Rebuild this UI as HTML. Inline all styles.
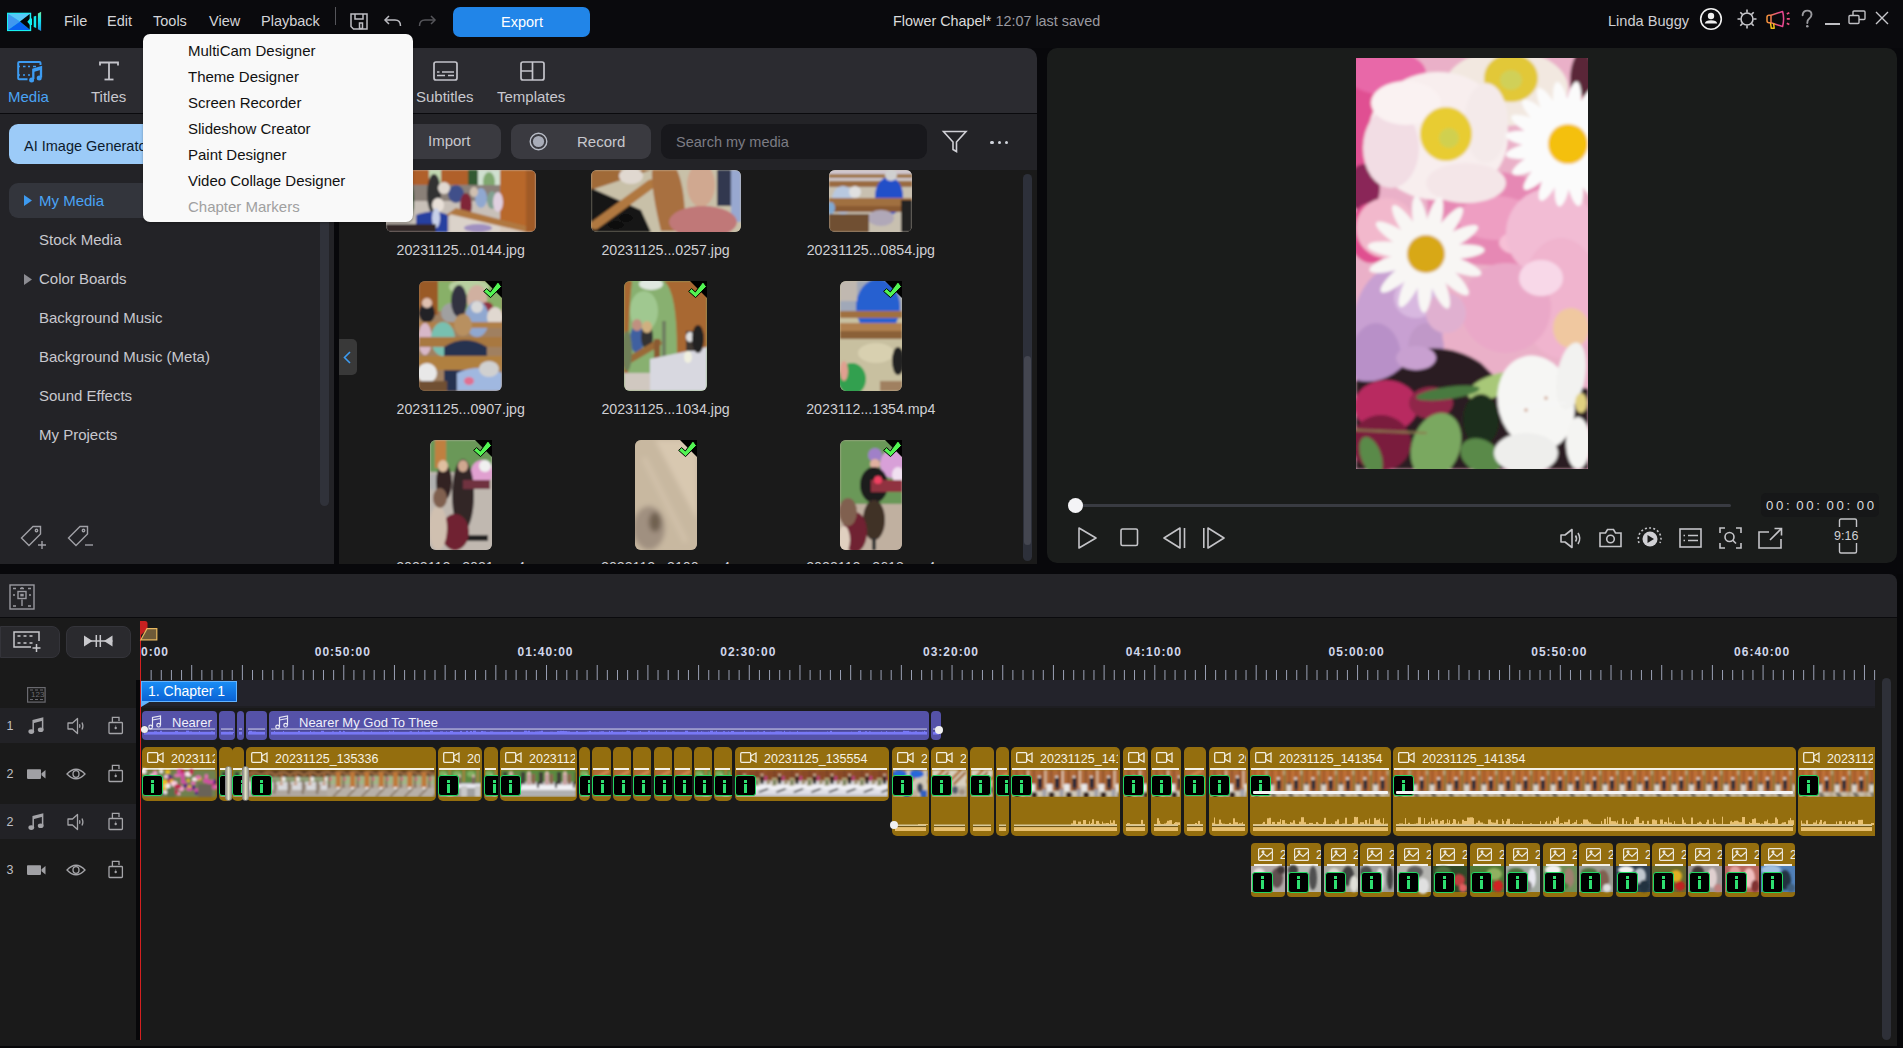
<!DOCTYPE html>
<html><head><meta charset="utf-8">
<style>
*{margin:0;padding:0;box-sizing:border-box}
html,body{width:1903px;height:1048px;overflow:hidden;background:#08080b;font-family:"Liberation Sans",sans-serif;color:#d0d0d4}
.a{position:absolute}
.t{position:absolute;white-space:nowrap;line-height:1}
svg{position:absolute;overflow:visible}
.clipv{position:absolute;background:#946e0e;border-radius:5px;overflow:hidden}
.cliph{position:absolute;left:0;right:0;height:2px;background:#f4f0e6}
.ib{position:absolute;width:21px;height:21px;background:#000;border:1.5px solid #22d862;border-radius:3px}
.ib:after{content:"";position:absolute;left:8px;top:3.5px;width:3px;height:3px;background:#2ee070;box-shadow:0 4px 0 #2ee070,0 6px 0 #2ee070,0 8px 0 #2ee070,0 10px 0 #2ee070}
.ck{position:absolute;width:21px;height:19px}
</style></head><body>

<!-- ============ TOP BAR ============ -->
<div class="a" style="left:0;top:0;width:1903px;height:48px;background:#0a0a0d"></div>
<!-- logo -->
<svg style="left:0;top:0" width="50" height="40" viewBox="0 0 50 40">
 <defs><linearGradient id="lg2" x1="0" y1="0" x2="0" y2="1"><stop offset="0" stop-color="#70e8a0"/><stop offset=".45" stop-color="#10e8f0"/><stop offset="1" stop-color="#2090e0"/></linearGradient></defs>
 <rect x="7" y="12.7" width="24.2" height="18.4" fill="#18f0f0"/>
 <path d="M8 13.7 L30.2 13.7 L20 21.5Z" fill="#58c8f8"/>
 <path d="M8 13.7 L8 30.1 L20 21.5Z" fill="#4098f0"/>
 <path d="M8 30.1 L30.2 30.1 L20 21.5Z" fill="#0862f0"/>
 <path d="M29.7 14 L29.7 29.4 L20 21.5Z" fill="#050508"/>
 <path d="M27.3 21.7 L30 18.5 L32 18.5 L32 25 L30 25Z" fill="#10f0f0"/>
 <path d="M33.7 16.6 L36.2 15.7 L36.2 28 L33.7 27Z" fill="#10eaf0"/>
 <path d="M37.9 13.6 L41.1 11.7 L41.1 31 L37.9 29.2Z" fill="url(#lg2)"/>
</svg>
<div class="t" style="left:64px;top:14px;font-size:14.5px;color:#d4d4d8">File</div>
<div class="t" style="left:107px;top:14px;font-size:14.5px;color:#d4d4d8">Edit</div>
<div class="t" style="left:153px;top:14px;font-size:14.5px;color:#d4d4d8">Tools</div>
<div class="t" style="left:209px;top:14px;font-size:14.5px;color:#d4d4d8">View</div>
<div class="t" style="left:261px;top:14px;font-size:14.5px;color:#d4d4d8">Playback</div>
<div class="a" style="left:335px;top:7px;width:1px;height:18px;background:#55555a"></div>
<!-- save -->
<svg style="left:350px;top:13px" width="19" height="17" viewBox="0 0 19 17" fill="none" stroke="#bdbdc2" stroke-width="1.5">
 <path d="M1 1 H17 V16 H3.5 L1 13.5 Z"/><path d="M5 1 V6 H13 V1"/><rect x="9.5" y="10" width="3" height="5.5"/>
</svg>
<!-- undo -->
<svg style="left:384px;top:15px" width="18" height="12" viewBox="0 0 18 12" fill="none" stroke="#bdbdc2" stroke-width="1.5">
 <path d="M5 1 L1 5 L5 9"/><path d="M1 5 H11 Q16.5 5 16.5 11"/>
</svg>
<!-- redo -->
<svg style="left:418px;top:15px" width="18" height="12" viewBox="0 0 18 12" fill="none" stroke="#55555a" stroke-width="1.5">
 <path d="M13 1 L17 5 L13 9"/><path d="M17 5 H7 Q1.5 5 1.5 11"/>
</svg>
<div class="a" style="left:453px;top:7px;width:137px;height:30px;background:#2185e8;border-radius:7px"></div>
<div class="t" style="left:501px;top:15px;font-size:14.5px;color:#fff">Export</div>
<div class="t" style="left:893px;top:14px;font-size:14.4px;color:#dcdcdc">Flower Chapel* <span style="color:#9a9aa0">12:07 last saved</span></div>
<div class="t" style="left:1608px;top:14px;font-size:14.6px;color:#cfcfd4">Linda Buggy</div>


<!-- right icons -->
<svg style="left:1699px;top:8px" width="24" height="24" viewBox="0 0 24 24" fill="none">
 <circle cx="12" cy="11" r="10.3" stroke="#f0f0f0" stroke-width="1.6"/>
 <circle cx="12" cy="8" r="3.2" fill="#f0f0f0"/><path d="M5.8 15.5 Q6.5 12.2 12 12.2 Q17.5 12.2 18.2 15.5 Z" fill="#f0f0f0"/>
</svg>
<svg style="left:1736px;top:8px" width="22" height="22" viewBox="0 0 22 22" fill="none" stroke="#c8c8cc" stroke-width="1.6">
 <circle cx="11" cy="11" r="6"/>
 <path d="M11 1.5V4.5M11 17.5V20.5M1.5 11H4.5M17.5 11H20.5M4.3 4.3L6.4 6.4M15.6 15.6L17.7 17.7M4.3 17.7L6.4 15.6M15.6 6.4L17.7 4.3"/>
</svg>
<svg style="left:1760px;top:5px" width="60" height="30" viewBox="0 0 60 30" fill="none" stroke-width="1.5" stroke-linejoin="round">
 <defs><linearGradient id="mg" x1="1766" y1="0" x2="1786" y2="0" gradientUnits="userSpaceOnUse"><stop offset="0" stop-color="#f8c020"/><stop offset=".5" stop-color="#f08048"/><stop offset="1" stop-color="#e84890"/></linearGradient>
 <linearGradient id="mg2" x1="0" y1="0" x2="20" y2="0" gradientUnits="userSpaceOnUse"><stop offset="0" stop-color="#f8c020"/><stop offset=".5" stop-color="#f08048"/><stop offset="1" stop-color="#e84890"/></linearGradient></defs>
 <path d="M11 10.2 H9 Q7 10.2 7 12.2 V15.8 Q7 17.8 9 17.8 H11 Z M11 10.2 L22.6 6.5 Q24.6 13.5 22.6 21.5 L11 17.8Z" stroke="url(#mg2)"/>
 <path d="M10.5 17.8 L11.3 23.3 H14.2 L13.6 18.4" stroke="#f4c018"/>
 <path d="M26.8 9 L29.3 7.7M26.8 13.8 H29.8M26.8 18.3 L29.3 19.6" stroke="#e85080" stroke-width="1.7"/>
 <path d="M42.6 10.2 Q43.1 5.6 47.3 5.6 Q51.5 5.6 51.5 9.6 Q51.5 12.3 48.9 14 Q47.3 15 47.3 18" stroke="#9a9a9e" stroke-width="1.9" stroke-linecap="round"/>
 <circle cx="47.3" cy="21.2" r="1.3" fill="#9a9a9e" stroke="none"/>
</svg>

<div class="a" style="left:1825px;top:23px;width:15px;height:1.5px;background:#c0c0c4"></div>
<svg style="left:1848px;top:10px" width="18" height="15" viewBox="0 0 18 15" fill="none" stroke="#c0c0c4" stroke-width="1.4">
 <rect x="1" y="5.5" width="10" height="8" rx="1"/><path d="M5 5.5 V2 Q5 1 6 1 H16 Q17 1 17 2 V8.5 Q17 9.5 16 9.5 H11"/>
</svg>
<svg style="left:1875px;top:11px" width="14" height="14" viewBox="0 0 14 14" stroke="#c8c8cc" stroke-width="1.4"><path d="M1 1L13 13M13 1L1 13"/></svg>


<svg width="0" height="0" style="position:absolute"><defs><pattern id="pt_church" patternUnits="userSpaceOnUse" width="17.3" height="27"><rect x="0" y="0" width="17.3" height="27" fill="#b86a30" opacity="1" /><rect x="3" y="0" width="1.5" height="22" fill="#9a5428" opacity="1" /><rect x="7" y="0" width="1" height="20" fill="#c87a40" opacity="1" /><rect x="10" y="0" width="1.2" height="22" fill="#9a5428" opacity="1" /><rect x="15.6" y="0" width="1.7" height="22" fill="#7a7a40" opacity="1" /><rect x="15" y="0" width="1" height="5" fill="#e0d8c0" opacity="1" /><rect x="1" y="14" width="5" height="8" fill="#d8d4cc" opacity="1" /><rect x="2" y="12" width="3" height="3" fill="#605848" opacity="1" /><ellipse cx="10" cy="8.5" rx="1.5" ry="1.5" fill="#e0e0e0" opacity="1"/><rect x="8.6" y="10" width="3.8" height="9" fill="#242a38" opacity="1" /><rect x="9" y="19" width="3" height="4" fill="#6a4030" opacity="1" /><rect x="0" y="22" width="17.3" height="5" fill="#c8bca8" opacity="1" /><path d="M3 23 L5 27" stroke="#181818" stroke-width="1.2" stroke-linecap="round"/><path d="M5.5 23 L7.5 27" stroke="#181818" stroke-width="1.0" stroke-linecap="round"/><rect x="13" y="22" width="4" height="5" fill="#b8a890" opacity="1" /></pattern><pattern id="pt_people" patternUnits="userSpaceOnUse" width="17.3" height="27"><rect x="0" y="0" width="17.3" height="27" fill="#b06a38" opacity="1" /><rect x="4" y="0" width="1.2" height="20" fill="#7a4020" opacity="1" /><rect x="12" y="0" width="1.2" height="20" fill="#8a4a28" opacity="1" /><rect x="15.5" y="0" width="1.2" height="18" fill="#f0ece0" opacity="1" /><rect x="0" y="14" width="6" height="8" fill="#e8e8e8" opacity="1" /><ellipse cx="10" cy="7" rx="1.4" ry="1.6" fill="#e0e0e0" opacity="1"/><rect x="8.5" y="8" width="4" height="10" fill="#202838" opacity="1" /><rect x="9" y="18" width="3" height="4" fill="#704028" opacity="1" /><rect x="0" y="21" width="17.3" height="6" fill="#d0c8b8" opacity="1" /><ellipse cx="5" cy="25" rx="3" ry="3" fill="#302020" opacity="1"/><rect x="13" y="19" width="4" height="8" fill="#a0a0a8" opacity="1" /></pattern><pattern id="pt_table" patternUnits="userSpaceOnUse" width="17.5" height="27"><rect x="0" y="0" width="17.5" height="27" fill="#e0e0e6" opacity="1" /><rect x="0" y="0" width="17.5" height="11" fill="#8a4a28" opacity="1" /><rect x="3" y="0" width="1" height="11" fill="#6a3a20" opacity="1" /><rect x="11" y="0" width="1" height="11" fill="#a05a30" opacity="1" /><rect x="7" y="5" width="3" height="9" fill="#1a1a1a" opacity="1" /><ellipse cx="8.5" cy="5" rx="1.3" ry="1.5" fill="#e0c0a0" opacity="1"/><rect x="11" y="6" width="2.5" height="5" fill="#c04080" opacity="1" /><rect x="1" y="8" width="5" height="9" fill="#c0b080" opacity="1" /><rect x="2" y="9.5" width="3" height="6" fill="#708060" opacity="1" /><rect x="13" y="10" width="4" height="7" fill="#a09070" opacity="1" /><path d="M0 16 L17.5 14 L17.5 18 L0 20Z" fill="#f0f0f4" opacity="1"/><path d="M6 22 L14 19" stroke="#303030" stroke-width="1.6" stroke-linecap="round"/><rect x="0" y="24" width="17.5" height="3" fill="#c8c8d0" opacity="1" /></pattern><pattern id="pt_arch1" patternUnits="userSpaceOnUse" width="14.3" height="27"><rect x="0" y="0" width="14.3" height="27" fill="#a8a098" opacity="1" /><rect x="0" y="0" width="14.3" height="7" fill="#5a3a20" opacity="1" /><path d="M0 7 Q7 0 14.3 7 L14.3 4 Q7 -2 0 4Z" fill="#9a6a40" opacity="1"/><rect x="0" y="7" width="14.3" height="6" fill="#90a078" opacity="1" /><rect x="5" y="4" width="2" height="12" fill="#b87038" opacity="1" /><ellipse cx="8" cy="9" rx="2" ry="2.5" fill="#f0f0f0" opacity="1"/><rect x="1" y="12" width="12" height="8" fill="#d8d8dc" opacity="1" /><rect x="4" y="13" width="3" height="2" fill="#c08050" opacity="1" /><rect x="0" y="14" width="2" height="8" fill="#a09080" opacity="1" /><rect x="0" y="20" width="14.3" height="7" fill="#b0a8a0" opacity="1" /><rect x="12" y="10" width="2" height="14" fill="#807060" opacity="1" /></pattern><pattern id="pt_arch2" patternUnits="userSpaceOnUse" width="14.3" height="27"><rect x="0" y="0" width="14.3" height="27" fill="#b0a898" opacity="1" /><rect x="0" y="0" width="14.3" height="6" fill="#5a3a20" opacity="1" /><path d="M0 6 Q7 0 14.3 6 L14.3 3 Q7 -2 0 3Z" fill="#9a6a40" opacity="1"/><rect x="0" y="6" width="14.3" height="8" fill="#a0b888" opacity="1" /><rect x="3" y="2" width="5" height="18" fill="#c07838" opacity="1" /><rect x="10" y="4" width="1.5" height="14" fill="#705040" opacity="1" /><ellipse cx="12" cy="9" rx="1.5" ry="2" fill="#d07080" opacity="1"/><rect x="0" y="18" width="14.3" height="9" fill="#b8b0a8" opacity="1" /><path d="M0 27 L8 19" stroke="#908070" stroke-width="2" stroke-linecap="round"/><rect x="4" y="17" width="3" height="2" fill="#f0f0f0" opacity="1" /></pattern><pattern id="pt_green" patternUnits="userSpaceOnUse" width="14" height="27"><rect x="0" y="0" width="14" height="27" fill="#a8a8a8" opacity="1" /><rect x="0" y="0" width="14" height="13" fill="#5a8a40" opacity="1" /><ellipse cx="4" cy="4" rx="4" ry="3" fill="#80b060" opacity="1"/><rect x="10" y="0" width="1.5" height="12" fill="#c08040" opacity="1" /><rect x="5" y="6" width="3" height="10" fill="#806060" opacity="1" /><ellipse cx="6.5" cy="6" rx="1.3" ry="1.5" fill="#e0c0b0" opacity="1"/><rect x="0" y="14" width="14" height="4" fill="#e8e8f0" opacity="1" /><rect x="0" y="18" width="14" height="9" fill="#a0a0a0" opacity="1" /><rect x="8" y="16" width="6" height="11" fill="#c8c8c8" opacity="1" /></pattern><pattern id="pt_greenp" patternUnits="userSpaceOnUse" width="18" height="27"><rect x="0" y="0" width="18" height="27" fill="#c0c0c0" opacity="1" /><rect x="0" y="0" width="18" height="12" fill="#5a8a40" opacity="1" /><rect x="2" y="2" width="4" height="12" fill="#403838" opacity="1" /><rect x="8" y="3" width="4" height="14" fill="#c8a0a0" opacity="1" /><ellipse cx="10" cy="3" rx="1.5" ry="1.8" fill="#e0c0b0" opacity="1"/><rect x="13" y="4" width="3" height="10" fill="#906050" opacity="1" /><rect x="0" y="15" width="18" height="5" fill="#f0f0f4" opacity="1" /><rect x="0" y="20" width="18" height="7" fill="#b0b0b0" opacity="1" /><rect x="0" y="12" width="2" height="6" fill="#202020" opacity="1" /></pattern><pattern id="pt_wood" patternUnits="userSpaceOnUse" width="17" height="27"><rect x="0" y="0" width="17" height="27" fill="#b06a38" opacity="1" /><path d="M0 10 L17 0" stroke="#d08a50" stroke-width="3" stroke-linecap="round"/><path d="M0 20 L17 8" stroke="#8a5028" stroke-width="2" stroke-linecap="round"/><rect x="0" y="22" width="17" height="5" fill="#a07050" opacity="1" /></pattern><pattern id="pt_roof" patternUnits="userSpaceOnUse" width="17" height="27"><rect x="0" y="0" width="17" height="27" fill="#d8d0c0" opacity="1" /><path d="M0 12 L12 0" stroke="#b07840" stroke-width="3" stroke-linecap="round"/><path d="M5 14 L17 2" stroke="#a06830" stroke-width="2.5" stroke-linecap="round"/><rect x="0" y="16" width="17" height="11" fill="#c0b8a8" opacity="1" /><ellipse cx="6" cy="20" rx="3" ry="4" fill="#505868" opacity="1"/><ellipse cx="13" cy="22" rx="3" ry="3" fill="#a09080" opacity="1"/></pattern><pattern id="pt_blue" patternUnits="userSpaceOnUse" width="17" height="27"><rect x="0" y="0" width="17" height="27" fill="#d0c8b8" opacity="1" /><path d="M0 12 L12 0" stroke="#b07840" stroke-width="3" stroke-linecap="round"/><ellipse cx="6" cy="4" rx="8" ry="4" fill="#2868d8" opacity="1"/><ellipse cx="10" cy="18" rx="3" ry="5" fill="#404858" opacity="1"/><ellipse cx="14" cy="24" rx="4" ry="4" fill="#3060c0" opacity="1"/><rect x="0" y="20" width="8" height="7" fill="#c0b0a0" opacity="1" /></pattern><filter id="sb" x="-5%" y="-20%" width="110%" height="140%"><feGaussianBlur stdDeviation="0.9"/></filter></defs></svg>
<div class="a" style="left:0px;top:48px;width:1037px;height:65px;background:#2b2b30;border-top-right-radius:10px"></div>
<div class="a" style="left:0px;top:113px;width:1037px;height:1px;background:#0a0a0d;"></div>
<div class="a" style="left:0px;top:114px;width:1037px;height:56px;background:#232327;"></div>
<svg style="left:10px;top:55px" width="40" height="33" viewBox="0 0 40 33" fill="none" stroke="#3d9cf2">
 <path d="M17.5 24.2 H9.2 Q8.2 24.2 8.2 23.2 V8 Q8.2 7 9.2 7 H29.5 Q30.5 7 30.5 8 V10" stroke-width="2"/>
 <path d="M9 11.5H10M13 11.5H15.5M18 11.5H20M23 11.5H26M9 20H10M13 20H15M18 20H20" stroke-width="1.7"/>
 <path d="M23.3 24 V14.5 L31 12.2 V22.5" stroke-width="2.3"/>
 <path d="M23.3 16 L31 13.7" stroke-width="2"/>
 <circle cx="21.6" cy="25" r="2.5" fill="#3d9cf2" stroke="none"/><circle cx="29.2" cy="23" r="2.5" fill="#3d9cf2" stroke="none"/>
</svg>
<div class="t" style="left:8px;top:89px;font-size:15px;color:#4aa3f4;">Media</div>
<svg style="left:99px;top:61px" width="20" height="20" viewBox="0 0 20 20" fill="none" stroke="#c4c4ca" stroke-width="1.8">
 <path d="M1 4.5 V1.5 H19 V4.5"/><path d="M10 1.5 V18.5"/><path d="M5.5 18.5 H14.5"/>
</svg>
<div class="t" style="left:91px;top:89px;font-size:15px;color:#c8c8ce;">Titles</div>
<svg style="left:433px;top:61px" width="25" height="20" viewBox="0 0 25 20" fill="none" stroke="#c4c4ca" stroke-width="1.7">
 <rect x="1" y="1" width="23" height="18" rx="2"/><path d="M4 11H6.5M9 11H21M4 14.5H12M15 14.5H21"/>
</svg>
<div class="t" style="left:416px;top:89px;font-size:15px;color:#c8c8ce;">Subtitles</div>
<svg style="left:520px;top:61px" width="25" height="20" viewBox="0 0 25 20" fill="none" stroke="#c4c4ca" stroke-width="1.7">
 <rect x="1" y="1" width="23" height="18" rx="2"/><path d="M12.5 1V19M1 10H12.5"/>
</svg>
<div class="t" style="left:497px;top:89px;font-size:15px;color:#c8c8ce;">Templates</div>
<div class="a" style="left:9px;top:124px;width:160px;height:40px;background:#9ccbf8;border-radius:9px"></div>
<div class="t" style="left:24px;top:139px;font-size:14.5px;color:#0c1a2c;">AI Image Generator</div>
<div class="a" style="left:360px;top:124px;width:141px;height:35px;background:#3a3a40;border-radius:9px"></div>
<div class="t" style="left:428px;top:133px;font-size:15px;color:#c8c8ce;">Import</div>
<div class="a" style="left:511px;top:124px;width:140px;height:35px;background:#3a3a40;border-radius:9px"></div>
<svg style="left:529px;top:132px" width="19" height="19" viewBox="0 0 19 19"><circle cx="9.5" cy="9.5" r="8.3" fill="none" stroke="#b8bcc6" stroke-width="1.4"/><circle cx="9.5" cy="9.5" r="5.6" fill="#a8acb8"/></svg>
<div class="t" style="left:577px;top:134px;font-size:15px;color:#c8c8ce;">Record</div>
<div class="a" style="left:661px;top:124px;width:266px;height:35px;background:#18181c;border-radius:9px"></div>
<div class="t" style="left:676px;top:135px;font-size:14.5px;color:#7c7c84;">Search my media</div>
<svg style="left:942px;top:130px" width="26" height="23" viewBox="0 0 26 23" fill="none" stroke="#d0d0d6" stroke-width="1.6"><path d="M1.5 1.5 H24 L14.5 12 V21.5 L11 19.5 V12 Z"/></svg>
<div class="a" style="left:990.4px;top:140.6px;width:3.3px;height:3.3px;border-radius:50%;background:#d0d4dc"></div>
<div class="a" style="left:997.9px;top:140.6px;width:3.3px;height:3.3px;border-radius:50%;background:#d0d4dc"></div>
<div class="a" style="left:1004.9px;top:140.6px;width:3.3px;height:3.3px;border-radius:50%;background:#d0d4dc"></div>
<div class="a" style="left:0px;top:170px;width:334px;height:394px;background:#232327;"></div>
<div class="a" style="left:334px;top:170px;width:5px;height:394px;background:#08080b;"></div>
<div class="a" style="left:9px;top:183px;width:325px;height:35px;background:#33353c;border-radius:9px"></div>
<svg style="left:24px;top:195px" width="8" height="11" viewBox="0 0 8 11"><path d="M0 0 L8 5.5 L0 11Z" fill="#3d9af0"/></svg>
<div class="t" style="left:39px;top:193px;font-size:15px;color:#4aa3f4;">My Media</div>
<div class="t" style="left:39px;top:232px;font-size:15px;color:#c8c8ce;">Stock Media</div>
<svg style="left:24px;top:274px" width="8" height="11" viewBox="0 0 8 11"><path d="M0 0 L8 5.5 L0 11Z" fill="#8c8c92"/></svg>
<div class="t" style="left:39px;top:271px;font-size:15px;color:#c8c8ce;">Color Boards</div>
<div class="t" style="left:39px;top:310px;font-size:15px;color:#c8c8ce;">Background Music</div>
<div class="t" style="left:39px;top:349px;font-size:15px;color:#c8c8ce;">Background Music (Meta)</div>
<div class="t" style="left:39px;top:388px;font-size:15px;color:#c8c8ce;">Sound Effects</div>
<div class="t" style="left:39px;top:427px;font-size:15px;color:#c8c8ce;">My Projects</div>
<div class="a" style="left:320px;top:183px;width:9px;height:323px;background:#30323a;border-radius:5px"></div>
<svg style="left:20px;top:524px" width="28" height="26" viewBox="0 0 28 26" fill="none" stroke="#a0a0a6" stroke-width="1.4">
 <path d="M1.5 14 L13 2.5 H20.5 V10 L9 21.5 Z"/><circle cx="16.5" cy="6.5" r="1.2"/><path d="M22 17V25M18 21H26"/></svg>
<svg style="left:67px;top:524px" width="28" height="26" viewBox="0 0 28 26" fill="none" stroke="#a0a0a6" stroke-width="1.4">
 <path d="M1.5 14 L13 2.5 H20.5 V10 L9 21.5 Z"/><circle cx="16.5" cy="6.5" r="1.2"/><path d="M18 21H26"/></svg>
<div class="a" style="left:339px;top:170px;width:698px;height:394px;background:#1a1a1a;"></div>
<svg style="left:386px;top:170px" width="150" height="62" viewBox="0 0 150 62"><defs><clipPath id="pc1"><rect x="0" y="0" width="150" height="62" rx="6"/></clipPath><filter id="pf1" x="-20%" y="-20%" width="140%" height="140%"><feGaussianBlur stdDeviation="0.9"/></filter></defs><g clip-path="url(#pc1)"><rect width="150" height="62" fill="#c8c0b8"/><g filter="url(#pf1)"><rect x="0" y="0" width="150" height="62" fill="#c8c0b8" opacity="1" /><rect x="0" y="0" width="150" height="18" fill="#b0602a" opacity="1" /><rect x="43" y="0" width="12" height="16" fill="#c0d8b0" opacity="1" /><rect x="82" y="0" width="10" height="24" fill="#305a30" opacity="1" /><rect x="92" y="0" width="22" height="22" fill="#d0e0d0" opacity="1" /><ellipse cx="103" cy="12" rx="6" ry="10" fill="#80a870" opacity="1"/><rect x="114" y="0" width="36" height="62" fill="#b8682a" opacity="1" /><rect x="140" y="0" width="10" height="62" fill="#a05a28" opacity="1" /><rect x="0" y="15" width="114" height="16" fill="#8a8078" opacity="1" /><ellipse cx="10" cy="30" rx="10" ry="14" fill="#504040" opacity="1"/><ellipse cx="22" cy="30" rx="6" ry="20" fill="#305838" opacity="1"/><ellipse cx="48" cy="24" rx="7" ry="20" fill="#303030" opacity="1"/><ellipse cx="70" cy="24" rx="8" ry="9" fill="#40508a" opacity="1"/><ellipse cx="58" cy="18" rx="6" ry="6" fill="#e0d8d0" opacity="1"/><ellipse cx="95" cy="28" rx="6" ry="10" fill="#90a8d0" opacity="1"/><ellipse cx="106" cy="30" rx="5" ry="9" fill="#80a090" opacity="1"/><ellipse cx="112" cy="32" rx="5" ry="10" fill="#e0d0e0" opacity="1"/><ellipse cx="80" cy="35" rx="6" ry="12" fill="#802838" opacity="1"/><ellipse cx="88" cy="22" rx="4" ry="5" fill="#d0c0b0" opacity="1"/><path d="M30 45 Q48 38 62 45 L62 62 L30 62Z" fill="#2840a0" opacity="1"/><ellipse cx="52" cy="35" rx="6" ry="7" fill="#e8e0d8" opacity="1"/><ellipse cx="50" cy="48" rx="4" ry="10" fill="#c8d0e8" opacity="1"/><path d="M70 38 L140 56 L140 62 L60 45Z" fill="#b07840" opacity="1"/><path d="M64 44 L140 62 L64 62Z" fill="#ddd5cc" opacity="0.9"/><rect x="0" y="54" width="50" height="8" fill="#302828" opacity="1" /><ellipse cx="92" cy="58" rx="14" ry="4" fill="#a090c0" opacity="1"/></g></g></svg>
<svg style="left:591px;top:170px" width="150" height="62" viewBox="0 0 150 62"><defs><clipPath id="pc2"><rect x="0" y="0" width="150" height="62" rx="6"/></clipPath><filter id="pf2" x="-20%" y="-20%" width="140%" height="140%"><feGaussianBlur stdDeviation="1.0"/></filter></defs><g clip-path="url(#pc2)"><rect width="150" height="62" fill="#c8c0a8"/><g filter="url(#pf2)"><rect x="0" y="0" width="150" height="62" fill="#c8c0a8" opacity="1" /><path d="M0 0 H60 L0 20Z" fill="#a06a38" opacity="1"/><ellipse cx="40" cy="6" rx="12" ry="8" fill="#e0d8d0" opacity="1"/><path d="M0 18 L50 40 L60 62 L0 62Z" fill="#181818" opacity="1"/><path d="M4 55 L60 14" stroke="#b07840" stroke-width="9" stroke-linecap="round"/><path d="M61 0 H86 Q95 20 94 61 H70 Q60 20 61 0Z" fill="#a87040" opacity="1"/><ellipse cx="110" cy="15" rx="14" ry="22" fill="#d0a890" opacity="1"/><rect x="126" y="0" width="16" height="36" fill="#303850" opacity="1" /><rect x="140" y="0" width="10" height="52" fill="#98a8d0" opacity="1" /><ellipse cx="112" cy="52" rx="34" ry="16" fill="#c07878" opacity="1"/><ellipse cx="25" cy="55" rx="8" ry="4" fill="#101010" opacity="1"/><ellipse cx="35" cy="48" rx="7" ry="4" fill="#101010" opacity="1"/></g></g></svg>
<svg style="left:829px;top:170px" width="83" height="62" viewBox="0 0 83 62"><defs><clipPath id="pc3"><rect x="0" y="0" width="83" height="62" rx="6"/></clipPath><filter id="pf3" x="-20%" y="-20%" width="140%" height="140%"><feGaussianBlur stdDeviation="0.9"/></filter></defs><g clip-path="url(#pc3)"><rect width="83" height="62" fill="#c8c0b0"/><g filter="url(#pf3)"><rect x="0" y="0" width="83" height="62" fill="#c8c0b0" opacity="1" /><rect x="0" y="0" width="83" height="10" fill="#d0c8d0" opacity="1" /><rect x="0" y="4" width="83" height="4" fill="#a07848" opacity="1" /><rect x="0" y="11" width="83" height="6" fill="#9a6a40" opacity="1" /><ellipse cx="14" cy="30" rx="11" ry="14" fill="#b8c8e0" opacity="1"/><ellipse cx="26" cy="22" rx="6" ry="6" fill="#e0e0e0" opacity="1"/><ellipse cx="60" cy="26" rx="14" ry="19" fill="#2050c8" opacity="1"/><ellipse cx="62" cy="5" rx="6" ry="6" fill="#d0d0d0" opacity="1"/><rect x="0" y="28" width="83" height="8" fill="#a07040" opacity="1" /><rect x="0" y="36" width="83" height="6" fill="#8a5a30" opacity="1" /><ellipse cx="52" cy="48" rx="13" ry="8" fill="#b0a8b8" opacity="1"/><rect x="0" y="44" width="40" height="18" fill="#705030" opacity="1" /><rect x="72" y="30" width="11" height="32" fill="#202020" opacity="1" /><ellipse cx="2" cy="38" rx="4" ry="6" fill="#80a8d0" opacity="1"/></g></g></svg>
<div class="t" style="left:380.7px;width:160px;text-align:center;top:243px;font-size:14.2px;color:#cfcfd4">20231125...0144.jpg</div>
<div class="t" style="left:585.6px;width:160px;text-align:center;top:243px;font-size:14.2px;color:#cfcfd4">20231125...0257.jpg</div>
<div class="t" style="left:790.8px;width:160px;text-align:center;top:243px;font-size:14.2px;color:#cfcfd4">20231125...0854.jpg</div>
<svg style="left:419px;top:281px" width="83" height="110" viewBox="0 0 83 110"><defs><clipPath id="pc4"><rect x="0" y="0" width="83" height="110" rx="6"/></clipPath><filter id="pf4" x="-20%" y="-20%" width="140%" height="140%"><feGaussianBlur stdDeviation="0.9"/></filter></defs><g clip-path="url(#pc4)"><rect width="83" height="110" fill="#a08060"/><g filter="url(#pf4)"><rect x="0" y="0" width="83" height="110" fill="#a08060" opacity="1" /><rect x="0" y="0" width="83" height="30" fill="#88b068" opacity="1" /><ellipse cx="50" cy="6" rx="20" ry="8" fill="#b8d0a0" opacity="1"/><rect x="0" y="0" width="19" height="34" fill="#9a5a28" opacity="1" /><ellipse cx="8" cy="32" rx="8" ry="10" fill="#202028" opacity="1"/><ellipse cx="8" cy="22" rx="5" ry="5" fill="#e0c0b0" opacity="1"/><ellipse cx="32" cy="32" rx="10" ry="10" fill="#a0a0a0" opacity="1"/><ellipse cx="40" cy="20" rx="8" ry="16" fill="#303040" opacity="1"/><ellipse cx="58" cy="18" rx="10" ry="14" fill="#d0b0a0" opacity="1"/><ellipse cx="68" cy="26" rx="6" ry="5" fill="#903040" opacity="1"/><ellipse cx="58" cy="38" rx="12" ry="18" fill="#90a8d0" opacity="1"/><ellipse cx="58" cy="26" rx="6" ry="6" fill="#d8d8d8" opacity="1"/><ellipse cx="76" cy="36" rx="8" ry="10" fill="#e0d8d0" opacity="1"/><rect x="0" y="41" width="83" height="6" fill="#b08048" opacity="1" /><ellipse cx="6" cy="58" rx="7" ry="16" fill="#d8b8c8" opacity="1"/><ellipse cx="24" cy="58" rx="12" ry="17" fill="#78c0b0" opacity="1"/><ellipse cx="44" cy="44" rx="9" ry="11" fill="#b89060" opacity="1"/><rect x="0" y="56" width="83" height="10" fill="#a87840" opacity="1" /><path d="M25 66 Q46 52 68 66 L68 110 L25 110Z" fill="#283050" opacity="1"/><rect x="0" y="75" width="83" height="14" fill="#b08040" opacity="1" /><ellipse cx="8" cy="92" rx="10" ry="10" fill="#e8e8e8" opacity="1"/><path d="M38 92 Q60 82 83 92 L83 110 L38 110Z" fill="#a0b8e0" opacity="1"/><ellipse cx="70" cy="88" rx="10" ry="8" fill="#d0d0d0" opacity="1"/><ellipse cx="50" cy="100" rx="5" ry="4" fill="#e07090" opacity="1"/><rect x="0" y="100" width="28" height="10" fill="#705030" opacity="1" /></g></g></svg>
<svg style="left:624px;top:281px" width="83" height="110" viewBox="0 0 83 110"><defs><clipPath id="pc5"><rect x="0" y="0" width="83" height="110" rx="6"/></clipPath><filter id="pf5" x="-20%" y="-20%" width="140%" height="140%"><feGaussianBlur stdDeviation="0.9"/></filter></defs><g clip-path="url(#pc5)"><rect width="83" height="110" fill="#88b070"/><g filter="url(#pf5)"><rect x="0" y="0" width="83" height="110" fill="#88b070" opacity="1" /><path d="M0 0 H8 Q4 30 4 110 H0Z" fill="#a86830" opacity="1"/><path d="M40 0 H83 V110 H53 V70 Q53 10 40 0Z" fill="#a86830" opacity="1"/><ellipse cx="27" cy="3" rx="12" ry="6" fill="#e0e8e0" opacity="1"/><ellipse cx="20" cy="30" rx="14" ry="20" fill="#a0c890" opacity="1"/><rect x="38" y="40" width="4" height="40" fill="#708060" opacity="1" /><ellipse cx="13" cy="58" rx="7" ry="14" fill="#4060a0" opacity="1"/><ellipse cx="13" cy="44" rx="5" ry="6" fill="#c09080" opacity="1"/><ellipse cx="23" cy="56" rx="6" ry="12" fill="#303030" opacity="1"/><ellipse cx="23" cy="46" rx="5" ry="6" fill="#d0b080" opacity="1"/><path d="M0 82 L34 62" stroke="#9a6a38" stroke-width="7" stroke-linecap="round"/><rect x="30" y="58" width="6" height="40" fill="#8a5a30" opacity="1" /><ellipse cx="3" cy="70" rx="5" ry="20" fill="#708058" opacity="1"/><rect x="0" y="92" width="28" height="18" fill="#d0c8c0" opacity="1" /><path d="M26 78 L83 66 L83 110 L26 110Z" fill="#d8d8e0" opacity="1"/><rect x="62" y="50" width="14" height="20" fill="#403830" opacity="1" /><ellipse cx="66" cy="56" rx="4" ry="5" fill="#e0e0e0" opacity="1"/><ellipse cx="74" cy="58" rx="6" ry="14" fill="#202020" opacity="1"/><ellipse cx="64" cy="76" rx="4" ry="6" fill="#f0f0e0" opacity="1"/></g></g></svg>
<svg style="left:840px;top:281px" width="62" height="110" viewBox="0 0 62 110"><defs><clipPath id="pc6"><rect x="0" y="0" width="62" height="110" rx="6"/></clipPath><filter id="pf6" x="-20%" y="-20%" width="140%" height="140%"><feGaussianBlur stdDeviation="0.9"/></filter></defs><g clip-path="url(#pc6)"><rect width="62" height="110" fill="#c8c0a0"/><g filter="url(#pf6)"><rect x="0" y="0" width="62" height="110" fill="#c8c0a0" opacity="1" /><rect x="0" y="0" width="62" height="30" fill="#a0a8b8" opacity="1" /><ellipse cx="38" cy="26" rx="22" ry="28" fill="#2860d0" opacity="1"/><rect x="0" y="0" width="17" height="20" fill="#c0b8b0" opacity="1" /><rect x="0" y="30" width="62" height="7" fill="#a07040" opacity="1" /><rect x="0" y="42" width="62" height="8" fill="#b08050" opacity="1" /><rect x="0" y="50" width="62" height="8" fill="#8a6038" opacity="1" /><rect x="0" y="58" width="62" height="43" fill="#c8c0a0" opacity="1" /><ellipse cx="36" cy="72" rx="18" ry="10" fill="#d8d0b0" opacity="1"/><ellipse cx="12" cy="98" rx="14" ry="16" fill="#30a050" opacity="1"/><ellipse cx="4" cy="90" rx="4" ry="10" fill="#e0a090" opacity="1"/><ellipse cx="58" cy="80" rx="6" ry="14" fill="#202020" opacity="1"/><rect x="40" y="100" width="22" height="10" fill="#a08060" opacity="1" /></g></g></svg>
<svg style="left:480px;top:281px" width="22" height="20" viewBox="0 0 22 20"><path d="M5 0 H22 V17 Z" fill="#000"/><path d="M3.6 10.4 L6.6 7.6 L10.3 11 L18 0.8 L21.4 5.6 L10.6 16.6 Z" fill="#52f452" stroke="#000" stroke-width="1" stroke-linejoin="round"/></svg>
<svg style="left:685px;top:281px" width="22" height="20" viewBox="0 0 22 20"><path d="M5 0 H22 V17 Z" fill="#000"/><path d="M3.6 10.4 L6.6 7.6 L10.3 11 L18 0.8 L21.4 5.6 L10.6 16.6 Z" fill="#52f452" stroke="#000" stroke-width="1" stroke-linejoin="round"/></svg>
<svg style="left:880px;top:281px" width="22" height="20" viewBox="0 0 22 20"><path d="M5 0 H22 V17 Z" fill="#000"/><path d="M3.6 10.4 L6.6 7.6 L10.3 11 L18 0.8 L21.4 5.6 L10.6 16.6 Z" fill="#52f452" stroke="#000" stroke-width="1" stroke-linejoin="round"/></svg>
<div class="t" style="left:380.7px;width:160px;text-align:center;top:402px;font-size:14.2px;color:#cfcfd4">20231125...0907.jpg</div>
<div class="t" style="left:585.6px;width:160px;text-align:center;top:402px;font-size:14.2px;color:#cfcfd4">20231125...1034.jpg</div>
<div class="t" style="left:790.8px;width:160px;text-align:center;top:402px;font-size:14.2px;color:#cfcfd4">2023112...1354.mp4</div>
<svg style="left:430px;top:440px" width="62" height="110" viewBox="0 0 62 110"><defs><clipPath id="pc7"><rect x="0" y="0" width="62" height="110" rx="6"/></clipPath><filter id="pf7" x="-20%" y="-20%" width="140%" height="140%"><feGaussianBlur stdDeviation="0.9"/></filter></defs><g clip-path="url(#pc7)"><rect width="62" height="110" fill="#c0b8b0"/><g filter="url(#pf7)"><rect x="0" y="0" width="62" height="110" fill="#c0b8b0" opacity="1" /><rect x="0" y="0" width="62" height="32" fill="#6a9858" opacity="1" /><rect x="5" y="0" width="11" height="28" fill="#c08040" opacity="1" /><ellipse cx="52" cy="32" rx="11" ry="12" fill="#e0a0d0" opacity="1"/><ellipse cx="55" cy="26" rx="6" ry="6" fill="#f0f0f0" opacity="1"/><ellipse cx="3" cy="42" rx="6" ry="8" fill="#b0b0b0" opacity="1"/><ellipse cx="14" cy="42" rx="8" ry="18" fill="#302020" opacity="1"/><ellipse cx="13" cy="26" rx="5" ry="6" fill="#e0c0a0" opacity="1"/><ellipse cx="33" cy="55" rx="11" ry="36" fill="#302828" opacity="1"/><ellipse cx="33" cy="26" rx="5" ry="6" fill="#d0a890" opacity="1"/><rect x="33" y="40" width="27" height="9" fill="#703040" opacity="1" /><rect x="28" y="95" width="30" height="6" fill="#202020" opacity="1" /><ellipse cx="25" cy="92" rx="14" ry="18" fill="#702030" opacity="1"/><ellipse cx="8" cy="88" rx="9" ry="22" fill="#d0c0b0" opacity="1"/><ellipse cx="10" cy="58" rx="7" ry="10" fill="#806050" opacity="1"/></g></g></svg>
<svg style="left:635px;top:440px" width="62" height="110" viewBox="0 0 62 110"><defs><clipPath id="pc8"><rect x="0" y="0" width="62" height="110" rx="6"/></clipPath><filter id="pf8" x="-20%" y="-20%" width="140%" height="140%"><feGaussianBlur stdDeviation="2.5"/></filter></defs><g clip-path="url(#pc8)"><rect width="62" height="110" fill="#c8b8a0"/><g filter="url(#pf8)"><rect x="0" y="0" width="62" height="110" fill="#c8b8a0" opacity="1" /><path d="M20 0 L62 0 L62 80 Z" fill="#d8c8b0" opacity="1"/><path d="M10 20 L50 100" stroke="#d0c0a8" stroke-width="6" stroke-linecap="round"/><ellipse cx="14" cy="88" rx="16" ry="22" fill="#a09080" opacity="1"/><ellipse cx="20" cy="82" rx="6" ry="10" fill="#706050" opacity="1"/></g></g></svg>
<svg style="left:840px;top:440px" width="62" height="110" viewBox="0 0 62 110"><defs><clipPath id="pc9"><rect x="0" y="0" width="62" height="110" rx="6"/></clipPath><filter id="pf9" x="-20%" y="-20%" width="140%" height="140%"><feGaussianBlur stdDeviation="0.9"/></filter></defs><g clip-path="url(#pc9)"><rect width="62" height="110" fill="#c0b0a0"/><g filter="url(#pf9)"><rect x="0" y="0" width="62" height="110" fill="#c0b0a0" opacity="1" /><rect x="0" y="0" width="62" height="64" fill="#6a9858" opacity="1" /><ellipse cx="52" cy="24" rx="12" ry="14" fill="#d8a0d8" opacity="1"/><ellipse cx="58" cy="35" rx="6" ry="8" fill="#f0e0f0" opacity="1"/><ellipse cx="35" cy="15" rx="7" ry="7" fill="#a080c8" opacity="1"/><ellipse cx="35" cy="24" rx="5" ry="5" fill="#e0b0a0" opacity="1"/><ellipse cx="34" cy="45" rx="14" ry="18" fill="#1e1e1e" opacity="1"/><rect x="31" y="40" width="31" height="12" fill="#903040" opacity="1" /><ellipse cx="38" cy="40" rx="4" ry="4" fill="#f04060" opacity="1"/><ellipse cx="34" cy="80" rx="11" ry="20" fill="#403028" opacity="1"/><rect x="32" y="98" width="4" height="12" fill="#303030" opacity="1" /><ellipse cx="15" cy="92" rx="12" ry="20" fill="#702030" opacity="1"/><ellipse cx="8" cy="72" rx="9" ry="14" fill="#806050" opacity="1"/><ellipse cx="4" cy="100" rx="6" ry="14" fill="#e0d0c0" opacity="1"/></g></g></svg>
<svg style="left:470px;top:440px" width="22" height="20" viewBox="0 0 22 20"><path d="M5 0 H22 V17 Z" fill="#000"/><path d="M3.6 10.4 L6.6 7.6 L10.3 11 L18 0.8 L21.4 5.6 L10.6 16.6 Z" fill="#52f452" stroke="#000" stroke-width="1" stroke-linejoin="round"/></svg>
<svg style="left:675px;top:440px" width="22" height="20" viewBox="0 0 22 20"><path d="M5 0 H22 V17 Z" fill="#000"/><path d="M3.6 10.4 L6.6 7.6 L10.3 11 L18 0.8 L21.4 5.6 L10.6 16.6 Z" fill="#52f452" stroke="#000" stroke-width="1" stroke-linejoin="round"/></svg>
<svg style="left:880px;top:440px" width="22" height="20" viewBox="0 0 22 20"><path d="M5 0 H22 V17 Z" fill="#000"/><path d="M3.6 10.4 L6.6 7.6 L10.3 11 L18 0.8 L21.4 5.6 L10.6 16.6 Z" fill="#52f452" stroke="#000" stroke-width="1" stroke-linejoin="round"/></svg>
<div class="t" style="left:380.7px;width:160px;text-align:center;top:560px;font-size:14.2px;color:#cfcfd4;height:4px;overflow:hidden">2023112...3031.mp4</div>
<div class="t" style="left:585.6px;width:160px;text-align:center;top:560px;font-size:14.2px;color:#cfcfd4;height:4px;overflow:hidden">2023112...3100.mp4</div>
<div class="t" style="left:790.8px;width:160px;text-align:center;top:560px;font-size:14.2px;color:#cfcfd4;height:4px;overflow:hidden">2023112...3618.mp4</div>
<div class="a" style="left:339px;top:339px;width:18px;height:36px;background:#393939;border-radius:0 5px 5px 0"></div>
<svg style="left:342.5px;top:351px" width="8" height="13" viewBox="0 0 8 13"><path d="M7 1 L1.5 6.5 L7 12" fill="none" stroke="#3d9cf2" stroke-width="1.6"/></svg>
<div class="a" style="left:1023px;top:174px;width:9px;height:387px;background:#2d303a;border-radius:5px"></div>
<div class="a" style="left:1024px;top:356px;width:7px;height:189px;background:#444650;border-radius:4px"></div>
<div class="a" style="left:1047px;top:48px;width:850px;height:515px;background:#1a1c1b;border-radius:10px"></div>
<svg style="left:1356px;top:58px" width="232" height="411" viewBox="0 0 232 411"><defs><clipPath id="pc10"><rect x="0" y="0" width="232" height="411" rx="0"/></clipPath><filter id="pf10" x="-20%" y="-20%" width="140%" height="140%"><feGaussianBlur stdDeviation="1.6"/></filter></defs><g clip-path="url(#pc10)"><rect width="232" height="411" fill="#eab0c8"/><g filter="url(#pf10)"><rect x="0" y="0" width="232" height="411" fill="#eab0c8" opacity="1" /><ellipse cx="20" cy="50" rx="40" ry="75" fill="#e04f92" opacity="1"/><ellipse cx="30" cy="15" rx="40" ry="22" fill="#e868a8" opacity="1"/><ellipse cx="8" cy="130" rx="16" ry="24" fill="#8a2858" opacity="1"/><ellipse cx="15" cy="175" rx="22" ry="30" fill="#e05090" opacity="1"/><path d="M70 120 Q130 100 200 130 L210 200 Q150 215 75 200Z" fill="#e688b4" opacity="1"/><ellipse cx="140" cy="160" rx="38" ry="22" fill="#ee9ec2" opacity="1"/><ellipse cx="165" cy="185" rx="22" ry="12" fill="#f6c0d6" opacity="1"/><ellipse cx="195" cy="175" rx="45" ry="45" fill="#f2bcd4" opacity="1"/><ellipse cx="205" cy="240" rx="40" ry="60" fill="#f0b4ce" opacity="1"/><ellipse cx="150" cy="250" rx="45" ry="45" fill="#eaa8c8" opacity="1"/><ellipse cx="185" cy="220" rx="22" ry="18" fill="#f8d8e8" opacity="1"/><ellipse cx="215" cy="270" rx="18" ry="20" fill="#f0c8a0" opacity="1"/><ellipse cx="30" cy="170" rx="30" ry="30" fill="#f2b8cc" opacity="1"/><ellipse cx="42" cy="270" rx="45" ry="62" fill="#c8a0d2" opacity="1"/><ellipse cx="20" cy="300" rx="25" ry="35" fill="#b890c8" opacity="1"/><ellipse cx="60" cy="240" rx="22" ry="20" fill="#d8b8e0" opacity="1"/><ellipse cx="70" cy="290" rx="18" ry="25" fill="#c098c8" opacity="1"/><ellipse cx="90" cy="255" rx="20" ry="20" fill="#e0b0d0" opacity="1"/><ellipse cx="150" cy="30" rx="62" ry="38" fill="#f2e8e0" opacity="1"/><ellipse cx="155" cy="20" rx="27" ry="24" fill="#e2c838" opacity="1"/><ellipse cx="155" cy="22" rx="11" ry="10" fill="#d0d058" opacity="1"/><ellipse cx="82" cy="78" rx="70" ry="64" fill="#f8eeee" opacity="1"/><ellipse cx="35" cy="90" rx="28" ry="40" fill="#f2dde4" opacity="1"/><ellipse cx="110" cy="125" rx="40" ry="20" fill="#f4e6e8" opacity="1"/><ellipse cx="50" cy="45" rx="35" ry="22" fill="#faf2f2" opacity="1"/><ellipse cx="130" cy="65" rx="22" ry="40" fill="#f4eaea" opacity="1"/><ellipse cx="90" cy="76" rx="26" ry="27" fill="#e8cc30" opacity="1"/><ellipse cx="93" cy="80" rx="10" ry="10" fill="#d0d050" opacity="1"/><ellipse cx="226" cy="22" rx="12" ry="28" fill="#5a2838" opacity="1"/><ellipse cx="222" cy="50" rx="8" ry="15" fill="#c04868" opacity="1"/><ellipse cx="212" cy="53.0" rx="7.8" ry="30.0" fill="#fbfbfb" transform="rotate(8.0 212 86) " /><ellipse cx="212" cy="53.0" rx="7.8" ry="30.0" fill="#fbfbfb" transform="rotate(26.0 212 86) " /><ellipse cx="212" cy="53.0" rx="7.8" ry="30.0" fill="#fbfbfb" transform="rotate(44.0 212 86) " /><ellipse cx="212" cy="53.0" rx="7.8" ry="30.0" fill="#fbfbfb" transform="rotate(62.0 212 86) " /><ellipse cx="212" cy="53.0" rx="7.8" ry="30.0" fill="#fbfbfb" transform="rotate(80.0 212 86) " /><ellipse cx="212" cy="53.0" rx="7.8" ry="30.0" fill="#fbfbfb" transform="rotate(98.0 212 86) " /><ellipse cx="212" cy="53.0" rx="7.8" ry="30.0" fill="#fbfbfb" transform="rotate(116.0 212 86) " /><ellipse cx="212" cy="53.0" rx="7.8" ry="30.0" fill="#fbfbfb" transform="rotate(134.0 212 86) " /><ellipse cx="212" cy="53.0" rx="7.8" ry="30.0" fill="#fbfbfb" transform="rotate(152.0 212 86) " /><ellipse cx="212" cy="53.0" rx="7.8" ry="30.0" fill="#fbfbfb" transform="rotate(170.0 212 86) " /><ellipse cx="212" cy="53.0" rx="7.8" ry="30.0" fill="#fbfbfb" transform="rotate(188.0 212 86) " /><ellipse cx="212" cy="53.0" rx="7.8" ry="30.0" fill="#fbfbfb" transform="rotate(206.0 212 86) " /><ellipse cx="212" cy="53.0" rx="7.8" ry="30.0" fill="#fbfbfb" transform="rotate(224.0 212 86) " /><ellipse cx="212" cy="53.0" rx="7.8" ry="30.0" fill="#fbfbfb" transform="rotate(242.0 212 86) " /><ellipse cx="212" cy="53.0" rx="7.8" ry="30.0" fill="#fbfbfb" transform="rotate(260.0 212 86) " /><ellipse cx="212" cy="53.0" rx="7.8" ry="30.0" fill="#fbfbfb" transform="rotate(278.0 212 86) " /><ellipse cx="212" cy="53.0" rx="7.8" ry="30.0" fill="#fbfbfb" transform="rotate(296.0 212 86) " /><ellipse cx="212" cy="53.0" rx="7.8" ry="30.0" fill="#fbfbfb" transform="rotate(314.0 212 86) " /><ellipse cx="212" cy="53.0" rx="7.8" ry="30.0" fill="#fbfbfb" transform="rotate(332.0 212 86) " /><ellipse cx="212" cy="53.0" rx="7.8" ry="30.0" fill="#fbfbfb" transform="rotate(350.0 212 86) " /><ellipse cx="212" cy="86" rx="20" ry="20" fill="#f4c010" opacity="1"/><ellipse cx="70" cy="165.2" rx="7.3" ry="28.0" fill="#f8f6f4" transform="rotate(14.0 70 196) " /><ellipse cx="70" cy="165.2" rx="7.3" ry="28.0" fill="#f8f6f4" transform="rotate(38.0 70 196) " /><ellipse cx="70" cy="165.2" rx="7.3" ry="28.0" fill="#f8f6f4" transform="rotate(62.0 70 196) " /><ellipse cx="70" cy="165.2" rx="7.3" ry="28.0" fill="#f8f6f4" transform="rotate(86.0 70 196) " /><ellipse cx="70" cy="165.2" rx="7.3" ry="28.0" fill="#f8f6f4" transform="rotate(110.0 70 196) " /><ellipse cx="70" cy="165.2" rx="7.3" ry="28.0" fill="#f8f6f4" transform="rotate(134.0 70 196) " /><ellipse cx="70" cy="165.2" rx="7.3" ry="28.0" fill="#f8f6f4" transform="rotate(158.0 70 196) " /><ellipse cx="70" cy="165.2" rx="7.3" ry="28.0" fill="#f8f6f4" transform="rotate(182.0 70 196) " /><ellipse cx="70" cy="165.2" rx="7.3" ry="28.0" fill="#f8f6f4" transform="rotate(206.0 70 196) " /><ellipse cx="70" cy="165.2" rx="7.3" ry="28.0" fill="#f8f6f4" transform="rotate(230.0 70 196) " /><ellipse cx="70" cy="165.2" rx="7.3" ry="28.0" fill="#f8f6f4" transform="rotate(254.0 70 196) " /><ellipse cx="70" cy="165.2" rx="7.3" ry="28.0" fill="#f8f6f4" transform="rotate(278.0 70 196) " /><ellipse cx="70" cy="165.2" rx="7.3" ry="28.0" fill="#f8f6f4" transform="rotate(302.0 70 196) " /><ellipse cx="70" cy="165.2" rx="7.3" ry="28.0" fill="#f8f6f4" transform="rotate(326.0 70 196) " /><ellipse cx="70" cy="165.2" rx="7.3" ry="28.0" fill="#f8f6f4" transform="rotate(350.0 70 196) " /><ellipse cx="70" cy="196" rx="19" ry="19" fill="#d8a818" opacity="1"/><path d="M60 292 Q95 285 125 305 L150 330 L232 330 L232 411 L0 411 L0 322 Q35 330 60 292Z" fill="#2a1a20" opacity="1"/><ellipse cx="30" cy="348" rx="32" ry="26" fill="#b82a60" opacity="1"/><ellipse cx="25" cy="385" rx="30" ry="28" fill="#7a1c3c" opacity="1"/><ellipse cx="75" cy="345" rx="22" ry="16" fill="#902848" opacity="1"/><ellipse cx="60" cy="300" rx="20" ry="12" fill="#c8a0d0" opacity="1"/><ellipse cx="138" cy="328" rx="28" ry="11" fill="#a8c878" transform="rotate(-20 138 328)"/><ellipse cx="92" cy="335" rx="32" ry="6" fill="#4a7a40" transform="rotate(-8 92 335)"/><ellipse cx="125" cy="362" rx="18" ry="26" fill="#1e2e1e" opacity="1"/><ellipse cx="80" cy="388" rx="24" ry="34" fill="#7aa860" transform="rotate(20 80 388)"/><ellipse cx="125" cy="398" rx="22" ry="16" fill="#5a8a48" transform="rotate(30 125 398)"/><ellipse cx="15" cy="398" rx="10" ry="20" fill="#5a8a48" transform="rotate(-20 15 398)"/><path d="M0 372 L70 375" stroke="#8a7a50" stroke-width="2" stroke-linecap="round"/><ellipse cx="180" cy="345" rx="38" ry="48" fill="#f6f6f4" transform="rotate(-15 180 345)"/><ellipse cx="215" cy="318" rx="14" ry="34" fill="#f2f2f0" transform="rotate(10 215 318)"/><ellipse cx="170" cy="395" rx="32" ry="20" fill="#eeeeec" transform="rotate(0 170 395)"/><ellipse cx="222" cy="385" rx="12" ry="26" fill="#f4f4f2" transform="rotate(0 222 385)"/><ellipse cx="225" cy="345" rx="6" ry="10" fill="#e0d080" opacity="1"/><path d="M150 350 L210 345" stroke="#f8f8f8" stroke-width="1.2" stroke-linecap="round"/><ellipse cx="170" cy="352" rx="1.5" ry="1.5" fill="#c08060" opacity="1"/><ellipse cx="190" cy="340" rx="1.5" ry="1.5" fill="#c08060" opacity="1"/></g></g></svg>
<div class="a" style="left:1076px;top:504px;width:655px;height:3px;background:#393b42;border-radius:2px"></div>
<div class="a" style="left:1068px;top:498px;width:15px;height:15px;border-radius:50%;background:#f4f4f6"></div>
<div class="a" style="left:1761px;top:493px;width:118px;height:24px;background:#161718;border-radius:5px"></div>
<div class="t" style="left:1766px;top:499px;font-size:13.2px;color:#dcdcde;letter-spacing:2.7px">00:&#8202;00:&#8202;00:&#8202;00</div>
<svg style="left:1078px;top:527px" width="19" height="22" viewBox="0 0 19 22" fill="none" stroke="#c4c4c8" stroke-width="1.6"><path d="M1 1 L18 11 L1 21Z" stroke-linejoin="round"/></svg>
<svg style="left:1120px;top:528px" width="18" height="18" viewBox="0 0 18 18" fill="none" stroke="#c4c4c8" stroke-width="1.6"><rect x="1" y="1" width="16.5" height="16.5" rx="1.5"/></svg>
<svg style="left:1163px;top:527px" width="23" height="22" viewBox="0 0 23 22" fill="none" stroke="#c4c4c8" stroke-width="1.6"><path d="M17 1 L1 11 L17 21Z" stroke-linejoin="round"/><path d="M21.5 1V21"/></svg>
<svg style="left:1203px;top:527px" width="23" height="22" viewBox="0 0 23 22" fill="none" stroke="#c4c4c8" stroke-width="1.6"><path d="M5 1 L21 11 L5 21Z" stroke-linejoin="round"/><path d="M0.8 1V21"/></svg>
<svg style="left:1560px;top:528px" width="21" height="21" viewBox="0 0 21 21" fill="none" stroke="#c4c4c8" stroke-width="1.6"><path d="M1 7 H5 L12 1.5 V19.5 L5 14 H1Z" stroke-linejoin="round"/><path d="M15.5 7.5 Q17.5 10.5 15.5 13.5M18 5 Q21.5 10.5 18 16"/></svg>
<svg style="left:1599px;top:528px" width="23" height="20" viewBox="0 0 23 20" fill="none" stroke="#c4c4c8" stroke-width="1.6"><path d="M1 5 H6.5 L8.5 1.5 H14.5 L16.5 5 H22 V18.5 H1Z"/><circle cx="11.5" cy="11" r="3.8"/></svg>
<svg style="left:1636px;top:525px" width="30" height="24" viewBox="0 0 30 24"><circle cx="14" cy="14" r="7.5" fill="#d0d0d4"/><path d="M11.5 10 L18 14 L11.5 18Z" fill="#1b1c1c"/><g stroke="#c4c4c8" stroke-width="1.6" fill="none" stroke-dasharray="2 2.2"><path d="M3 18 A11 11 0 0 1 14 3 A11 11 0 0 1 25 14 A11 11 0 0 1 24 18"/></g></svg>
<svg style="left:1679px;top:528px" width="23" height="20" viewBox="0 0 23 20" fill="none" stroke="#c4c4c8" stroke-width="1.6"><rect x="1" y="1" width="21" height="18"/><path d="M4.5 7.5H6M9 7.5H19M4.5 12.5H6M9 12.5H19"/></svg>
<svg style="left:1719px;top:527px" width="23" height="22" viewBox="0 0 23 22" fill="none" stroke="#c4c4c8" stroke-width="1.6"><path d="M1 6V1H6M17 1H22V6M22 16V21H17M6 21H1V16"/><circle cx="10.5" cy="10" r="4.5"/><path d="M13.8 13.3 L17 16.5"/></svg>
<svg style="left:1758px;top:527px" width="25" height="22" viewBox="0 0 25 22" fill="none" stroke="#c4c4c8" stroke-width="1.6"><path d="M11 5H1V21H23V12"/><path d="M12 13 L23 2M16.5 1.5H23.5V8.5" /></svg>
<svg style="left:1836px;top:518px" width="24" height="36" viewBox="0 0 24 36" fill="none" stroke="#c4c4c8" stroke-width="1.4"><path d="M3.5 9 V2.5 Q3.5 1 5 1 H19 Q20.5 1 20.5 2.5 V9M3.5 25 V33.5 Q3.5 35 5 35 H19 Q20.5 35 20.5 33.5 V25"/></svg>
<div class="t" style="left:1834px;top:530px;font-size:12.5px;color:#d0d0d4;">9:16</div>
<div class="a" style="left:0px;top:574px;width:1897px;height:43px;background:#242428;border-top-right-radius:8px"></div>
<div class="a" style="left:0px;top:617px;width:1897px;height:1px;background:#0a0a0d;"></div>
<div class="a" style="left:0px;top:618px;width:1897px;height:428px;background:#1a1a1a;"></div>
<svg style="left:9px;top:584px" width="26" height="26" viewBox="0 0 26 26" fill="none" stroke="#9a9aa0" stroke-width="1.4">
<rect x="1" y="1" width="24" height="24"/><path d="M4 4.5H7M11 4.5H15M19 4.5H22M4 11H6M20 11H22M4 22H7M19 22H22M13 15.5V22M13 3V4.5" /><rect x="9" y="7.5" width="8" height="7" fill="none"/><rect x="11.3" y="9.8" width="3.4" height="2.6" fill="#9a9aa0" stroke="none"/></svg>
<div class="a" style="left:0px;top:626px;width:60px;height:32px;background:#2a2a2e;border:1px solid #34343a;border-radius:0 8px 8px 0"></div>
<div class="a" style="left:66px;top:626px;width:65px;height:32px;background:#2a2a2e;border:1px solid #34343a;border-radius:8px"></div>
<svg style="left:13px;top:631px" width="30" height="22" viewBox="0 0 30 22" fill="none" stroke="#c8c8cc" stroke-width="1.5">
<path d="M26 10V1H1V16H18"/><path d="M4.5 5H7.5M10.5 5H13.5M16.5 5H19.5M4.5 12H7.5M10.5 12H13.5M16.5 12H19.5"/><path d="M23.5 13V21M19.5 17H27.5"/></svg>
<svg style="left:84px;top:634px" width="29" height="14" viewBox="0 0 29 14"><path d="M0 1.5 L8.5 7 L0 12.5Z M28.5 1.5 L20 7 L28.5 12.5Z" fill="#c8c8cc"/><path d="M0 7H28.5M12.3 1V13M16.3 1V13" stroke="#c8c8cc" stroke-width="1.5"/></svg>
<div class="a" style="left:0px;top:708px;width:136px;height:35px;background:#222226;"></div>
<div class="a" style="left:0px;top:804px;width:136px;height:35px;background:#222226;"></div>
<svg style="left:27px;top:687px" width="19" height="16" viewBox="0 0 19 16" fill="none" stroke="#6a6a70" stroke-width="1.2"><rect x="0.6" y="0.6" width="17.5" height="14.5"/><path d="M3 3H6M8 3H11M13 3H16M3 12.5H6M8 12.5H11M13 12.5H16"/></svg>
<div class="t" style="left:31px;top:691px;font-size:8px;color:#6a6a70">123</div>
<div class="t" style="left:6.5px;top:720px;font-size:12.5px;color:#c0c0c6">1</div>
<svg style="left:28px;top:717px" width="18" height="18" viewBox="0 0 18 18"><path d="M5.2 14.5 V3.6 L14.6 1.2 V12.8" fill="none" stroke="#a4a4a8" stroke-width="1.5"/><path d="M5.2 3.6 L14.6 1.2 V3.8 L5.2 6.2Z" fill="#a4a4a8"/><ellipse cx="3.3" cy="14.6" rx="2.9" ry="2.3" fill="#a4a4a8"/><ellipse cx="12.7" cy="12.8" rx="2.9" ry="2.3" fill="#a4a4a8"/></svg>
<svg style="left:67px;top:717px" width="20" height="18" viewBox="0 0 20 18" fill="none" stroke="#a4a4a8" stroke-width="1.3"><path d="M1 6H5.5L10.5 1.5V16.5L5.5 12H1Z" stroke-linejoin="round"/><path d="M12.5 7.3 Q13.3 9 12.5 10.7M15 5.5 Q16.8 9 15 12.5"/></svg>
<svg style="left:108px;top:716px" width="16" height="19" viewBox="0 0 16 19" fill="none" stroke="#a4a4a8" stroke-width="1.3"><rect x="1" y="6.5" width="13.4" height="11" rx="0.8"/><path d="M4.4 6.5 V1.3 H11 V5"/><circle cx="7.7" cy="12" r="1.2" fill="#a4a4a8" stroke="none"/><path d="M7.7 9.6V10.6" stroke-width="0.8"/></svg>
<div class="t" style="left:6.5px;top:768px;font-size:12.5px;color:#c0c0c6">2</div>
<svg style="left:27px;top:769px" width="20" height="12" viewBox="0 0 20 12"><rect x="0" y="0.3" width="14" height="9.6" rx="0.8" fill="#a0a0a4"/><path d="M14.5 4.3 L18.5 1 V9.5 L14.5 6.2Z" fill="#a0a0a4"/></svg>
<svg style="left:66px;top:767px" width="20" height="14" viewBox="0 0 20 14" fill="none" stroke="#a4a4a8" stroke-width="1.3"><path d="M1 7 Q10 -2.5 19 7 Q10 16.5 1 7Z"/><ellipse cx="10" cy="7" rx="3" ry="3.3"/></svg>
<svg style="left:108px;top:764px" width="16" height="19" viewBox="0 0 16 19" fill="none" stroke="#a4a4a8" stroke-width="1.3"><rect x="1" y="6.5" width="13.4" height="11" rx="0.8"/><path d="M4.4 6.5 V1.3 H11 V5"/><circle cx="7.7" cy="12" r="1.2" fill="#a4a4a8" stroke="none"/><path d="M7.7 9.6V10.6" stroke-width="0.8"/></svg>
<div class="t" style="left:6.5px;top:816px;font-size:12.5px;color:#c0c0c6">2</div>
<svg style="left:28px;top:813px" width="18" height="18" viewBox="0 0 18 18"><path d="M5.2 14.5 V3.6 L14.6 1.2 V12.8" fill="none" stroke="#a4a4a8" stroke-width="1.5"/><path d="M5.2 3.6 L14.6 1.2 V3.8 L5.2 6.2Z" fill="#a4a4a8"/><ellipse cx="3.3" cy="14.6" rx="2.9" ry="2.3" fill="#a4a4a8"/><ellipse cx="12.7" cy="12.8" rx="2.9" ry="2.3" fill="#a4a4a8"/></svg>
<svg style="left:67px;top:813px" width="20" height="18" viewBox="0 0 20 18" fill="none" stroke="#a4a4a8" stroke-width="1.3"><path d="M1 6H5.5L10.5 1.5V16.5L5.5 12H1Z" stroke-linejoin="round"/><path d="M12.5 7.3 Q13.3 9 12.5 10.7M15 5.5 Q16.8 9 15 12.5"/></svg>
<svg style="left:108px;top:812px" width="16" height="19" viewBox="0 0 16 19" fill="none" stroke="#a4a4a8" stroke-width="1.3"><rect x="1" y="6.5" width="13.4" height="11" rx="0.8"/><path d="M4.4 6.5 V1.3 H11 V5"/><circle cx="7.7" cy="12" r="1.2" fill="#a4a4a8" stroke="none"/><path d="M7.7 9.6V10.6" stroke-width="0.8"/></svg>
<div class="t" style="left:6.5px;top:864px;font-size:12.5px;color:#c0c0c6">3</div>
<svg style="left:27px;top:865px" width="20" height="12" viewBox="0 0 20 12"><rect x="0" y="0.3" width="14" height="9.6" rx="0.8" fill="#a0a0a4"/><path d="M14.5 4.3 L18.5 1 V9.5 L14.5 6.2Z" fill="#a0a0a4"/></svg>
<svg style="left:66px;top:863px" width="20" height="14" viewBox="0 0 20 14" fill="none" stroke="#a4a4a8" stroke-width="1.3"><path d="M1 7 Q10 -2.5 19 7 Q10 16.5 1 7Z"/><ellipse cx="10" cy="7" rx="3" ry="3.3"/></svg>
<svg style="left:108px;top:860px" width="16" height="19" viewBox="0 0 16 19" fill="none" stroke="#a4a4a8" stroke-width="1.3"><rect x="1" y="6.5" width="13.4" height="11" rx="0.8"/><path d="M4.4 6.5 V1.3 H11 V5"/><circle cx="7.7" cy="12" r="1.2" fill="#a4a4a8" stroke="none"/><path d="M7.7 9.6V10.6" stroke-width="0.8"/></svg>
<div class="a" style="left:136px;top:680px;width:4px;height:360px;background:#070709;"></div>
<div class="a" style="left:140px;top:680px;width:1735px;height:26px;background:#23232b;"></div>
<div class="a" style="left:140px;top:706px;width:1735px;height:2px;background:#1e1e22;"></div>
<svg style="left:140px;top:665px" width="1740" height="15"><rect x="10.64" y="5" width="1" height="10" fill="#9aa0b4"/><rect x="20.78" y="5" width="1" height="10" fill="#9aa0b4"/><rect x="30.91" y="5" width="1" height="10" fill="#9aa0b4"/><rect x="41.05" y="5" width="1" height="10" fill="#9aa0b4"/><rect x="51.19" y="0" width="1" height="15" fill="#9aa0b4"/><rect x="61.33" y="5" width="1" height="10" fill="#9aa0b4"/><rect x="71.47" y="5" width="1" height="10" fill="#9aa0b4"/><rect x="81.60" y="5" width="1" height="10" fill="#9aa0b4"/><rect x="91.74" y="5" width="1" height="10" fill="#9aa0b4"/><rect x="101.88" y="0" width="1" height="15" fill="#9aa0b4"/><rect x="112.02" y="5" width="1" height="10" fill="#9aa0b4"/><rect x="122.16" y="5" width="1" height="10" fill="#9aa0b4"/><rect x="132.29" y="5" width="1" height="10" fill="#9aa0b4"/><rect x="142.43" y="5" width="1" height="10" fill="#9aa0b4"/><rect x="152.57" y="0" width="1" height="15" fill="#9aa0b4"/><rect x="162.71" y="5" width="1" height="10" fill="#9aa0b4"/><rect x="172.85" y="5" width="1" height="10" fill="#9aa0b4"/><rect x="182.98" y="5" width="1" height="10" fill="#9aa0b4"/><rect x="193.12" y="5" width="1" height="10" fill="#9aa0b4"/><rect x="203.26" y="0" width="1" height="15" fill="#9aa0b4"/><rect x="213.40" y="5" width="1" height="10" fill="#9aa0b4"/><rect x="223.54" y="5" width="1" height="10" fill="#9aa0b4"/><rect x="233.67" y="5" width="1" height="10" fill="#9aa0b4"/><rect x="243.81" y="5" width="1" height="10" fill="#9aa0b4"/><rect x="253.95" y="0" width="1" height="15" fill="#9aa0b4"/><rect x="264.09" y="5" width="1" height="10" fill="#9aa0b4"/><rect x="274.23" y="5" width="1" height="10" fill="#9aa0b4"/><rect x="284.36" y="5" width="1" height="10" fill="#9aa0b4"/><rect x="294.50" y="5" width="1" height="10" fill="#9aa0b4"/><rect x="304.64" y="0" width="1" height="15" fill="#9aa0b4"/><rect x="314.78" y="5" width="1" height="10" fill="#9aa0b4"/><rect x="324.92" y="5" width="1" height="10" fill="#9aa0b4"/><rect x="335.05" y="5" width="1" height="10" fill="#9aa0b4"/><rect x="345.19" y="5" width="1" height="10" fill="#9aa0b4"/><rect x="355.33" y="0" width="1" height="15" fill="#9aa0b4"/><rect x="365.47" y="5" width="1" height="10" fill="#9aa0b4"/><rect x="375.61" y="5" width="1" height="10" fill="#9aa0b4"/><rect x="385.74" y="5" width="1" height="10" fill="#9aa0b4"/><rect x="395.88" y="5" width="1" height="10" fill="#9aa0b4"/><rect x="406.02" y="0" width="1" height="15" fill="#9aa0b4"/><rect x="416.16" y="5" width="1" height="10" fill="#9aa0b4"/><rect x="426.30" y="5" width="1" height="10" fill="#9aa0b4"/><rect x="436.43" y="5" width="1" height="10" fill="#9aa0b4"/><rect x="446.57" y="5" width="1" height="10" fill="#9aa0b4"/><rect x="456.71" y="0" width="1" height="15" fill="#9aa0b4"/><rect x="466.85" y="5" width="1" height="10" fill="#9aa0b4"/><rect x="476.99" y="5" width="1" height="10" fill="#9aa0b4"/><rect x="487.12" y="5" width="1" height="10" fill="#9aa0b4"/><rect x="497.26" y="5" width="1" height="10" fill="#9aa0b4"/><rect x="507.40" y="0" width="1" height="15" fill="#9aa0b4"/><rect x="517.54" y="5" width="1" height="10" fill="#9aa0b4"/><rect x="527.68" y="5" width="1" height="10" fill="#9aa0b4"/><rect x="537.81" y="5" width="1" height="10" fill="#9aa0b4"/><rect x="547.95" y="5" width="1" height="10" fill="#9aa0b4"/><rect x="558.09" y="0" width="1" height="15" fill="#9aa0b4"/><rect x="568.23" y="5" width="1" height="10" fill="#9aa0b4"/><rect x="578.37" y="5" width="1" height="10" fill="#9aa0b4"/><rect x="588.50" y="5" width="1" height="10" fill="#9aa0b4"/><rect x="598.64" y="5" width="1" height="10" fill="#9aa0b4"/><rect x="608.78" y="0" width="1" height="15" fill="#9aa0b4"/><rect x="618.92" y="5" width="1" height="10" fill="#9aa0b4"/><rect x="629.06" y="5" width="1" height="10" fill="#9aa0b4"/><rect x="639.19" y="5" width="1" height="10" fill="#9aa0b4"/><rect x="649.33" y="5" width="1" height="10" fill="#9aa0b4"/><rect x="659.47" y="0" width="1" height="15" fill="#9aa0b4"/><rect x="669.61" y="5" width="1" height="10" fill="#9aa0b4"/><rect x="679.75" y="5" width="1" height="10" fill="#9aa0b4"/><rect x="689.88" y="5" width="1" height="10" fill="#9aa0b4"/><rect x="700.02" y="5" width="1" height="10" fill="#9aa0b4"/><rect x="710.16" y="0" width="1" height="15" fill="#9aa0b4"/><rect x="720.30" y="5" width="1" height="10" fill="#9aa0b4"/><rect x="730.44" y="5" width="1" height="10" fill="#9aa0b4"/><rect x="740.57" y="5" width="1" height="10" fill="#9aa0b4"/><rect x="750.71" y="5" width="1" height="10" fill="#9aa0b4"/><rect x="760.85" y="0" width="1" height="15" fill="#9aa0b4"/><rect x="770.99" y="5" width="1" height="10" fill="#9aa0b4"/><rect x="781.13" y="5" width="1" height="10" fill="#9aa0b4"/><rect x="791.26" y="5" width="1" height="10" fill="#9aa0b4"/><rect x="801.40" y="5" width="1" height="10" fill="#9aa0b4"/><rect x="811.54" y="0" width="1" height="15" fill="#9aa0b4"/><rect x="821.68" y="5" width="1" height="10" fill="#9aa0b4"/><rect x="831.82" y="5" width="1" height="10" fill="#9aa0b4"/><rect x="841.95" y="5" width="1" height="10" fill="#9aa0b4"/><rect x="852.09" y="5" width="1" height="10" fill="#9aa0b4"/><rect x="862.23" y="0" width="1" height="15" fill="#9aa0b4"/><rect x="872.37" y="5" width="1" height="10" fill="#9aa0b4"/><rect x="882.51" y="5" width="1" height="10" fill="#9aa0b4"/><rect x="892.64" y="5" width="1" height="10" fill="#9aa0b4"/><rect x="902.78" y="5" width="1" height="10" fill="#9aa0b4"/><rect x="912.92" y="0" width="1" height="15" fill="#9aa0b4"/><rect x="923.06" y="5" width="1" height="10" fill="#9aa0b4"/><rect x="933.20" y="5" width="1" height="10" fill="#9aa0b4"/><rect x="943.33" y="5" width="1" height="10" fill="#9aa0b4"/><rect x="953.47" y="5" width="1" height="10" fill="#9aa0b4"/><rect x="963.61" y="0" width="1" height="15" fill="#9aa0b4"/><rect x="973.75" y="5" width="1" height="10" fill="#9aa0b4"/><rect x="983.89" y="5" width="1" height="10" fill="#9aa0b4"/><rect x="994.02" y="5" width="1" height="10" fill="#9aa0b4"/><rect x="1004.16" y="5" width="1" height="10" fill="#9aa0b4"/><rect x="1014.30" y="0" width="1" height="15" fill="#9aa0b4"/><rect x="1024.44" y="5" width="1" height="10" fill="#9aa0b4"/><rect x="1034.58" y="5" width="1" height="10" fill="#9aa0b4"/><rect x="1044.71" y="5" width="1" height="10" fill="#9aa0b4"/><rect x="1054.85" y="5" width="1" height="10" fill="#9aa0b4"/><rect x="1064.99" y="0" width="1" height="15" fill="#9aa0b4"/><rect x="1075.13" y="5" width="1" height="10" fill="#9aa0b4"/><rect x="1085.27" y="5" width="1" height="10" fill="#9aa0b4"/><rect x="1095.40" y="5" width="1" height="10" fill="#9aa0b4"/><rect x="1105.54" y="5" width="1" height="10" fill="#9aa0b4"/><rect x="1115.68" y="0" width="1" height="15" fill="#9aa0b4"/><rect x="1125.82" y="5" width="1" height="10" fill="#9aa0b4"/><rect x="1135.96" y="5" width="1" height="10" fill="#9aa0b4"/><rect x="1146.09" y="5" width="1" height="10" fill="#9aa0b4"/><rect x="1156.23" y="5" width="1" height="10" fill="#9aa0b4"/><rect x="1166.37" y="0" width="1" height="15" fill="#9aa0b4"/><rect x="1176.51" y="5" width="1" height="10" fill="#9aa0b4"/><rect x="1186.65" y="5" width="1" height="10" fill="#9aa0b4"/><rect x="1196.78" y="5" width="1" height="10" fill="#9aa0b4"/><rect x="1206.92" y="5" width="1" height="10" fill="#9aa0b4"/><rect x="1217.06" y="0" width="1" height="15" fill="#9aa0b4"/><rect x="1227.20" y="5" width="1" height="10" fill="#9aa0b4"/><rect x="1237.34" y="5" width="1" height="10" fill="#9aa0b4"/><rect x="1247.47" y="5" width="1" height="10" fill="#9aa0b4"/><rect x="1257.61" y="5" width="1" height="10" fill="#9aa0b4"/><rect x="1267.75" y="0" width="1" height="15" fill="#9aa0b4"/><rect x="1277.89" y="5" width="1" height="10" fill="#9aa0b4"/><rect x="1288.03" y="5" width="1" height="10" fill="#9aa0b4"/><rect x="1298.16" y="5" width="1" height="10" fill="#9aa0b4"/><rect x="1308.30" y="5" width="1" height="10" fill="#9aa0b4"/><rect x="1318.44" y="0" width="1" height="15" fill="#9aa0b4"/><rect x="1328.58" y="5" width="1" height="10" fill="#9aa0b4"/><rect x="1338.72" y="5" width="1" height="10" fill="#9aa0b4"/><rect x="1348.85" y="5" width="1" height="10" fill="#9aa0b4"/><rect x="1358.99" y="5" width="1" height="10" fill="#9aa0b4"/><rect x="1369.13" y="0" width="1" height="15" fill="#9aa0b4"/><rect x="1379.27" y="5" width="1" height="10" fill="#9aa0b4"/><rect x="1389.41" y="5" width="1" height="10" fill="#9aa0b4"/><rect x="1399.54" y="5" width="1" height="10" fill="#9aa0b4"/><rect x="1409.68" y="5" width="1" height="10" fill="#9aa0b4"/><rect x="1419.82" y="0" width="1" height="15" fill="#9aa0b4"/><rect x="1429.96" y="5" width="1" height="10" fill="#9aa0b4"/><rect x="1440.10" y="5" width="1" height="10" fill="#9aa0b4"/><rect x="1450.23" y="5" width="1" height="10" fill="#9aa0b4"/><rect x="1460.37" y="5" width="1" height="10" fill="#9aa0b4"/><rect x="1470.51" y="0" width="1" height="15" fill="#9aa0b4"/><rect x="1480.65" y="5" width="1" height="10" fill="#9aa0b4"/><rect x="1490.79" y="5" width="1" height="10" fill="#9aa0b4"/><rect x="1500.92" y="5" width="1" height="10" fill="#9aa0b4"/><rect x="1511.06" y="5" width="1" height="10" fill="#9aa0b4"/><rect x="1521.20" y="0" width="1" height="15" fill="#9aa0b4"/><rect x="1531.34" y="5" width="1" height="10" fill="#9aa0b4"/><rect x="1541.48" y="5" width="1" height="10" fill="#9aa0b4"/><rect x="1551.61" y="5" width="1" height="10" fill="#9aa0b4"/><rect x="1561.75" y="5" width="1" height="10" fill="#9aa0b4"/><rect x="1571.89" y="0" width="1" height="15" fill="#9aa0b4"/><rect x="1582.03" y="5" width="1" height="10" fill="#9aa0b4"/><rect x="1592.17" y="5" width="1" height="10" fill="#9aa0b4"/><rect x="1602.30" y="5" width="1" height="10" fill="#9aa0b4"/><rect x="1612.44" y="5" width="1" height="10" fill="#9aa0b4"/><rect x="1622.58" y="0" width="1" height="15" fill="#9aa0b4"/><rect x="1632.72" y="5" width="1" height="10" fill="#9aa0b4"/><rect x="1642.86" y="5" width="1" height="10" fill="#9aa0b4"/><rect x="1652.99" y="5" width="1" height="10" fill="#9aa0b4"/><rect x="1663.13" y="5" width="1" height="10" fill="#9aa0b4"/><rect x="1673.27" y="0" width="1" height="15" fill="#9aa0b4"/><rect x="1683.41" y="5" width="1" height="10" fill="#9aa0b4"/><rect x="1693.55" y="5" width="1" height="10" fill="#9aa0b4"/><rect x="1703.68" y="5" width="1" height="10" fill="#9aa0b4"/><rect x="1713.82" y="5" width="1" height="10" fill="#9aa0b4"/><rect x="1723.96" y="0" width="1" height="15" fill="#9aa0b4"/><rect x="1734.10" y="5" width="1" height="10" fill="#9aa0b4"/></svg>
<div class="t" style="left:141px;top:646px;font-size:12px;color:#d0d6ea;font-weight:bold;letter-spacing:1px">0:00</div>
<div class="t" style="left:302.8px;width:80px;text-align:center;top:646px;font-size:12px;color:#d0d6ea;font-weight:bold;letter-spacing:1px">00:50:00</div>
<div class="t" style="left:505.5px;width:80px;text-align:center;top:646px;font-size:12px;color:#d0d6ea;font-weight:bold;letter-spacing:1px">01:40:00</div>
<div class="t" style="left:708.3px;width:80px;text-align:center;top:646px;font-size:12px;color:#d0d6ea;font-weight:bold;letter-spacing:1px">02:30:00</div>
<div class="t" style="left:911.0px;width:80px;text-align:center;top:646px;font-size:12px;color:#d0d6ea;font-weight:bold;letter-spacing:1px">03:20:00</div>
<div class="t" style="left:1113.8px;width:80px;text-align:center;top:646px;font-size:12px;color:#d0d6ea;font-weight:bold;letter-spacing:1px">04:10:00</div>
<div class="t" style="left:1316.6px;width:80px;text-align:center;top:646px;font-size:12px;color:#d0d6ea;font-weight:bold;letter-spacing:1px">05:00:00</div>
<div class="t" style="left:1519.3px;width:80px;text-align:center;top:646px;font-size:12px;color:#d0d6ea;font-weight:bold;letter-spacing:1px">05:50:00</div>
<div class="t" style="left:1722.1px;width:80px;text-align:center;top:646px;font-size:12px;color:#d0d6ea;font-weight:bold;letter-spacing:1px">06:40:00</div>
<div class="a" style="left:141px;top:681px;width:96px;height:21px;background:linear-gradient(180deg,#1a8cf4,#0a62d4);border:1px solid #64b4ff"></div>
<svg style="left:141px;top:701px" width="10" height="6" viewBox="0 0 10 6"><path d="M0 0 H10 L0 6Z" fill="#64b4ff"/></svg>
<div class="t" style="left:148px;top:684px;font-size:14px;color:#fff;">1. Chapter 1</div>
<div class="a" style="left:1882px;top:678px;width:9px;height:362px;background:#2e3038;border-radius:5px"></div>
<div class="a" style="left:1897px;top:574px;width:6px;height:474px;background:#070709;"></div>
<div class="a" style="left:0px;top:1046px;width:1897px;height:2px;background:#070709;"></div>
<div class="a" style="left:142px;top:711px;width:75px;height:29px;background:#5552a8;border-radius:4px;overflow:hidden">
<svg style="left:2px;top:16px" width="71" height="9" viewBox="0 0 71 9"><rect y="5" width="71" height="2.6" fill="#7878f6"/><g transform="translate(0,3)"><rect x="0" y="1.0" width="2" height="2.0" fill="#7878f6"/><rect x="2" y="2.0" width="2" height="1.0" fill="#7878f6"/><rect x="4" y="2.0" width="3" height="1.0" fill="#7878f6"/><rect x="7" y="2.0" width="3" height="1.0" fill="#7878f6"/><rect x="10" y="1.4" width="3" height="1.6" fill="#7878f6"/><rect x="13" y="2.0" width="1" height="1.0" fill="#7878f6"/><rect x="14" y="2.0" width="1" height="1.0" fill="#7878f6"/><rect x="15" y="2.0" width="1" height="1.0" fill="#7878f6"/><rect x="16" y="0.5" width="2" height="2.5" fill="#7878f6"/><rect x="18" y="2.0" width="3" height="1.0" fill="#7878f6"/><rect x="21" y="2.0" width="3" height="1.0" fill="#7878f6"/><rect x="24" y="2.0" width="3" height="1.0" fill="#7878f6"/><rect x="27" y="2.0" width="1" height="1.0" fill="#7878f6"/><rect x="28" y="2.0" width="1" height="1.0" fill="#7878f6"/><rect x="29" y="2.0" width="2" height="1.0" fill="#7878f6"/><rect x="31" y="1.1" width="3" height="1.9" fill="#7878f6"/><rect x="34" y="2.0" width="3" height="1.0" fill="#7878f6"/><rect x="37" y="2.0" width="2" height="1.0" fill="#7878f6"/><rect x="39" y="2.0" width="1" height="1.0" fill="#7878f6"/><rect x="40" y="2.0" width="2" height="1.0" fill="#7878f6"/><rect x="42" y="0.3" width="3" height="2.7" fill="#7878f6"/><rect x="45" y="1.7" width="1" height="1.3" fill="#7878f6"/><rect x="46" y="1.5" width="2" height="1.5" fill="#7878f6"/><rect x="48" y="2.0" width="3" height="1.0" fill="#7878f6"/><rect x="51" y="2.0" width="1" height="1.0" fill="#7878f6"/><rect x="52" y="2.0" width="1" height="1.0" fill="#7878f6"/><rect x="53" y="2.0" width="2" height="1.0" fill="#7878f6"/><rect x="55" y="1.1" width="1" height="1.9" fill="#7878f6"/><rect x="56" y="2.0" width="1" height="1.0" fill="#7878f6"/><rect x="57" y="2.0" width="1" height="1.0" fill="#7878f6"/><rect x="58" y="2.0" width="2" height="1.0" fill="#7878f6"/><rect x="60" y="2.0" width="3" height="1.0" fill="#7878f6"/><rect x="63" y="2.0" width="2" height="1.0" fill="#7878f6"/><rect x="65" y="2.0" width="2" height="1.0" fill="#7878f6"/><rect x="67" y="1.5" width="2" height="1.5" fill="#7878f6"/><rect x="69" y="2.0" width="1" height="1.0" fill="#7878f6"/><rect x="70" y="2.0" width="1" height="1.0" fill="#7878f6"/></g><rect y="1.3" width="71" height="1.6" fill="#aaa8d4"/><rect y="2.9" width="71" height="0.8" fill="#3a3880" opacity=".6"/></svg>
<svg style="left:6px;top:4px" width="14" height="14" viewBox="0 0 14 14" fill="none" stroke="#e8e8f4" stroke-width="1.2"><path d="M4.5 12 V2.5 L12.5 1 V10"/><path d="M4.5 5 L12.5 3.5"/><circle cx="2.6" cy="12" r="1.8"/><circle cx="10.6" cy="10.2" r="1.8"/></svg>
<div class="t" style="left:30px;top:5px;font-size:13px;color:#f0f0fa">Nearer</div>
</div>
<div class="a" style="left:219px;top:711px;width:16px;height:29px;background:#5552a8;border-radius:4px;overflow:hidden">
<svg style="left:2px;top:16px" width="12" height="9" viewBox="0 0 12 9"><rect y="5" width="12" height="2.6" fill="#7878f6"/><g transform="translate(0,3)"><rect x="0" y="2.0" width="2" height="1.0" fill="#7878f6"/><rect x="2" y="1.9" width="3" height="1.1" fill="#7878f6"/><rect x="5" y="2.0" width="1" height="1.0" fill="#7878f6"/><rect x="6" y="2.0" width="2" height="1.0" fill="#7878f6"/><rect x="8" y="1.8" width="2" height="1.2" fill="#7878f6"/><rect x="10" y="2.0" width="3" height="1.0" fill="#7878f6"/></g><rect y="1.3" width="12" height="1.6" fill="#aaa8d4"/><rect y="2.9" width="12" height="0.8" fill="#3a3880" opacity=".6"/></svg>
</div>
<div class="a" style="left:237px;top:711px;width:7px;height:29px;background:#5552a8;border-radius:4px;overflow:hidden">
<svg style="left:2px;top:16px" width="3" height="9" viewBox="0 0 3 9"><rect y="5" width="3" height="2.6" fill="#7878f6"/><g transform="translate(0,3)"><rect x="0" y="2.0" width="2" height="1.0" fill="#7878f6"/><rect x="2" y="1.9" width="1" height="1.1" fill="#7878f6"/></g><rect y="1.3" width="3" height="1.6" fill="#aaa8d4"/><rect y="2.9" width="3" height="0.8" fill="#3a3880" opacity=".6"/></svg>
</div>
<div class="a" style="left:246px;top:711px;width:21px;height:29px;background:#5552a8;border-radius:4px;overflow:hidden">
<svg style="left:2px;top:16px" width="17" height="9" viewBox="0 0 17 9"><rect y="5" width="17" height="2.6" fill="#7878f6"/><g transform="translate(0,3)"><rect x="0" y="2.0" width="1" height="1.0" fill="#7878f6"/><rect x="1" y="0.6" width="3" height="2.4" fill="#7878f6"/><rect x="4" y="1.6" width="2" height="1.4" fill="#7878f6"/><rect x="6" y="1.6" width="2" height="1.4" fill="#7878f6"/><rect x="8" y="2.0" width="2" height="1.0" fill="#7878f6"/><rect x="10" y="2.0" width="2" height="1.0" fill="#7878f6"/><rect x="12" y="2.0" width="1" height="1.0" fill="#7878f6"/><rect x="13" y="2.0" width="2" height="1.0" fill="#7878f6"/><rect x="15" y="2.0" width="2" height="1.0" fill="#7878f6"/></g><rect y="1.3" width="17" height="1.6" fill="#aaa8d4"/><rect y="2.9" width="17" height="0.8" fill="#3a3880" opacity=".6"/></svg>
</div>
<div class="a" style="left:269px;top:711px;width:660px;height:29px;background:#5552a8;border-radius:4px;overflow:hidden">
<svg style="left:2px;top:16px" width="656" height="9" viewBox="0 0 656 9"><rect y="5" width="656" height="2.6" fill="#7878f6"/><g transform="translate(0,3)"><rect x="0" y="2.0" width="1" height="1.0" fill="#7878f6"/><rect x="1" y="2.0" width="1" height="1.0" fill="#7878f6"/><rect x="2" y="2.0" width="1" height="1.0" fill="#7878f6"/><rect x="3" y="1.1" width="1" height="1.9" fill="#7878f6"/><rect x="4" y="2.0" width="2" height="1.0" fill="#7878f6"/><rect x="6" y="2.0" width="2" height="1.0" fill="#7878f6"/><rect x="8" y="2.0" width="2" height="1.0" fill="#7878f6"/><rect x="10" y="2.0" width="2" height="1.0" fill="#7878f6"/><rect x="12" y="1.0" width="1" height="2.0" fill="#7878f6"/><rect x="13" y="2.0" width="2" height="1.0" fill="#7878f6"/><rect x="15" y="2.0" width="3" height="1.0" fill="#7878f6"/><rect x="18" y="2.0" width="3" height="1.0" fill="#7878f6"/><rect x="21" y="2.0" width="2" height="1.0" fill="#7878f6"/><rect x="23" y="2.0" width="2" height="1.0" fill="#7878f6"/><rect x="25" y="2.0" width="2" height="1.0" fill="#7878f6"/><rect x="27" y="0.7" width="2" height="2.3" fill="#7878f6"/><rect x="29" y="2.0" width="2" height="1.0" fill="#7878f6"/><rect x="31" y="2.0" width="1" height="1.0" fill="#7878f6"/><rect x="32" y="2.0" width="1" height="1.0" fill="#7878f6"/><rect x="33" y="2.0" width="3" height="1.0" fill="#7878f6"/><rect x="36" y="2.0" width="1" height="1.0" fill="#7878f6"/><rect x="37" y="2.0" width="2" height="1.0" fill="#7878f6"/><rect x="39" y="0.9" width="1" height="2.1" fill="#7878f6"/><rect x="40" y="2.0" width="2" height="1.0" fill="#7878f6"/><rect x="42" y="1.7" width="2" height="1.3" fill="#7878f6"/><rect x="44" y="2.0" width="3" height="1.0" fill="#7878f6"/><rect x="47" y="2.0" width="3" height="1.0" fill="#7878f6"/><rect x="50" y="0.6" width="3" height="2.4" fill="#7878f6"/><rect x="53" y="2.0" width="2" height="1.0" fill="#7878f6"/><rect x="55" y="2.0" width="2" height="1.0" fill="#7878f6"/><rect x="57" y="2.0" width="2" height="1.0" fill="#7878f6"/><rect x="59" y="2.0" width="2" height="1.0" fill="#7878f6"/><rect x="61" y="1.4" width="2" height="1.6" fill="#7878f6"/><rect x="63" y="2.0" width="2" height="1.0" fill="#7878f6"/><rect x="65" y="1.9" width="1" height="1.1" fill="#7878f6"/><rect x="66" y="2.0" width="2" height="1.0" fill="#7878f6"/><rect x="68" y="0.7" width="2" height="2.3" fill="#7878f6"/><rect x="70" y="2.0" width="1" height="1.0" fill="#7878f6"/><rect x="71" y="2.0" width="1" height="1.0" fill="#7878f6"/><rect x="72" y="0.6" width="1" height="2.4" fill="#7878f6"/><rect x="73" y="1.2" width="1" height="1.8" fill="#7878f6"/><rect x="74" y="2.0" width="3" height="1.0" fill="#7878f6"/><rect x="77" y="2.0" width="2" height="1.0" fill="#7878f6"/><rect x="79" y="2.0" width="1" height="1.0" fill="#7878f6"/><rect x="80" y="2.0" width="1" height="1.0" fill="#7878f6"/><rect x="81" y="2.0" width="2" height="1.0" fill="#7878f6"/><rect x="83" y="2.0" width="3" height="1.0" fill="#7878f6"/><rect x="86" y="1.9" width="2" height="1.1" fill="#7878f6"/><rect x="88" y="2.0" width="3" height="1.0" fill="#7878f6"/><rect x="91" y="1.6" width="2" height="1.4" fill="#7878f6"/><rect x="93" y="2.0" width="2" height="1.0" fill="#7878f6"/><rect x="95" y="2.0" width="1" height="1.0" fill="#7878f6"/><rect x="96" y="2.0" width="2" height="1.0" fill="#7878f6"/><rect x="98" y="2.0" width="2" height="1.0" fill="#7878f6"/><rect x="100" y="1.3" width="1" height="1.7" fill="#7878f6"/><rect x="101" y="2.0" width="2" height="1.0" fill="#7878f6"/><rect x="103" y="2.0" width="2" height="1.0" fill="#7878f6"/><rect x="105" y="2.0" width="3" height="1.0" fill="#7878f6"/><rect x="108" y="2.0" width="2" height="1.0" fill="#7878f6"/><rect x="110" y="2.0" width="3" height="1.0" fill="#7878f6"/><rect x="113" y="1.8" width="1" height="1.2" fill="#7878f6"/><rect x="114" y="2.0" width="2" height="1.0" fill="#7878f6"/><rect x="116" y="2.0" width="1" height="1.0" fill="#7878f6"/><rect x="117" y="2.0" width="1" height="1.0" fill="#7878f6"/><rect x="118" y="1.1" width="1" height="1.9" fill="#7878f6"/><rect x="119" y="1.7" width="3" height="1.3" fill="#7878f6"/><rect x="122" y="0.4" width="1" height="2.6" fill="#7878f6"/><rect x="123" y="2.0" width="3" height="1.0" fill="#7878f6"/><rect x="126" y="2.0" width="1" height="1.0" fill="#7878f6"/><rect x="127" y="2.0" width="2" height="1.0" fill="#7878f6"/><rect x="129" y="2.0" width="3" height="1.0" fill="#7878f6"/><rect x="132" y="2.0" width="2" height="1.0" fill="#7878f6"/><rect x="134" y="2.0" width="1" height="1.0" fill="#7878f6"/><rect x="135" y="2.0" width="3" height="1.0" fill="#7878f6"/><rect x="138" y="1.7" width="1" height="1.3" fill="#7878f6"/><rect x="139" y="1.2" width="2" height="1.8" fill="#7878f6"/><rect x="141" y="2.0" width="1" height="1.0" fill="#7878f6"/><rect x="142" y="2.0" width="3" height="1.0" fill="#7878f6"/><rect x="145" y="2.0" width="2" height="1.0" fill="#7878f6"/><rect x="147" y="0.4" width="1" height="2.6" fill="#7878f6"/><rect x="148" y="2.0" width="3" height="1.0" fill="#7878f6"/><rect x="151" y="1.7" width="3" height="1.3" fill="#7878f6"/><rect x="154" y="2.0" width="3" height="1.0" fill="#7878f6"/><rect x="157" y="2.0" width="2" height="1.0" fill="#7878f6"/><rect x="159" y="0.4" width="3" height="2.6" fill="#7878f6"/><rect x="162" y="2.0" width="2" height="1.0" fill="#7878f6"/><rect x="164" y="2.0" width="2" height="1.0" fill="#7878f6"/><rect x="166" y="2.0" width="2" height="1.0" fill="#7878f6"/><rect x="168" y="2.0" width="1" height="1.0" fill="#7878f6"/><rect x="169" y="1.4" width="3" height="1.6" fill="#7878f6"/><rect x="172" y="2.0" width="1" height="1.0" fill="#7878f6"/><rect x="173" y="2.0" width="2" height="1.0" fill="#7878f6"/><rect x="175" y="1.4" width="1" height="1.6" fill="#7878f6"/><rect x="176" y="2.0" width="2" height="1.0" fill="#7878f6"/><rect x="178" y="2.0" width="1" height="1.0" fill="#7878f6"/><rect x="179" y="1.0" width="3" height="2.0" fill="#7878f6"/><rect x="182" y="2.0" width="1" height="1.0" fill="#7878f6"/><rect x="183" y="2.0" width="1" height="1.0" fill="#7878f6"/><rect x="184" y="2.0" width="1" height="1.0" fill="#7878f6"/><rect x="185" y="2.0" width="3" height="1.0" fill="#7878f6"/><rect x="188" y="2.0" width="1" height="1.0" fill="#7878f6"/><rect x="189" y="0.8" width="2" height="2.2" fill="#7878f6"/><rect x="191" y="2.0" width="2" height="1.0" fill="#7878f6"/><rect x="193" y="2.0" width="2" height="1.0" fill="#7878f6"/><rect x="195" y="0.7" width="2" height="2.3" fill="#7878f6"/><rect x="197" y="1.9" width="1" height="1.1" fill="#7878f6"/><rect x="198" y="2.0" width="1" height="1.0" fill="#7878f6"/><rect x="199" y="0.9" width="2" height="2.1" fill="#7878f6"/><rect x="201" y="2.0" width="1" height="1.0" fill="#7878f6"/><rect x="202" y="0.3" width="3" height="2.7" fill="#7878f6"/><rect x="205" y="1.9" width="3" height="1.1" fill="#7878f6"/><rect x="208" y="2.0" width="2" height="1.0" fill="#7878f6"/><rect x="210" y="0.9" width="2" height="2.1" fill="#7878f6"/><rect x="212" y="1.4" width="3" height="1.6" fill="#7878f6"/><rect x="215" y="2.0" width="2" height="1.0" fill="#7878f6"/><rect x="217" y="2.0" width="2" height="1.0" fill="#7878f6"/><rect x="219" y="1.5" width="3" height="1.5" fill="#7878f6"/><rect x="222" y="1.9" width="1" height="1.1" fill="#7878f6"/><rect x="223" y="2.0" width="2" height="1.0" fill="#7878f6"/><rect x="225" y="2.0" width="2" height="1.0" fill="#7878f6"/><rect x="227" y="2.0" width="3" height="1.0" fill="#7878f6"/><rect x="230" y="2.0" width="1" height="1.0" fill="#7878f6"/><rect x="231" y="2.0" width="1" height="1.0" fill="#7878f6"/><rect x="232" y="2.0" width="3" height="1.0" fill="#7878f6"/><rect x="235" y="1.8" width="1" height="1.2" fill="#7878f6"/><rect x="236" y="2.0" width="2" height="1.0" fill="#7878f6"/><rect x="238" y="2.0" width="2" height="1.0" fill="#7878f6"/><rect x="240" y="0.9" width="2" height="2.1" fill="#7878f6"/><rect x="242" y="2.0" width="1" height="1.0" fill="#7878f6"/><rect x="243" y="2.0" width="1" height="1.0" fill="#7878f6"/><rect x="244" y="2.0" width="3" height="1.0" fill="#7878f6"/><rect x="247" y="2.0" width="2" height="1.0" fill="#7878f6"/><rect x="249" y="2.0" width="3" height="1.0" fill="#7878f6"/><rect x="252" y="2.0" width="1" height="1.0" fill="#7878f6"/><rect x="253" y="0.3" width="3" height="2.7" fill="#7878f6"/><rect x="256" y="1.4" width="1" height="1.6" fill="#7878f6"/><rect x="257" y="0.4" width="2" height="2.6" fill="#7878f6"/><rect x="259" y="2.0" width="1" height="1.0" fill="#7878f6"/><rect x="260" y="1.8" width="2" height="1.2" fill="#7878f6"/><rect x="262" y="2.0" width="2" height="1.0" fill="#7878f6"/><rect x="264" y="1.6" width="2" height="1.4" fill="#7878f6"/><rect x="266" y="1.5" width="2" height="1.5" fill="#7878f6"/><rect x="268" y="1.3" width="2" height="1.7" fill="#7878f6"/><rect x="270" y="0.4" width="2" height="2.6" fill="#7878f6"/><rect x="272" y="2.0" width="2" height="1.0" fill="#7878f6"/><rect x="274" y="2.0" width="2" height="1.0" fill="#7878f6"/><rect x="276" y="2.0" width="1" height="1.0" fill="#7878f6"/><rect x="277" y="2.0" width="1" height="1.0" fill="#7878f6"/><rect x="278" y="2.0" width="1" height="1.0" fill="#7878f6"/><rect x="279" y="1.8" width="3" height="1.2" fill="#7878f6"/><rect x="282" y="2.0" width="2" height="1.0" fill="#7878f6"/><rect x="284" y="2.0" width="2" height="1.0" fill="#7878f6"/><rect x="286" y="1.1" width="2" height="1.9" fill="#7878f6"/><rect x="288" y="1.2" width="1" height="1.8" fill="#7878f6"/><rect x="289" y="0.7" width="2" height="2.3" fill="#7878f6"/><rect x="291" y="1.0" width="1" height="2.0" fill="#7878f6"/><rect x="292" y="0.6" width="1" height="2.4" fill="#7878f6"/><rect x="293" y="1.1" width="3" height="1.9" fill="#7878f6"/><rect x="296" y="1.5" width="3" height="1.5" fill="#7878f6"/><rect x="299" y="2.0" width="2" height="1.0" fill="#7878f6"/><rect x="301" y="2.0" width="3" height="1.0" fill="#7878f6"/><rect x="304" y="2.0" width="1" height="1.0" fill="#7878f6"/><rect x="305" y="1.1" width="2" height="1.9" fill="#7878f6"/><rect x="307" y="2.0" width="2" height="1.0" fill="#7878f6"/><rect x="309" y="2.0" width="3" height="1.0" fill="#7878f6"/><rect x="312" y="2.0" width="2" height="1.0" fill="#7878f6"/><rect x="314" y="1.9" width="2" height="1.1" fill="#7878f6"/><rect x="316" y="1.6" width="2" height="1.4" fill="#7878f6"/><rect x="318" y="0.9" width="2" height="2.1" fill="#7878f6"/><rect x="320" y="2.0" width="3" height="1.0" fill="#7878f6"/><rect x="323" y="1.8" width="2" height="1.2" fill="#7878f6"/><rect x="325" y="2.0" width="1" height="1.0" fill="#7878f6"/><rect x="326" y="2.0" width="1" height="1.0" fill="#7878f6"/><rect x="327" y="2.0" width="1" height="1.0" fill="#7878f6"/><rect x="328" y="1.6" width="2" height="1.4" fill="#7878f6"/><rect x="330" y="1.3" width="3" height="1.7" fill="#7878f6"/><rect x="333" y="2.0" width="2" height="1.0" fill="#7878f6"/><rect x="335" y="2.0" width="3" height="1.0" fill="#7878f6"/><rect x="338" y="0.6" width="1" height="2.4" fill="#7878f6"/><rect x="339" y="2.0" width="1" height="1.0" fill="#7878f6"/><rect x="340" y="0.9" width="2" height="2.1" fill="#7878f6"/><rect x="342" y="2.0" width="3" height="1.0" fill="#7878f6"/><rect x="345" y="2.0" width="3" height="1.0" fill="#7878f6"/><rect x="348" y="2.0" width="1" height="1.0" fill="#7878f6"/><rect x="349" y="2.0" width="2" height="1.0" fill="#7878f6"/><rect x="351" y="1.8" width="1" height="1.2" fill="#7878f6"/><rect x="352" y="2.0" width="3" height="1.0" fill="#7878f6"/><rect x="355" y="1.4" width="1" height="1.6" fill="#7878f6"/><rect x="356" y="0.4" width="1" height="2.6" fill="#7878f6"/><rect x="357" y="1.1" width="2" height="1.9" fill="#7878f6"/><rect x="359" y="2.0" width="2" height="1.0" fill="#7878f6"/><rect x="361" y="2.0" width="3" height="1.0" fill="#7878f6"/><rect x="364" y="2.0" width="3" height="1.0" fill="#7878f6"/><rect x="367" y="1.5" width="2" height="1.5" fill="#7878f6"/><rect x="369" y="1.0" width="1" height="2.0" fill="#7878f6"/><rect x="370" y="2.0" width="1" height="1.0" fill="#7878f6"/><rect x="371" y="2.0" width="1" height="1.0" fill="#7878f6"/><rect x="372" y="2.0" width="2" height="1.0" fill="#7878f6"/><rect x="374" y="2.0" width="2" height="1.0" fill="#7878f6"/><rect x="376" y="2.0" width="1" height="1.0" fill="#7878f6"/><rect x="377" y="0.4" width="2" height="2.6" fill="#7878f6"/><rect x="379" y="1.9" width="1" height="1.1" fill="#7878f6"/><rect x="380" y="1.6" width="1" height="1.4" fill="#7878f6"/><rect x="381" y="2.0" width="3" height="1.0" fill="#7878f6"/><rect x="384" y="0.8" width="1" height="2.2" fill="#7878f6"/><rect x="385" y="2.0" width="1" height="1.0" fill="#7878f6"/><rect x="386" y="1.8" width="2" height="1.2" fill="#7878f6"/><rect x="388" y="2.0" width="1" height="1.0" fill="#7878f6"/><rect x="389" y="2.0" width="3" height="1.0" fill="#7878f6"/><rect x="392" y="2.0" width="1" height="1.0" fill="#7878f6"/><rect x="393" y="1.8" width="1" height="1.2" fill="#7878f6"/><rect x="394" y="2.0" width="1" height="1.0" fill="#7878f6"/><rect x="395" y="0.3" width="1" height="2.7" fill="#7878f6"/><rect x="396" y="2.0" width="2" height="1.0" fill="#7878f6"/><rect x="398" y="2.0" width="2" height="1.0" fill="#7878f6"/><rect x="400" y="2.0" width="1" height="1.0" fill="#7878f6"/><rect x="401" y="1.4" width="2" height="1.6" fill="#7878f6"/><rect x="403" y="1.7" width="1" height="1.3" fill="#7878f6"/><rect x="404" y="2.0" width="2" height="1.0" fill="#7878f6"/><rect x="406" y="1.9" width="2" height="1.1" fill="#7878f6"/><rect x="408" y="2.0" width="3" height="1.0" fill="#7878f6"/><rect x="411" y="2.0" width="1" height="1.0" fill="#7878f6"/><rect x="412" y="2.0" width="2" height="1.0" fill="#7878f6"/><rect x="414" y="0.4" width="3" height="2.6" fill="#7878f6"/><rect x="417" y="1.9" width="2" height="1.1" fill="#7878f6"/><rect x="419" y="2.0" width="2" height="1.0" fill="#7878f6"/><rect x="421" y="2.0" width="1" height="1.0" fill="#7878f6"/><rect x="422" y="2.0" width="3" height="1.0" fill="#7878f6"/><rect x="425" y="2.0" width="1" height="1.0" fill="#7878f6"/><rect x="426" y="0.3" width="1" height="2.7" fill="#7878f6"/><rect x="427" y="2.0" width="1" height="1.0" fill="#7878f6"/><rect x="428" y="2.0" width="2" height="1.0" fill="#7878f6"/><rect x="430" y="1.2" width="1" height="1.8" fill="#7878f6"/><rect x="431" y="1.8" width="2" height="1.2" fill="#7878f6"/><rect x="433" y="2.0" width="2" height="1.0" fill="#7878f6"/><rect x="435" y="2.0" width="2" height="1.0" fill="#7878f6"/><rect x="437" y="1.6" width="1" height="1.4" fill="#7878f6"/><rect x="438" y="2.0" width="1" height="1.0" fill="#7878f6"/><rect x="439" y="0.4" width="1" height="2.6" fill="#7878f6"/><rect x="440" y="0.4" width="2" height="2.6" fill="#7878f6"/><rect x="442" y="2.0" width="1" height="1.0" fill="#7878f6"/><rect x="443" y="1.7" width="2" height="1.3" fill="#7878f6"/><rect x="445" y="0.6" width="1" height="2.4" fill="#7878f6"/><rect x="446" y="2.0" width="1" height="1.0" fill="#7878f6"/><rect x="447" y="2.0" width="1" height="1.0" fill="#7878f6"/><rect x="448" y="2.0" width="2" height="1.0" fill="#7878f6"/><rect x="450" y="2.0" width="2" height="1.0" fill="#7878f6"/><rect x="452" y="1.2" width="2" height="1.8" fill="#7878f6"/><rect x="454" y="2.0" width="3" height="1.0" fill="#7878f6"/><rect x="457" y="1.4" width="1" height="1.6" fill="#7878f6"/><rect x="458" y="2.0" width="2" height="1.0" fill="#7878f6"/><rect x="460" y="1.0" width="3" height="2.0" fill="#7878f6"/><rect x="463" y="2.0" width="2" height="1.0" fill="#7878f6"/><rect x="465" y="2.0" width="1" height="1.0" fill="#7878f6"/><rect x="466" y="2.0" width="2" height="1.0" fill="#7878f6"/><rect x="468" y="2.0" width="2" height="1.0" fill="#7878f6"/><rect x="470" y="2.0" width="1" height="1.0" fill="#7878f6"/><rect x="471" y="2.0" width="2" height="1.0" fill="#7878f6"/><rect x="473" y="0.5" width="1" height="2.5" fill="#7878f6"/><rect x="474" y="2.0" width="1" height="1.0" fill="#7878f6"/><rect x="475" y="1.9" width="1" height="1.1" fill="#7878f6"/><rect x="476" y="2.0" width="3" height="1.0" fill="#7878f6"/><rect x="479" y="2.0" width="2" height="1.0" fill="#7878f6"/><rect x="481" y="1.6" width="1" height="1.4" fill="#7878f6"/><rect x="482" y="2.0" width="1" height="1.0" fill="#7878f6"/><rect x="483" y="2.0" width="3" height="1.0" fill="#7878f6"/><rect x="486" y="1.5" width="2" height="1.5" fill="#7878f6"/><rect x="488" y="2.0" width="2" height="1.0" fill="#7878f6"/><rect x="490" y="2.0" width="2" height="1.0" fill="#7878f6"/><rect x="492" y="1.3" width="1" height="1.7" fill="#7878f6"/><rect x="493" y="0.9" width="1" height="2.1" fill="#7878f6"/><rect x="494" y="2.0" width="1" height="1.0" fill="#7878f6"/><rect x="495" y="2.0" width="1" height="1.0" fill="#7878f6"/><rect x="496" y="2.0" width="3" height="1.0" fill="#7878f6"/><rect x="499" y="1.7" width="1" height="1.3" fill="#7878f6"/><rect x="500" y="2.0" width="2" height="1.0" fill="#7878f6"/><rect x="502" y="2.0" width="1" height="1.0" fill="#7878f6"/><rect x="503" y="2.0" width="1" height="1.0" fill="#7878f6"/><rect x="504" y="1.6" width="1" height="1.4" fill="#7878f6"/><rect x="505" y="1.4" width="3" height="1.6" fill="#7878f6"/><rect x="508" y="1.5" width="3" height="1.5" fill="#7878f6"/><rect x="511" y="2.0" width="1" height="1.0" fill="#7878f6"/><rect x="512" y="2.0" width="1" height="1.0" fill="#7878f6"/><rect x="513" y="0.6" width="1" height="2.4" fill="#7878f6"/><rect x="514" y="2.0" width="1" height="1.0" fill="#7878f6"/><rect x="515" y="2.0" width="2" height="1.0" fill="#7878f6"/><rect x="517" y="2.0" width="1" height="1.0" fill="#7878f6"/><rect x="518" y="1.7" width="2" height="1.3" fill="#7878f6"/><rect x="520" y="2.0" width="2" height="1.0" fill="#7878f6"/><rect x="522" y="2.0" width="1" height="1.0" fill="#7878f6"/><rect x="523" y="2.0" width="3" height="1.0" fill="#7878f6"/><rect x="526" y="0.9" width="1" height="2.1" fill="#7878f6"/><rect x="527" y="2.0" width="3" height="1.0" fill="#7878f6"/><rect x="530" y="2.0" width="3" height="1.0" fill="#7878f6"/><rect x="533" y="2.0" width="1" height="1.0" fill="#7878f6"/><rect x="534" y="2.0" width="1" height="1.0" fill="#7878f6"/><rect x="535" y="1.9" width="1" height="1.1" fill="#7878f6"/><rect x="536" y="2.0" width="1" height="1.0" fill="#7878f6"/><rect x="537" y="2.0" width="1" height="1.0" fill="#7878f6"/><rect x="538" y="1.9" width="3" height="1.1" fill="#7878f6"/><rect x="541" y="2.0" width="3" height="1.0" fill="#7878f6"/><rect x="544" y="2.0" width="3" height="1.0" fill="#7878f6"/><rect x="547" y="2.0" width="2" height="1.0" fill="#7878f6"/><rect x="549" y="2.0" width="1" height="1.0" fill="#7878f6"/><rect x="550" y="2.0" width="2" height="1.0" fill="#7878f6"/><rect x="552" y="2.0" width="1" height="1.0" fill="#7878f6"/><rect x="553" y="2.0" width="3" height="1.0" fill="#7878f6"/><rect x="556" y="1.5" width="1" height="1.5" fill="#7878f6"/><rect x="557" y="2.0" width="2" height="1.0" fill="#7878f6"/><rect x="559" y="0.7" width="2" height="2.3" fill="#7878f6"/><rect x="561" y="2.0" width="3" height="1.0" fill="#7878f6"/><rect x="564" y="2.0" width="2" height="1.0" fill="#7878f6"/><rect x="566" y="2.0" width="2" height="1.0" fill="#7878f6"/><rect x="568" y="2.0" width="1" height="1.0" fill="#7878f6"/><rect x="569" y="2.0" width="3" height="1.0" fill="#7878f6"/><rect x="572" y="2.0" width="2" height="1.0" fill="#7878f6"/><rect x="574" y="2.0" width="2" height="1.0" fill="#7878f6"/><rect x="576" y="2.0" width="2" height="1.0" fill="#7878f6"/><rect x="578" y="2.0" width="2" height="1.0" fill="#7878f6"/><rect x="580" y="1.7" width="1" height="1.3" fill="#7878f6"/><rect x="581" y="2.0" width="3" height="1.0" fill="#7878f6"/><rect x="584" y="2.0" width="1" height="1.0" fill="#7878f6"/><rect x="585" y="2.0" width="2" height="1.0" fill="#7878f6"/><rect x="587" y="0.9" width="1" height="2.1" fill="#7878f6"/><rect x="588" y="0.6" width="2" height="2.4" fill="#7878f6"/><rect x="590" y="2.0" width="2" height="1.0" fill="#7878f6"/><rect x="592" y="1.9" width="2" height="1.1" fill="#7878f6"/><rect x="594" y="1.2" width="2" height="1.8" fill="#7878f6"/><rect x="596" y="2.0" width="2" height="1.0" fill="#7878f6"/><rect x="598" y="1.3" width="1" height="1.7" fill="#7878f6"/><rect x="599" y="1.5" width="1" height="1.5" fill="#7878f6"/><rect x="600" y="2.0" width="1" height="1.0" fill="#7878f6"/><rect x="601" y="2.0" width="3" height="1.0" fill="#7878f6"/><rect x="604" y="2.0" width="1" height="1.0" fill="#7878f6"/><rect x="605" y="2.0" width="2" height="1.0" fill="#7878f6"/><rect x="607" y="2.0" width="3" height="1.0" fill="#7878f6"/><rect x="610" y="1.4" width="1" height="1.6" fill="#7878f6"/><rect x="611" y="2.0" width="1" height="1.0" fill="#7878f6"/><rect x="612" y="2.0" width="1" height="1.0" fill="#7878f6"/><rect x="613" y="2.0" width="2" height="1.0" fill="#7878f6"/><rect x="615" y="1.1" width="1" height="1.9" fill="#7878f6"/><rect x="616" y="1.9" width="1" height="1.1" fill="#7878f6"/><rect x="617" y="2.0" width="3" height="1.0" fill="#7878f6"/><rect x="620" y="2.0" width="3" height="1.0" fill="#7878f6"/><rect x="623" y="1.2" width="1" height="1.8" fill="#7878f6"/><rect x="624" y="2.0" width="2" height="1.0" fill="#7878f6"/><rect x="626" y="2.0" width="3" height="1.0" fill="#7878f6"/><rect x="629" y="2.0" width="2" height="1.0" fill="#7878f6"/><rect x="631" y="2.0" width="1" height="1.0" fill="#7878f6"/><rect x="632" y="0.5" width="2" height="2.5" fill="#7878f6"/><rect x="634" y="0.8" width="3" height="2.2" fill="#7878f6"/><rect x="637" y="0.7" width="1" height="2.3" fill="#7878f6"/><rect x="638" y="1.6" width="2" height="1.4" fill="#7878f6"/><rect x="640" y="2.0" width="2" height="1.0" fill="#7878f6"/><rect x="642" y="1.8" width="2" height="1.2" fill="#7878f6"/><rect x="644" y="1.3" width="2" height="1.7" fill="#7878f6"/><rect x="646" y="2.0" width="2" height="1.0" fill="#7878f6"/><rect x="648" y="2.0" width="2" height="1.0" fill="#7878f6"/><rect x="650" y="2.0" width="1" height="1.0" fill="#7878f6"/><rect x="651" y="1.6" width="1" height="1.4" fill="#7878f6"/><rect x="652" y="2.0" width="1" height="1.0" fill="#7878f6"/><rect x="653" y="0.7" width="1" height="2.3" fill="#7878f6"/><rect x="654" y="1.7" width="1" height="1.3" fill="#7878f6"/><rect x="655" y="2.0" width="1" height="1.0" fill="#7878f6"/></g><rect y="1.3" width="656" height="1.6" fill="#aaa8d4"/><rect y="2.9" width="656" height="0.8" fill="#3a3880" opacity=".6"/></svg>
<svg style="left:6px;top:4px" width="14" height="14" viewBox="0 0 14 14" fill="none" stroke="#e8e8f4" stroke-width="1.2"><path d="M4.5 12 V2.5 L12.5 1 V10"/><path d="M4.5 5 L12.5 3.5"/><circle cx="2.6" cy="12" r="1.8"/><circle cx="10.6" cy="10.2" r="1.8"/></svg>
<div class="t" style="left:30px;top:5px;font-size:13px;color:#f0f0fa">Nearer My God To Thee</div>
</div>
<div class="a" style="left:931px;top:711px;width:10px;height:29px;background:#5552a8;border-radius:4px;overflow:hidden">
<svg style="left:2px;top:16px" width="6" height="9" viewBox="0 0 6 9"><rect y="5" width="6" height="2.6" fill="#7878f6"/><g transform="translate(0,3)"><rect x="0" y="2.0" width="2" height="1.0" fill="#7878f6"/><rect x="2" y="2.0" width="2" height="1.0" fill="#7878f6"/><rect x="4" y="2.0" width="2" height="1.0" fill="#7878f6"/></g><rect y="1.3" width="6" height="1.6" fill="#aaa8d4"/><rect y="2.9" width="6" height="0.8" fill="#3a3880" opacity=".6"/></svg>
</div>
<div class="a" style="left:140.5px;top:725.5px;width:7px;height:7px;border-radius:50%;background:#f0f0f0;box-shadow:0 0 1px #000"></div>
<div class="a" style="left:935px;top:725.5px;width:8px;height:8px;border-radius:50%;background:#f0f0f0"></div>
<div class="clipv" style="left:142px;top:747px;width:75px;height:54px;">
<div class="cliph" style="top:21px;left:1px;right:2px"></div>
<svg style="left:1px;top:23px" width="73" height="27" viewBox="0 0 73 27"><g filter="url(#sb)"><rect x="0" y="0" width="73" height="27" fill="#708050" opacity="1" /><ellipse cx="45.5" cy="17.8" rx="3.180696241045336" ry="2.6639378511535754" fill="#e070b0" opacity="1"/><ellipse cx="18.2" cy="1.2" rx="1.7264119293062887" ry="2.203603571673246" fill="#f8f0f0" opacity="1"/><ellipse cx="18.0" cy="13.1" rx="1.5262283791778044" ry="1.8250947006957723" fill="#c02050" opacity="1"/><ellipse cx="20.4" cy="22.0" rx="1.8192084247160765" ry="2.695720487146807" fill="#502080" opacity="1"/><ellipse cx="10.1" cy="14.8" rx="1.7644817084338493" ry="2.9585059345298044" fill="#f8f0f0" opacity="1"/><ellipse cx="0.4" cy="18.6" rx="3.2448155308736037" ry="1.9339577516203899" fill="#f8f0f0" opacity="1"/><ellipse cx="70.2" cy="12.9" rx="1.8633373370912074" ry="2.9528351615068535" fill="#c02050" opacity="1"/><ellipse cx="14.4" cy="23.2" rx="2.0975777957077355" ry="2.041784902083576" fill="#502080" opacity="1"/><ellipse cx="12.1" cy="3.5" rx="2.1637089744412763" ry="2.726100466435142" fill="#f0a0c8" opacity="1"/><ellipse cx="42.8" cy="14.3" rx="1.6320449011021543" ry="2.033027035949954" fill="#d050a0" opacity="1"/><ellipse cx="22.3" cy="16.7" rx="2.462436772473728" ry="2.557003701211364" fill="#f8f0f0" opacity="1"/><ellipse cx="4.2" cy="23.4" rx="3.3984409533410522" ry="2.036466097588251" fill="#e070b0" opacity="1"/><ellipse cx="29.5" cy="13.2" rx="2.2323689516837213" ry="2.367778243585312" fill="#502080" opacity="1"/><ellipse cx="0.7" cy="1.1" rx="2.74742606215447" ry="2.931591714134682" fill="#f8f0f0" opacity="1"/><ellipse cx="8.7" cy="5.9" rx="2.1887636261060237" ry="2.0321898075868683" fill="#f8d0e0" opacity="1"/><ellipse cx="38.3" cy="18.6" rx="2.67952674252388" ry="2.671480724184513" fill="#f0a0c8" opacity="1"/><ellipse cx="26.8" cy="7.1" rx="3.3916003700843675" ry="1.6367697962576528" fill="#502080" opacity="1"/><ellipse cx="24.9" cy="14.7" rx="2.179919053251689" ry="2.886296429141686" fill="#f8f0f0" opacity="1"/><ellipse cx="39.8" cy="7.5" rx="2.112342136762705" ry="2.69816042570244" fill="#d050a0" opacity="1"/><ellipse cx="45.8" cy="17.3" rx="3.4934536290734077" ry="1.7422941966369243" fill="#e8c020" opacity="1"/><ellipse cx="3.5" cy="23.7" rx="1.5636529659828036" ry="2.6108377418737136" fill="#502080" opacity="1"/><ellipse cx="25.1" cy="6.0" rx="1.7912580379204037" ry="2.968575931147516" fill="#502080" opacity="1"/><ellipse cx="46.6" cy="19.2" rx="3.1768585623362644" ry="1.69585774072968" fill="#d050a0" opacity="1"/><ellipse cx="53.4" cy="22.8" rx="1.7132612193945178" ry="2.1518327859006554" fill="#502080" opacity="1"/><ellipse cx="10.9" cy="20.3" rx="1.7824048169427351" ry="2.88300501554422" fill="#e8c020" opacity="1"/><ellipse cx="45.3" cy="4.1" rx="3.4202626867318004" ry="2.5332585691977854" fill="#f8d0e0" opacity="1"/><ellipse cx="23.2" cy="6.6" rx="2.307578830448694" ry="1.7197595437529722" fill="#f8d0e0" opacity="1"/><ellipse cx="27.5" cy="23.7" rx="2.753929941909678" ry="2.2489836759991824" fill="#f8f0f0" opacity="1"/><ellipse cx="24.7" cy="2.1" rx="2.530357745021864" ry="2.3221507951697724" fill="#e8c020" opacity="1"/><ellipse cx="36.7" cy="1.5" rx="2.889193498901789" ry="2.496027667458935" fill="#d050a0" opacity="1"/><ellipse cx="55.5" cy="8.7" rx="3.170464969958145" ry="1.8972876679496555" fill="#e8c020" opacity="1"/><ellipse cx="71.6" cy="17.2" rx="2.799384298602482" ry="2.370991239530839" fill="#d050a0" opacity="1"/><ellipse cx="0.8" cy="13.1" rx="2.1518098663038447" ry="1.9105276628912127" fill="#e8c020" opacity="1"/><ellipse cx="21.1" cy="12.0" rx="2.1957690160554" ry="2.466094609486854" fill="#d050a0" opacity="1"/><ellipse cx="53.9" cy="19.9" rx="3.3446664637756287" ry="1.7587095298235629" fill="#d050a0" opacity="1"/><ellipse cx="63.3" cy="10.8" rx="3.413032953952838" ry="2.2772091456710344" fill="#d050a0" opacity="1"/><ellipse cx="38.6" cy="4.0" rx="3.3747633822836693" ry="2.215858399303908" fill="#d050a0" opacity="1"/><ellipse cx="50.5" cy="17.3" rx="1.8436535092708535" ry="2.6705574423397866" fill="#502080" opacity="1"/><ellipse cx="42.4" cy="16.0" rx="2.1053321901520654" ry="2.3298117306981765" fill="#502080" opacity="1"/><ellipse cx="63.3" cy="6.5" rx="1.8911977136138538" ry="2.3796723273515896" fill="#e070b0" opacity="1"/><ellipse cx="45.6" cy="4.3" rx="2.7617303240070097" ry="1.5627925580717816" fill="#f8f0f0" opacity="1"/><ellipse cx="34.4" cy="5.4" rx="3.2836197187532017" ry="1.6662432512344885" fill="#e070b0" opacity="1"/><ellipse cx="70.7" cy="11.6" rx="2.330979547878059" ry="2.026649755019309" fill="#e070b0" opacity="1"/><ellipse cx="48.4" cy="1.7" rx="1.9756928193273429" ry="2.8547734846250443" fill="#c02050" opacity="1"/><ellipse cx="0.0" cy="9.7" rx="3.2117094458645923" ry="2.799601861630467" fill="#e8c020" opacity="1"/><ellipse cx="50.3" cy="13.1" rx="2.5998658629292857" ry="1.952073668258134" fill="#e070b0" opacity="1"/><ellipse cx="21.6" cy="12.3" rx="3.416601007455858" ry="2.7277829996775065" fill="#e8c020" opacity="1"/><ellipse cx="30.6" cy="19.5" rx="2.4349445423798635" ry="1.7351631737791484" fill="#d050a0" opacity="1"/><ellipse cx="27.9" cy="11.4" rx="3.435993837311611" ry="2.4129148396569997" fill="#c02050" opacity="1"/><ellipse cx="25.6" cy="21.4" rx="2.2637076393949735" ry="1.9890632580870242" fill="#e070b0" opacity="1"/><ellipse cx="66.9" cy="12.9" rx="2.758912591285999" ry="2.8369226705017807" fill="#d050a0" opacity="1"/><ellipse cx="27.4" cy="10.4" rx="2.4868204041048076" ry="2.219362165471032" fill="#c02050" opacity="1"/><ellipse cx="51.7" cy="9.2" rx="2.6916199564032333" ry="1.8897369810308464" fill="#f8f0f0" opacity="1"/><ellipse cx="71.6" cy="11.9" rx="1.5393426316850265" ry="2.91776409727644" fill="#502080" opacity="1"/><ellipse cx="22.4" cy="22.3" rx="2.4538713995184738" ry="1.6828290186083932" fill="#f8f0f0" opacity="1"/><ellipse cx="45.4" cy="10.6" rx="1.5799530115977867" ry="1.704660346658587" fill="#e8c020" opacity="1"/><ellipse cx="28.6" cy="11.5" rx="1.9869434674866964" ry="2.211417024380422" fill="#e8c020" opacity="1"/><ellipse cx="2.7" cy="11.8" rx="2.942912578416246" ry="1.9285929310305594" fill="#f8f0f0" opacity="1"/><ellipse cx="35.9" cy="23.8" rx="1.5323455298006337" ry="1.6890485208558637" fill="#f0a0c8" opacity="1"/><ellipse cx="20.6" cy="17.0" rx="2.9625519593040273" ry="1.5399237476028882" fill="#e8c020" opacity="1"/><ellipse cx="25.5" cy="16.4" rx="1.5728578269904276" ry="1.8786344217497284" fill="#f8f0f0" opacity="1"/><ellipse cx="33.3" cy="22.0" rx="1.5291210327993412" ry="2.6675739974625152" fill="#c02050" opacity="1"/><ellipse cx="31.2" cy="13.8" rx="3.2173857675748363" ry="2.7618005989358556" fill="#f8d0e0" opacity="1"/><ellipse cx="34.7" cy="16.4" rx="3.297794346458444" ry="2.197626994885767" fill="#c02050" opacity="1"/><ellipse cx="55.3" cy="7.3" rx="2.889242973610725" ry="2.14923015142358" fill="#e070b0" opacity="1"/><ellipse cx="20.9" cy="18.7" rx="1.7853683555938213" ry="2.2176189165029614" fill="#e8c020" opacity="1"/><ellipse cx="40.1" cy="11.9" rx="2.5758895300854405" ry="2.13834113164826" fill="#d050a0" opacity="1"/><ellipse cx="39.5" cy="1.2" rx="2.034409669333603" ry="1.6277942932220233" fill="#c02050" opacity="1"/><ellipse cx="4.6" cy="22.6" rx="2.9451971714099674" ry="2.9680289857317277" fill="#d050a0" opacity="1"/><ellipse cx="72.9" cy="16.8" rx="1.7467500543901717" ry="1.6835347364012014" fill="#e070b0" opacity="1"/><rect x="55" y="14" width="14" height="13" fill="#6a6458" opacity="1" /><rect x="24" y="18" width="8" height="9" fill="#5a7048" opacity="1" /></g></svg>
<svg style="left:5px;top:5px" width="17" height="11" viewBox="0 0 17 11" fill="none" stroke="#f2eee0" stroke-width="1.3"><rect x="0.7" y="0.7" width="10" height="9.6" rx="1"/><path d="M10.7 4 L16 1 V10 L10.7 7Z"/></svg>
<div class="t" style="left:29px;top:6px;font-size:12.5px;color:#f6f2e6;width:44px;overflow:hidden">20231125_134</div>
<div class="ib" style="left:0px;top:28px;width:21px"></div>
</div>
<div class="clipv" style="left:219px;top:747px;width:14px;height:54px;">
<div class="cliph" style="top:21px;left:1px;right:2px"></div>
<svg style="left:1px;top:23px" width="12" height="27" viewBox="0 0 12 27"><defs><clipPath id="sc219"><rect width="12" height="27"/></clipPath></defs><g clip-path="url(#sc219)"><g filter="url(#sb)"><rect width="12" height="27" fill="url(#pt_greenp)"/></g></g></svg>
<div class="ib" style="left:0px;top:28px;width:21px"></div>
</div>
<div class="clipv" style="left:232px;top:747px;width:12px;height:54px;">
<div class="cliph" style="top:21px;left:1px;right:2px"></div>
<svg style="left:1px;top:23px" width="10" height="27" viewBox="0 0 10 27"><defs><clipPath id="sc232"><rect width="10" height="27"/></clipPath></defs><g clip-path="url(#sc232)"><g filter="url(#sb)"><rect width="10" height="27" fill="url(#pt_greenp)"/></g></g></svg>
<div class="ib" style="left:0px;top:28px;width:21px"></div>
</div>
<div class="clipv" style="left:246px;top:747px;width:190px;height:54px;">
<div class="cliph" style="top:21px;left:1px;right:2px"></div>
<svg style="left:1px;top:23px" width="188" height="27" viewBox="0 0 188 27"><defs><clipPath id="sc246"><rect width="188" height="27"/></clipPath></defs><g clip-path="url(#sc246)"><g filter="url(#sb)"><rect width="80" height="27" fill="url(#pt_arch1)"/><rect x="80" width="108" height="27" fill="url(#pt_arch2)"/></g></g></svg>
<svg style="left:5px;top:5px" width="17" height="11" viewBox="0 0 17 11" fill="none" stroke="#f2eee0" stroke-width="1.3"><rect x="0.7" y="0.7" width="10" height="9.6" rx="1"/><path d="M10.7 4 L16 1 V10 L10.7 7Z"/></svg>
<div class="t" style="left:29px;top:6px;font-size:12.5px;color:#f6f2e6;width:159px;overflow:hidden">20231125_135336</div>
<div class="ib" style="left:5px;top:28px;width:21px"></div>
</div>
<div class="clipv" style="left:438px;top:747px;width:44px;height:54px;">
<div class="cliph" style="top:21px;left:1px;right:2px"></div>
<svg style="left:1px;top:23px" width="42" height="27" viewBox="0 0 42 27"><defs><clipPath id="sc438"><rect width="42" height="27"/></clipPath></defs><g clip-path="url(#sc438)"><g filter="url(#sb)"><rect width="42" height="27" fill="url(#pt_green)"/></g></g></svg>
<svg style="left:5px;top:5px" width="17" height="11" viewBox="0 0 17 11" fill="none" stroke="#f2eee0" stroke-width="1.3"><rect x="0.7" y="0.7" width="10" height="9.6" rx="1"/><path d="M10.7 4 L16 1 V10 L10.7 7Z"/></svg>
<div class="t" style="left:29px;top:6px;font-size:12.5px;color:#f6f2e6;width:13px;overflow:hidden">20231125</div>
<div class="ib" style="left:0px;top:28px;width:21px"></div>
</div>
<div class="clipv" style="left:484px;top:747px;width:14px;height:54px;">
<div class="cliph" style="top:21px;left:1px;right:2px"></div>
<svg style="left:1px;top:23px" width="12" height="27" viewBox="0 0 12 27"><defs><clipPath id="sc484"><rect width="12" height="27"/></clipPath></defs><g clip-path="url(#sc484)"><g filter="url(#sb)"><rect width="12" height="27" fill="url(#pt_green)"/></g></g></svg>
<div class="ib" style="left:0px;top:28px;width:21px"></div>
</div>
<div class="clipv" style="left:500px;top:747px;width:77px;height:54px;">
<div class="cliph" style="top:21px;left:1px;right:2px"></div>
<svg style="left:1px;top:23px" width="75" height="27" viewBox="0 0 75 27"><defs><clipPath id="sc500"><rect width="75" height="27"/></clipPath></defs><g clip-path="url(#sc500)"><g filter="url(#sb)"><rect width="75" height="27" fill="url(#pt_greenp)"/></g></g></svg>
<svg style="left:5px;top:5px" width="17" height="11" viewBox="0 0 17 11" fill="none" stroke="#f2eee0" stroke-width="1.3"><rect x="0.7" y="0.7" width="10" height="9.6" rx="1"/><path d="M10.7 4 L16 1 V10 L10.7 7Z"/></svg>
<div class="t" style="left:29px;top:6px;font-size:12.5px;color:#f6f2e6;width:46px;overflow:hidden">20231125_135</div>
<div class="ib" style="left:0px;top:28px;width:21px"></div>
</div>
<div class="clipv" style="left:579px;top:747px;width:11px;height:54px;">
<div class="cliph" style="top:21px;left:1px;right:2px"></div>
<svg style="left:1px;top:23px" width="9" height="27" viewBox="0 0 9 27"><defs><clipPath id="sc579"><rect width="9" height="27"/></clipPath></defs><g clip-path="url(#sc579)"><g filter="url(#sb)"><rect width="9" height="27" fill="url(#pt_green)"/></g></g></svg>
<div class="ib" style="left:0px;top:28px;width:21px"></div>
</div>
<div class="clipv" style="left:592px;top:747px;width:19px;height:54px;">
<div class="cliph" style="top:21px;left:1px;right:2px"></div>
<svg style="left:1px;top:23px" width="17" height="27" viewBox="0 0 17 27"><defs><clipPath id="sc592"><rect width="17" height="27"/></clipPath></defs><g clip-path="url(#sc592)"><g filter="url(#sb)"><rect width="17" height="27" fill="url(#pt_wood)"/></g></g></svg>
<div class="ib" style="left:0px;top:28px;width:21px"></div>
</div>
<div class="clipv" style="left:613px;top:747px;width:18px;height:54px;">
<div class="cliph" style="top:21px;left:1px;right:2px"></div>
<svg style="left:1px;top:23px" width="16" height="27" viewBox="0 0 16 27"><defs><clipPath id="sc613"><rect width="16" height="27"/></clipPath></defs><g clip-path="url(#sc613)"><g filter="url(#sb)"><rect width="16" height="27" fill="url(#pt_wood)"/></g></g></svg>
<div class="ib" style="left:0px;top:28px;width:21px"></div>
</div>
<div class="clipv" style="left:633px;top:747px;width:18px;height:54px;">
<div class="cliph" style="top:21px;left:1px;right:2px"></div>
<svg style="left:1px;top:23px" width="16" height="27" viewBox="0 0 16 27"><defs><clipPath id="sc633"><rect width="16" height="27"/></clipPath></defs><g clip-path="url(#sc633)"><g filter="url(#sb)"><rect width="16" height="27" fill="url(#pt_wood)"/></g></g></svg>
<div class="ib" style="left:0px;top:28px;width:21px"></div>
</div>
<div class="clipv" style="left:654px;top:747px;width:18px;height:54px;">
<div class="cliph" style="top:21px;left:1px;right:2px"></div>
<svg style="left:1px;top:23px" width="16" height="27" viewBox="0 0 16 27"><defs><clipPath id="sc654"><rect width="16" height="27"/></clipPath></defs><g clip-path="url(#sc654)"><g filter="url(#sb)"><rect width="16" height="27" fill="url(#pt_wood)"/></g></g></svg>
<div class="ib" style="left:0px;top:28px;width:21px"></div>
</div>
<div class="clipv" style="left:674px;top:747px;width:18px;height:54px;">
<div class="cliph" style="top:21px;left:1px;right:2px"></div>
<svg style="left:1px;top:23px" width="16" height="27" viewBox="0 0 16 27"><defs><clipPath id="sc674"><rect width="16" height="27"/></clipPath></defs><g clip-path="url(#sc674)"><g filter="url(#sb)"><rect width="16" height="27" fill="url(#pt_wood)"/></g></g></svg>
<div class="ib" style="left:0px;top:28px;width:21px"></div>
</div>
<div class="clipv" style="left:694px;top:747px;width:18px;height:54px;">
<div class="cliph" style="top:21px;left:1px;right:2px"></div>
<svg style="left:1px;top:23px" width="16" height="27" viewBox="0 0 16 27"><defs><clipPath id="sc694"><rect width="16" height="27"/></clipPath></defs><g clip-path="url(#sc694)"><g filter="url(#sb)"><rect width="16" height="27" fill="url(#pt_green)"/></g></g></svg>
<div class="ib" style="left:0px;top:28px;width:21px"></div>
</div>
<div class="clipv" style="left:714px;top:747px;width:18px;height:54px;">
<div class="cliph" style="top:21px;left:1px;right:2px"></div>
<svg style="left:1px;top:23px" width="16" height="27" viewBox="0 0 16 27"><defs><clipPath id="sc714"><rect width="16" height="27"/></clipPath></defs><g clip-path="url(#sc714)"><g filter="url(#sb)"><rect width="16" height="27" fill="url(#pt_green)"/></g></g></svg>
<div class="ib" style="left:0px;top:28px;width:21px"></div>
</div>
<div class="clipv" style="left:735px;top:747px;width:154px;height:54px;">
<div class="cliph" style="top:21px;left:1px;right:2px"></div>
<svg style="left:1px;top:23px" width="152" height="27" viewBox="0 0 152 27"><defs><clipPath id="sc735"><rect width="152" height="27"/></clipPath></defs><g clip-path="url(#sc735)"><g filter="url(#sb)"><rect width="152" height="27" fill="url(#pt_table)"/></g></g></svg>
<svg style="left:5px;top:5px" width="17" height="11" viewBox="0 0 17 11" fill="none" stroke="#f2eee0" stroke-width="1.3"><rect x="0.7" y="0.7" width="10" height="9.6" rx="1"/><path d="M10.7 4 L16 1 V10 L10.7 7Z"/></svg>
<div class="t" style="left:29px;top:6px;font-size:12.5px;color:#f6f2e6;width:123px;overflow:hidden">20231125_135554</div>
<div class="ib" style="left:0px;top:28px;width:21px"></div>
</div>
<div class="clipv" style="left:892px;top:747px;width:37px;height:89px;">
<div class="cliph" style="top:21px;left:1px;right:2px"></div>
<svg style="left:1px;top:23px" width="35" height="27" viewBox="0 0 35 27"><defs><clipPath id="sc892"><rect width="35" height="27"/></clipPath></defs><g clip-path="url(#sc892)"><g filter="url(#sb)"><rect width="35" height="27" fill="url(#pt_blue)"/></g></g></svg>
<svg style="left:5px;top:5px" width="17" height="11" viewBox="0 0 17 11" fill="none" stroke="#f2eee0" stroke-width="1.3"><rect x="0.7" y="0.7" width="10" height="9.6" rx="1"/><path d="M10.7 4 L16 1 V10 L10.7 7Z"/></svg>
<div class="t" style="left:29px;top:6px;font-size:12.5px;color:#f6f2e6;width:6px;overflow:hidden">20231125</div>
<div class="ib" style="left:0px;top:28px;width:21px"></div>
<svg style="left:3px;top:66px" width="31" height="20" viewBox="0 0 31 20"><rect x="0" y="11.0" width="3" height="1.0" fill="#e8c070"/><rect x="3" y="11.0" width="2" height="1.0" fill="#e8c070"/><rect x="5" y="11.0" width="1" height="1.0" fill="#e8c070"/><rect x="6" y="10.3" width="2" height="1.7" fill="#e8c070"/><rect x="8" y="11.0" width="1" height="1.0" fill="#e8c070"/><rect x="9" y="11.0" width="3" height="1.0" fill="#e8c070"/><rect x="12" y="11.0" width="3" height="1.0" fill="#e8c070"/><rect x="15" y="11.0" width="1" height="1.0" fill="#e8c070"/><rect x="16" y="11.0" width="3" height="1.0" fill="#e8c070"/><rect x="19" y="10.3" width="1" height="1.7" fill="#e8c070"/><rect x="20" y="11.0" width="3" height="1.0" fill="#e8c070"/><rect x="23" y="11.0" width="2" height="1.0" fill="#e8c070"/><rect x="25" y="11.0" width="3" height="1.0" fill="#e8c070"/><rect x="28" y="11.0" width="2" height="1.0" fill="#e8c070"/><rect x="30" y="11.0" width="3" height="1.0" fill="#e8c070"/><rect x="0" y="0" width="23" height="12" fill="#946e0e"/><rect y="11.5" width="31" height="1.6" fill="#d8c898"/><rect y="13.1" width="31" height="1" fill="#4a3a18" opacity=".6"/><rect y="14.1" width="31" height="3.9" fill="#e8c070"/></svg>
</div>
<div class="clipv" style="left:931px;top:747px;width:37px;height:89px;">
<div class="cliph" style="top:21px;left:1px;right:2px"></div>
<svg style="left:1px;top:23px" width="35" height="27" viewBox="0 0 35 27"><defs><clipPath id="sc931"><rect width="35" height="27"/></clipPath></defs><g clip-path="url(#sc931)"><g filter="url(#sb)"><rect width="35" height="27" fill="url(#pt_roof)"/></g></g></svg>
<svg style="left:5px;top:5px" width="17" height="11" viewBox="0 0 17 11" fill="none" stroke="#f2eee0" stroke-width="1.3"><rect x="0.7" y="0.7" width="10" height="9.6" rx="1"/><path d="M10.7 4 L16 1 V10 L10.7 7Z"/></svg>
<div class="t" style="left:29px;top:6px;font-size:12.5px;color:#f6f2e6;width:6px;overflow:hidden">20231125</div>
<div class="ib" style="left:0px;top:28px;width:21px"></div>
<svg style="left:3px;top:66px" width="31" height="20" viewBox="0 0 31 20"><rect y="11.5" width="31" height="1.6" fill="#d8c898"/><rect y="13.1" width="31" height="1" fill="#4a3a18" opacity=".6"/><rect y="14.1" width="31" height="3.9" fill="#e8c070"/></svg>
</div>
<div class="clipv" style="left:970px;top:747px;width:24px;height:89px;">
<div class="cliph" style="top:21px;left:1px;right:2px"></div>
<svg style="left:1px;top:23px" width="22" height="27" viewBox="0 0 22 27"><defs><clipPath id="sc970"><rect width="22" height="27"/></clipPath></defs><g clip-path="url(#sc970)"><g filter="url(#sb)"><rect width="22" height="27" fill="url(#pt_roof)"/></g></g></svg>
<div class="ib" style="left:0px;top:28px;width:21px"></div>
<svg style="left:3px;top:66px" width="18" height="20" viewBox="0 0 18 20"><rect y="11.5" width="18" height="1.6" fill="#d8c898"/><rect y="13.1" width="18" height="1" fill="#4a3a18" opacity=".6"/><rect y="14.1" width="18" height="3.9" fill="#e8c070"/></svg>
</div>
<div class="clipv" style="left:996px;top:747px;width:13px;height:89px;">
<div class="cliph" style="top:21px;left:1px;right:2px"></div>
<svg style="left:1px;top:23px" width="11" height="27" viewBox="0 0 11 27"><defs><clipPath id="sc996"><rect width="11" height="27"/></clipPath></defs><g clip-path="url(#sc996)"><g filter="url(#sb)"><rect width="11" height="27" fill="url(#pt_wood)"/></g></g></svg>
<div class="ib" style="left:0px;top:28px;width:21px"></div>
<svg style="left:3px;top:66px" width="7" height="20" viewBox="0 0 7 20"><rect y="11.5" width="7" height="1.6" fill="#d8c898"/><rect y="13.1" width="7" height="1" fill="#4a3a18" opacity=".6"/><rect y="14.1" width="7" height="3.9" fill="#e8c070"/></svg>
</div>
<div class="clipv" style="left:1011px;top:747px;width:109px;height:89px;">
<div class="cliph" style="top:21px;left:1px;right:2px"></div>
<svg style="left:1px;top:23px" width="107" height="27" viewBox="0 0 107 27"><defs><clipPath id="sc1011"><rect width="107" height="27"/></clipPath></defs><g clip-path="url(#sc1011)"><g filter="url(#sb)"><rect width="107" height="27" fill="url(#pt_people)"/></g></g></svg>
<svg style="left:5px;top:5px" width="17" height="11" viewBox="0 0 17 11" fill="none" stroke="#f2eee0" stroke-width="1.3"><rect x="0.7" y="0.7" width="10" height="9.6" rx="1"/><path d="M10.7 4 L16 1 V10 L10.7 7Z"/></svg>
<div class="t" style="left:29px;top:6px;font-size:12.5px;color:#f6f2e6;width:78px;overflow:hidden">20231125_141</div>
<div class="ib" style="left:0px;top:28px;width:21px"></div>
<svg style="left:3px;top:66px" width="103" height="20" viewBox="0 0 103 20"><rect x="0" y="11.0" width="3" height="1.0" fill="#e8c070"/><rect x="3" y="9.5" width="3" height="2.5" fill="#e8c070"/><rect x="6" y="11.0" width="2" height="1.0" fill="#e8c070"/><rect x="8" y="11.0" width="1" height="1.0" fill="#e8c070"/><rect x="9" y="9.1" width="2" height="2.9" fill="#e8c070"/><rect x="11" y="8.9" width="2" height="3.1" fill="#e8c070"/><rect x="13" y="9.2" width="1" height="2.8" fill="#e8c070"/><rect x="14" y="11.0" width="2" height="1.0" fill="#e8c070"/><rect x="16" y="11.0" width="2" height="1.0" fill="#e8c070"/><rect x="18" y="11.0" width="1" height="1.0" fill="#e8c070"/><rect x="19" y="8.9" width="3" height="3.1" fill="#e8c070"/><rect x="22" y="11.0" width="2" height="1.0" fill="#e8c070"/><rect x="24" y="9.3" width="1" height="2.7" fill="#e8c070"/><rect x="25" y="11.0" width="1" height="1.0" fill="#e8c070"/><rect x="26" y="7.5" width="2" height="4.5" fill="#e8c070"/><rect x="28" y="8.3" width="2" height="3.7" fill="#e8c070"/><rect x="30" y="11.0" width="3" height="1.0" fill="#e8c070"/><rect x="33" y="7.9" width="2" height="4.1" fill="#e8c070"/><rect x="35" y="11.0" width="2" height="1.0" fill="#e8c070"/><rect x="37" y="11.0" width="1" height="1.0" fill="#e8c070"/><rect x="38" y="9.1" width="2" height="2.9" fill="#e8c070"/><rect x="40" y="11.0" width="3" height="1.0" fill="#e8c070"/><rect x="43" y="11.0" width="2" height="1.0" fill="#e8c070"/><rect x="45" y="11.0" width="3" height="1.0" fill="#e8c070"/><rect x="48" y="11.0" width="2" height="1.0" fill="#e8c070"/><rect x="50" y="11.0" width="2" height="1.0" fill="#e8c070"/><rect x="52" y="11.0" width="2" height="1.0" fill="#e8c070"/><rect x="54" y="11.0" width="3" height="1.0" fill="#e8c070"/><rect x="57" y="10.4" width="2" height="1.6" fill="#e8c070"/><rect x="59" y="7.5" width="3" height="4.5" fill="#e8c070"/><rect x="62" y="11.0" width="2" height="1.0" fill="#e8c070"/><rect x="64" y="8.6" width="3" height="3.4" fill="#e8c070"/><rect x="67" y="11.0" width="2" height="1.0" fill="#e8c070"/><rect x="69" y="7.0" width="3" height="5.0" fill="#e8c070"/><rect x="72" y="11.0" width="1" height="1.0" fill="#e8c070"/><rect x="73" y="11.0" width="2" height="1.0" fill="#e8c070"/><rect x="75" y="8.3" width="1" height="3.7" fill="#e8c070"/><rect x="76" y="11.0" width="1" height="1.0" fill="#e8c070"/><rect x="77" y="10.0" width="1" height="2.0" fill="#e8c070"/><rect x="78" y="6.3" width="2" height="5.7" fill="#e8c070"/><rect x="80" y="11.0" width="2" height="1.0" fill="#e8c070"/><rect x="82" y="7.9" width="3" height="4.1" fill="#e8c070"/><rect x="85" y="10.4" width="1" height="1.6" fill="#e8c070"/><rect x="86" y="11.0" width="2" height="1.0" fill="#e8c070"/><rect x="88" y="8.6" width="1" height="3.4" fill="#e8c070"/><rect x="89" y="10.4" width="3" height="1.6" fill="#e8c070"/><rect x="92" y="10.0" width="3" height="2.0" fill="#e8c070"/><rect x="95" y="11.0" width="1" height="1.0" fill="#e8c070"/><rect x="96" y="7.2" width="1" height="4.8" fill="#e8c070"/><rect x="97" y="9.8" width="2" height="2.2" fill="#e8c070"/><rect x="99" y="7.3" width="2" height="4.7" fill="#e8c070"/><rect x="101" y="11.0" width="2" height="1.0" fill="#e8c070"/><rect x="0" y="0" width="57" height="12" fill="#946e0e"/><rect y="11.5" width="103" height="1.6" fill="#d8c898"/><rect y="13.1" width="103" height="1" fill="#4a3a18" opacity=".6"/><rect y="14.1" width="103" height="3.9" fill="#e8c070"/></svg>
</div>
<div class="clipv" style="left:1123px;top:747px;width:25px;height:89px;">
<div class="cliph" style="top:21px;left:1px;right:2px"></div>
<svg style="left:1px;top:23px" width="23" height="27" viewBox="0 0 23 27"><defs><clipPath id="sc1123"><rect width="23" height="27"/></clipPath></defs><g clip-path="url(#sc1123)"><g filter="url(#sb)"><rect width="23" height="27" fill="url(#pt_people)"/></g></g></svg>
<svg style="left:5px;top:5px" width="17" height="11" viewBox="0 0 17 11" fill="none" stroke="#f2eee0" stroke-width="1.3"><rect x="0.7" y="0.7" width="10" height="9.6" rx="1"/><path d="M10.7 4 L16 1 V10 L10.7 7Z"/></svg>
<div class="t" style="left:29px;top:6px;font-size:12.5px;color:#f6f2e6;width:0px;overflow:hidden">2</div>
<div class="ib" style="left:0px;top:28px;width:21px"></div>
<svg style="left:3px;top:66px" width="19" height="20" viewBox="0 0 19 20"><rect x="0" y="11.0" width="1" height="1.0" fill="#e8c070"/><rect x="1" y="10.1" width="2" height="1.9" fill="#e8c070"/><rect x="3" y="10.2" width="1" height="1.8" fill="#e8c070"/><rect x="4" y="11.0" width="3" height="1.0" fill="#e8c070"/><rect x="7" y="11.0" width="2" height="1.0" fill="#e8c070"/><rect x="9" y="11.0" width="2" height="1.0" fill="#e8c070"/><rect x="11" y="11.0" width="3" height="1.0" fill="#e8c070"/><rect x="14" y="11.0" width="1" height="1.0" fill="#e8c070"/><rect x="15" y="6.9" width="2" height="5.1" fill="#e8c070"/><rect x="17" y="11.0" width="2" height="1.0" fill="#e8c070"/><rect y="11.5" width="19" height="1.6" fill="#d8c898"/><rect y="13.1" width="19" height="1" fill="#4a3a18" opacity=".6"/><rect y="14.1" width="19" height="3.9" fill="#e8c070"/></svg>
</div>
<div class="clipv" style="left:1151px;top:747px;width:30px;height:89px;">
<div class="cliph" style="top:21px;left:1px;right:2px"></div>
<svg style="left:1px;top:23px" width="28" height="27" viewBox="0 0 28 27"><defs><clipPath id="sc1151"><rect width="28" height="27"/></clipPath></defs><g clip-path="url(#sc1151)"><g filter="url(#sb)"><rect width="28" height="27" fill="url(#pt_people)"/></g></g></svg>
<svg style="left:5px;top:5px" width="17" height="11" viewBox="0 0 17 11" fill="none" stroke="#f2eee0" stroke-width="1.3"><rect x="0.7" y="0.7" width="10" height="9.6" rx="1"/><path d="M10.7 4 L16 1 V10 L10.7 7Z"/></svg>
<div class="t" style="left:29px;top:6px;font-size:12.5px;color:#f6f2e6;width:0px;overflow:hidden">2</div>
<div class="ib" style="left:0px;top:28px;width:21px"></div>
<svg style="left:3px;top:66px" width="24" height="20" viewBox="0 0 24 20"><rect x="0" y="11.0" width="3" height="1.0" fill="#e8c070"/><rect x="3" y="5.2" width="2" height="6.8" fill="#e8c070"/><rect x="5" y="7.8" width="1" height="4.2" fill="#e8c070"/><rect x="6" y="10.5" width="1" height="1.5" fill="#e8c070"/><rect x="7" y="11.0" width="3" height="1.0" fill="#e8c070"/><rect x="10" y="10.5" width="2" height="1.5" fill="#e8c070"/><rect x="12" y="9.7" width="1" height="2.3" fill="#e8c070"/><rect x="13" y="7.8" width="2" height="4.2" fill="#e8c070"/><rect x="15" y="7.3" width="1" height="4.7" fill="#e8c070"/><rect x="16" y="7.1" width="2" height="4.9" fill="#e8c070"/><rect x="18" y="11.0" width="2" height="1.0" fill="#e8c070"/><rect x="20" y="10.0" width="1" height="2.0" fill="#e8c070"/><rect x="21" y="9.1" width="2" height="2.9" fill="#e8c070"/><rect x="23" y="9.3" width="3" height="2.7" fill="#e8c070"/><rect y="11.5" width="24" height="1.6" fill="#d8c898"/><rect y="13.1" width="24" height="1" fill="#4a3a18" opacity=".6"/><rect y="14.1" width="24" height="3.9" fill="#e8c070"/></svg>
</div>
<div class="clipv" style="left:1184px;top:747px;width:22px;height:89px;">
<div class="cliph" style="top:21px;left:1px;right:2px"></div>
<svg style="left:1px;top:23px" width="20" height="27" viewBox="0 0 20 27"><defs><clipPath id="sc1184"><rect width="20" height="27"/></clipPath></defs><g clip-path="url(#sc1184)"><g filter="url(#sb)"><rect width="20" height="27" fill="url(#pt_wood)"/></g></g></svg>
<div class="ib" style="left:0px;top:28px;width:21px"></div>
<svg style="left:3px;top:66px" width="16" height="20" viewBox="0 0 16 20"><rect x="0" y="11.0" width="1" height="1.0" fill="#e8c070"/><rect x="1" y="11.0" width="2" height="1.0" fill="#e8c070"/><rect x="3" y="11.0" width="1" height="1.0" fill="#e8c070"/><rect x="4" y="11.0" width="3" height="1.0" fill="#e8c070"/><rect x="7" y="11.0" width="1" height="1.0" fill="#e8c070"/><rect x="8" y="10.0" width="2" height="2.0" fill="#e8c070"/><rect x="10" y="11.0" width="1" height="1.0" fill="#e8c070"/><rect x="11" y="7.9" width="2" height="4.1" fill="#e8c070"/><rect x="13" y="11.0" width="3" height="1.0" fill="#e8c070"/><rect y="11.5" width="16" height="1.6" fill="#d8c898"/><rect y="13.1" width="16" height="1" fill="#4a3a18" opacity=".6"/><rect y="14.1" width="16" height="3.9" fill="#e8c070"/></svg>
</div>
<div class="clipv" style="left:1209px;top:747px;width:39px;height:89px;">
<div class="cliph" style="top:21px;left:1px;right:2px"></div>
<svg style="left:1px;top:23px" width="37" height="27" viewBox="0 0 37 27"><defs><clipPath id="sc1209"><rect width="37" height="27"/></clipPath></defs><g clip-path="url(#sc1209)"><g filter="url(#sb)"><rect width="37" height="27" fill="url(#pt_people)"/></g></g></svg>
<svg style="left:5px;top:5px" width="17" height="11" viewBox="0 0 17 11" fill="none" stroke="#f2eee0" stroke-width="1.3"><rect x="0.7" y="0.7" width="10" height="9.6" rx="1"/><path d="M10.7 4 L16 1 V10 L10.7 7Z"/></svg>
<div class="t" style="left:29px;top:6px;font-size:12.5px;color:#f6f2e6;width:8px;overflow:hidden">20231125</div>
<div class="ib" style="left:0px;top:28px;width:21px"></div>
<svg style="left:3px;top:66px" width="33" height="20" viewBox="0 0 33 20"><rect x="0" y="9.8" width="2" height="2.2" fill="#e8c070"/><rect x="2" y="4.5" width="1" height="7.5" fill="#e8c070"/><rect x="3" y="10.8" width="1" height="1.2" fill="#e8c070"/><rect x="4" y="11.0" width="2" height="1.0" fill="#e8c070"/><rect x="6" y="10.9" width="1" height="1.1" fill="#e8c070"/><rect x="7" y="6.6" width="2" height="5.4" fill="#e8c070"/><rect x="9" y="9.8" width="1" height="2.2" fill="#e8c070"/><rect x="10" y="10.7" width="3" height="1.3" fill="#e8c070"/><rect x="13" y="11.0" width="1" height="1.0" fill="#e8c070"/><rect x="14" y="11.0" width="2" height="1.0" fill="#e8c070"/><rect x="16" y="11.0" width="1" height="1.0" fill="#e8c070"/><rect x="17" y="9.9" width="2" height="2.1" fill="#e8c070"/><rect x="19" y="11.0" width="2" height="1.0" fill="#e8c070"/><rect x="21" y="5.3" width="2" height="6.7" fill="#e8c070"/><rect x="23" y="9.2" width="3" height="2.8" fill="#e8c070"/><rect x="26" y="11.0" width="1" height="1.0" fill="#e8c070"/><rect x="27" y="10.3" width="3" height="1.7" fill="#e8c070"/><rect x="30" y="9.2" width="1" height="2.8" fill="#e8c070"/><rect x="31" y="11.0" width="2" height="1.0" fill="#e8c070"/><rect y="11.5" width="33" height="1.6" fill="#d8c898"/><rect y="13.1" width="33" height="1" fill="#4a3a18" opacity=".6"/><rect y="14.1" width="33" height="3.9" fill="#e8c070"/></svg>
</div>
<div class="clipv" style="left:1250px;top:747px;width:141px;height:89px;">
<div class="cliph" style="top:21px;left:1px;right:2px"></div>
<svg style="left:1px;top:23px" width="139" height="27" viewBox="0 0 139 27"><defs><clipPath id="sc1250"><rect width="139" height="27"/></clipPath></defs><g clip-path="url(#sc1250)"><g filter="url(#sb)"><rect width="139" height="27" fill="url(#pt_church)"/></g></g></svg>
<svg style="left:5px;top:5px" width="17" height="11" viewBox="0 0 17 11" fill="none" stroke="#f2eee0" stroke-width="1.3"><rect x="0.7" y="0.7" width="10" height="9.6" rx="1"/><path d="M10.7 4 L16 1 V10 L10.7 7Z"/></svg>
<div class="t" style="left:29px;top:6px;font-size:12.5px;color:#f6f2e6;width:110px;overflow:hidden">20231125_141354</div>
<div class="ib" style="left:0px;top:28px;width:21px"></div>
<div class="a" style="left:3px;top:44px;width:135px;height:3px;background:#f4f4f4;border-radius:1px"></div>
<svg style="left:3px;top:66px" width="135" height="20" viewBox="0 0 135 20"><rect x="0" y="11.0" width="1" height="1.0" fill="#e8c070"/><rect x="1" y="11.0" width="3" height="1.0" fill="#e8c070"/><rect x="4" y="11.0" width="1" height="1.0" fill="#e8c070"/><rect x="5" y="11.0" width="3" height="1.0" fill="#e8c070"/><rect x="8" y="11.0" width="1" height="1.0" fill="#e8c070"/><rect x="9" y="10.4" width="1" height="1.6" fill="#e8c070"/><rect x="10" y="8.9" width="2" height="3.1" fill="#e8c070"/><rect x="12" y="11.0" width="2" height="1.0" fill="#e8c070"/><rect x="14" y="5.3" width="2" height="6.7" fill="#e8c070"/><rect x="16" y="4.8" width="2" height="7.2" fill="#e8c070"/><rect x="18" y="11.0" width="1" height="1.0" fill="#e8c070"/><rect x="19" y="8.9" width="3" height="3.1" fill="#e8c070"/><rect x="22" y="11.0" width="2" height="1.0" fill="#e8c070"/><rect x="24" y="8.9" width="3" height="3.1" fill="#e8c070"/><rect x="27" y="6.1" width="1" height="5.9" fill="#e8c070"/><rect x="28" y="11.0" width="1" height="1.0" fill="#e8c070"/><rect x="29" y="7.1" width="3" height="4.9" fill="#e8c070"/><rect x="32" y="10.4" width="2" height="1.6" fill="#e8c070"/><rect x="34" y="11.0" width="3" height="1.0" fill="#e8c070"/><rect x="37" y="9.0" width="1" height="3.0" fill="#e8c070"/><rect x="38" y="9.6" width="2" height="2.4" fill="#e8c070"/><rect x="40" y="7.3" width="2" height="4.7" fill="#e8c070"/><rect x="42" y="10.7" width="1" height="1.3" fill="#e8c070"/><rect x="43" y="11.0" width="3" height="1.0" fill="#e8c070"/><rect x="46" y="8.7" width="2" height="3.3" fill="#e8c070"/><rect x="48" y="4.2" width="3" height="7.8" fill="#e8c070"/><rect x="51" y="9.2" width="2" height="2.8" fill="#e8c070"/><rect x="53" y="11.0" width="3" height="1.0" fill="#e8c070"/><rect x="56" y="9.9" width="2" height="2.1" fill="#e8c070"/><rect x="58" y="9.9" width="2" height="2.1" fill="#e8c070"/><rect x="60" y="11.0" width="1" height="1.0" fill="#e8c070"/><rect x="61" y="11.0" width="2" height="1.0" fill="#e8c070"/><rect x="63" y="9.1" width="2" height="2.9" fill="#e8c070"/><rect x="65" y="10.5" width="1" height="1.5" fill="#e8c070"/><rect x="66" y="11.0" width="2" height="1.0" fill="#e8c070"/><rect x="68" y="11.0" width="2" height="1.0" fill="#e8c070"/><rect x="70" y="9.3" width="1" height="2.7" fill="#e8c070"/><rect x="71" y="4.8" width="2" height="7.2" fill="#e8c070"/><rect x="73" y="11.0" width="3" height="1.0" fill="#e8c070"/><rect x="76" y="11.0" width="1" height="1.0" fill="#e8c070"/><rect x="77" y="11.0" width="1" height="1.0" fill="#e8c070"/><rect x="78" y="10.4" width="1" height="1.6" fill="#e8c070"/><rect x="79" y="11.0" width="3" height="1.0" fill="#e8c070"/><rect x="82" y="8.3" width="2" height="3.7" fill="#e8c070"/><rect x="84" y="6.4" width="2" height="5.6" fill="#e8c070"/><rect x="86" y="11.0" width="3" height="1.0" fill="#e8c070"/><rect x="89" y="10.5" width="3" height="1.5" fill="#e8c070"/><rect x="92" y="4.7" width="2" height="7.3" fill="#e8c070"/><rect x="94" y="11.0" width="2" height="1.0" fill="#e8c070"/><rect x="96" y="11.0" width="3" height="1.0" fill="#e8c070"/><rect x="99" y="9.9" width="2" height="2.1" fill="#e8c070"/><rect x="101" y="3.9" width="2" height="8.1" fill="#e8c070"/><rect x="103" y="4.2" width="1" height="7.8" fill="#e8c070"/><rect x="104" y="4.0" width="1" height="8.0" fill="#e8c070"/><rect x="105" y="10.8" width="2" height="1.2" fill="#e8c070"/><rect x="107" y="9.2" width="1" height="2.8" fill="#e8c070"/><rect x="108" y="9.2" width="3" height="2.8" fill="#e8c070"/><rect x="111" y="11.0" width="1" height="1.0" fill="#e8c070"/><rect x="112" y="7.0" width="2" height="5.0" fill="#e8c070"/><rect x="114" y="10.6" width="2" height="1.4" fill="#e8c070"/><rect x="116" y="5.5" width="1" height="6.5" fill="#e8c070"/><rect x="117" y="11.0" width="2" height="1.0" fill="#e8c070"/><rect x="119" y="11.0" width="2" height="1.0" fill="#e8c070"/><rect x="121" y="4.9" width="2" height="7.1" fill="#e8c070"/><rect x="123" y="7.2" width="1" height="4.8" fill="#e8c070"/><rect x="124" y="6.8" width="2" height="5.2" fill="#e8c070"/><rect x="126" y="5.6" width="1" height="6.4" fill="#e8c070"/><rect x="127" y="9.4" width="1" height="2.6" fill="#e8c070"/><rect x="128" y="10.4" width="2" height="1.6" fill="#e8c070"/><rect x="130" y="5.1" width="1" height="6.9" fill="#e8c070"/><rect x="131" y="11.0" width="1" height="1.0" fill="#e8c070"/><rect x="132" y="10.6" width="2" height="1.4" fill="#e8c070"/><rect x="134" y="10.6" width="1" height="1.4" fill="#e8c070"/><rect y="11.5" width="135" height="1.6" fill="#d8c898"/><rect y="13.1" width="135" height="1" fill="#4a3a18" opacity=".6"/><rect y="14.1" width="135" height="3.9" fill="#e8c070"/></svg>
</div>
<div class="clipv" style="left:1393px;top:747px;width:403px;height:89px;">
<div class="cliph" style="top:21px;left:1px;right:2px"></div>
<svg style="left:1px;top:23px" width="401" height="27" viewBox="0 0 401 27"><defs><clipPath id="sc1393"><rect width="401" height="27"/></clipPath></defs><g clip-path="url(#sc1393)"><g filter="url(#sb)"><rect width="401" height="27" fill="url(#pt_church)"/></g></g></svg>
<svg style="left:5px;top:5px" width="17" height="11" viewBox="0 0 17 11" fill="none" stroke="#f2eee0" stroke-width="1.3"><rect x="0.7" y="0.7" width="10" height="9.6" rx="1"/><path d="M10.7 4 L16 1 V10 L10.7 7Z"/></svg>
<div class="t" style="left:29px;top:6px;font-size:12.5px;color:#f6f2e6;width:372px;overflow:hidden">20231125_141354</div>
<div class="ib" style="left:0px;top:28px;width:21px"></div>
<div class="a" style="left:3px;top:44px;width:397px;height:3px;background:#f4f4f4;border-radius:1px"></div>
<svg style="left:3px;top:66px" width="397" height="20" viewBox="0 0 397 20"><rect x="0" y="11.0" width="3" height="1.0" fill="#e8c070"/><rect x="3" y="10.5" width="3" height="1.5" fill="#e8c070"/><rect x="6" y="10.4" width="1" height="1.6" fill="#e8c070"/><rect x="7" y="11.0" width="2" height="1.0" fill="#e8c070"/><rect x="9" y="5.1" width="1" height="6.9" fill="#e8c070"/><rect x="10" y="11.0" width="2" height="1.0" fill="#e8c070"/><rect x="12" y="9.8" width="2" height="2.2" fill="#e8c070"/><rect x="14" y="11.0" width="2" height="1.0" fill="#e8c070"/><rect x="16" y="11.0" width="2" height="1.0" fill="#e8c070"/><rect x="18" y="10.8" width="2" height="1.2" fill="#e8c070"/><rect x="20" y="10.3" width="2" height="1.7" fill="#e8c070"/><rect x="22" y="4.3" width="3" height="7.7" fill="#e8c070"/><rect x="25" y="11.0" width="1" height="1.0" fill="#e8c070"/><rect x="26" y="11.0" width="1" height="1.0" fill="#e8c070"/><rect x="27" y="10.9" width="1" height="1.1" fill="#e8c070"/><rect x="28" y="5.0" width="1" height="7.0" fill="#e8c070"/><rect x="29" y="11.0" width="1" height="1.0" fill="#e8c070"/><rect x="30" y="11.0" width="2" height="1.0" fill="#e8c070"/><rect x="32" y="9.8" width="1" height="2.2" fill="#e8c070"/><rect x="33" y="8.9" width="1" height="3.1" fill="#e8c070"/><rect x="34" y="10.8" width="1" height="1.2" fill="#e8c070"/><rect x="35" y="4.7" width="1" height="7.3" fill="#e8c070"/><rect x="36" y="8.1" width="2" height="3.9" fill="#e8c070"/><rect x="38" y="11.0" width="1" height="1.0" fill="#e8c070"/><rect x="39" y="6.4" width="3" height="5.6" fill="#e8c070"/><rect x="42" y="10.5" width="2" height="1.5" fill="#e8c070"/><rect x="44" y="7.9" width="2" height="4.1" fill="#e8c070"/><rect x="46" y="7.0" width="2" height="5.0" fill="#e8c070"/><rect x="48" y="11.0" width="1" height="1.0" fill="#e8c070"/><rect x="49" y="10.3" width="1" height="1.7" fill="#e8c070"/><rect x="50" y="10.3" width="1" height="1.7" fill="#e8c070"/><rect x="51" y="6.2" width="1" height="5.8" fill="#e8c070"/><rect x="52" y="9.9" width="1" height="2.1" fill="#e8c070"/><rect x="53" y="7.2" width="1" height="4.8" fill="#e8c070"/><rect x="54" y="11.0" width="2" height="1.0" fill="#e8c070"/><rect x="56" y="10.0" width="1" height="2.0" fill="#e8c070"/><rect x="57" y="6.0" width="2" height="6.0" fill="#e8c070"/><rect x="59" y="6.6" width="1" height="5.4" fill="#e8c070"/><rect x="60" y="10.7" width="2" height="1.3" fill="#e8c070"/><rect x="62" y="8.4" width="1" height="3.6" fill="#e8c070"/><rect x="63" y="10.8" width="3" height="1.2" fill="#e8c070"/><rect x="66" y="6.7" width="2" height="5.3" fill="#e8c070"/><rect x="68" y="8.0" width="3" height="4.0" fill="#e8c070"/><rect x="71" y="4.5" width="3" height="7.5" fill="#e8c070"/><rect x="74" y="4.3" width="3" height="7.7" fill="#e8c070"/><rect x="77" y="5.1" width="1" height="6.9" fill="#e8c070"/><rect x="78" y="11.0" width="2" height="1.0" fill="#e8c070"/><rect x="80" y="9.8" width="2" height="2.2" fill="#e8c070"/><rect x="82" y="7.7" width="2" height="4.3" fill="#e8c070"/><rect x="84" y="9.5" width="3" height="2.5" fill="#e8c070"/><rect x="87" y="10.7" width="2" height="1.3" fill="#e8c070"/><rect x="89" y="11.0" width="3" height="1.0" fill="#e8c070"/><rect x="92" y="6.5" width="3" height="5.5" fill="#e8c070"/><rect x="95" y="9.1" width="1" height="2.9" fill="#e8c070"/><rect x="96" y="9.5" width="2" height="2.5" fill="#e8c070"/><rect x="98" y="9.7" width="2" height="2.3" fill="#e8c070"/><rect x="100" y="6.7" width="2" height="5.3" fill="#e8c070"/><rect x="102" y="11.0" width="1" height="1.0" fill="#e8c070"/><rect x="103" y="11.0" width="3" height="1.0" fill="#e8c070"/><rect x="106" y="6.0" width="1" height="6.0" fill="#e8c070"/><rect x="107" y="7.9" width="1" height="4.1" fill="#e8c070"/><rect x="108" y="11.0" width="1" height="1.0" fill="#e8c070"/><rect x="109" y="10.9" width="1" height="1.1" fill="#e8c070"/><rect x="110" y="8.2" width="1" height="3.8" fill="#e8c070"/><rect x="111" y="5.8" width="3" height="6.2" fill="#e8c070"/><rect x="114" y="11.0" width="2" height="1.0" fill="#e8c070"/><rect x="116" y="11.0" width="1" height="1.0" fill="#e8c070"/><rect x="117" y="10.0" width="1" height="2.0" fill="#e8c070"/><rect x="118" y="10.9" width="1" height="1.1" fill="#e8c070"/><rect x="119" y="11.0" width="2" height="1.0" fill="#e8c070"/><rect x="121" y="10.8" width="1" height="1.2" fill="#e8c070"/><rect x="122" y="11.0" width="1" height="1.0" fill="#e8c070"/><rect x="123" y="11.0" width="3" height="1.0" fill="#e8c070"/><rect x="126" y="8.0" width="1" height="4.0" fill="#e8c070"/><rect x="127" y="11.0" width="1" height="1.0" fill="#e8c070"/><rect x="128" y="11.0" width="3" height="1.0" fill="#e8c070"/><rect x="131" y="11.0" width="1" height="1.0" fill="#e8c070"/><rect x="132" y="11.0" width="2" height="1.0" fill="#e8c070"/><rect x="134" y="10.3" width="2" height="1.7" fill="#e8c070"/><rect x="136" y="11.0" width="2" height="1.0" fill="#e8c070"/><rect x="138" y="11.0" width="1" height="1.0" fill="#e8c070"/><rect x="139" y="11.0" width="2" height="1.0" fill="#e8c070"/><rect x="141" y="11.0" width="3" height="1.0" fill="#e8c070"/><rect x="144" y="8.2" width="1" height="3.8" fill="#e8c070"/><rect x="145" y="11.0" width="1" height="1.0" fill="#e8c070"/><rect x="146" y="11.0" width="3" height="1.0" fill="#e8c070"/><rect x="149" y="9.3" width="1" height="2.7" fill="#e8c070"/><rect x="150" y="8.1" width="1" height="3.9" fill="#e8c070"/><rect x="151" y="10.7" width="3" height="1.3" fill="#e8c070"/><rect x="154" y="7.8" width="1" height="4.2" fill="#e8c070"/><rect x="155" y="11.0" width="2" height="1.0" fill="#e8c070"/><rect x="157" y="7.7" width="2" height="4.3" fill="#e8c070"/><rect x="159" y="8.9" width="1" height="3.1" fill="#e8c070"/><rect x="160" y="4.9" width="2" height="7.1" fill="#e8c070"/><rect x="162" y="3.6" width="1" height="8.4" fill="#e8c070"/><rect x="163" y="11.0" width="1" height="1.0" fill="#e8c070"/><rect x="164" y="10.1" width="3" height="1.9" fill="#e8c070"/><rect x="167" y="11.0" width="1" height="1.0" fill="#e8c070"/><rect x="168" y="8.8" width="1" height="3.2" fill="#e8c070"/><rect x="169" y="9.1" width="3" height="2.9" fill="#e8c070"/><rect x="172" y="6.5" width="2" height="5.5" fill="#e8c070"/><rect x="174" y="11.0" width="2" height="1.0" fill="#e8c070"/><rect x="176" y="10.3" width="2" height="1.7" fill="#e8c070"/><rect x="178" y="9.1" width="2" height="2.9" fill="#e8c070"/><rect x="180" y="6.9" width="1" height="5.1" fill="#e8c070"/><rect x="181" y="11.0" width="2" height="1.0" fill="#e8c070"/><rect x="183" y="11.0" width="2" height="1.0" fill="#e8c070"/><rect x="185" y="10.0" width="1" height="2.0" fill="#e8c070"/><rect x="186" y="10.9" width="1" height="1.1" fill="#e8c070"/><rect x="187" y="6.4" width="2" height="5.6" fill="#e8c070"/><rect x="189" y="6.5" width="3" height="5.5" fill="#e8c070"/><rect x="192" y="8.3" width="1" height="3.7" fill="#e8c070"/><rect x="193" y="9.4" width="2" height="2.6" fill="#e8c070"/><rect x="195" y="10.7" width="2" height="1.3" fill="#e8c070"/><rect x="197" y="11.0" width="2" height="1.0" fill="#e8c070"/><rect x="199" y="11.0" width="1" height="1.0" fill="#e8c070"/><rect x="200" y="11.0" width="3" height="1.0" fill="#e8c070"/><rect x="203" y="11.0" width="2" height="1.0" fill="#e8c070"/><rect x="205" y="8.1" width="1" height="3.9" fill="#e8c070"/><rect x="206" y="10.9" width="2" height="1.1" fill="#e8c070"/><rect x="208" y="5.8" width="2" height="6.2" fill="#e8c070"/><rect x="210" y="11.0" width="1" height="1.0" fill="#e8c070"/><rect x="211" y="3.8" width="1" height="8.2" fill="#e8c070"/><rect x="212" y="11.0" width="1" height="1.0" fill="#e8c070"/><rect x="213" y="4.3" width="2" height="7.7" fill="#e8c070"/><rect x="215" y="8.1" width="2" height="3.9" fill="#e8c070"/><rect x="217" y="8.2" width="3" height="3.8" fill="#e8c070"/><rect x="220" y="9.6" width="1" height="2.4" fill="#e8c070"/><rect x="221" y="7.6" width="1" height="4.4" fill="#e8c070"/><rect x="222" y="10.9" width="3" height="1.1" fill="#e8c070"/><rect x="225" y="11.0" width="1" height="1.0" fill="#e8c070"/><rect x="226" y="5.3" width="2" height="6.7" fill="#e8c070"/><rect x="228" y="11.0" width="2" height="1.0" fill="#e8c070"/><rect x="230" y="8.0" width="1" height="4.0" fill="#e8c070"/><rect x="231" y="11.0" width="2" height="1.0" fill="#e8c070"/><rect x="233" y="11.0" width="1" height="1.0" fill="#e8c070"/><rect x="234" y="9.5" width="1" height="2.5" fill="#e8c070"/><rect x="235" y="11.0" width="3" height="1.0" fill="#e8c070"/><rect x="238" y="6.5" width="2" height="5.5" fill="#e8c070"/><rect x="240" y="3.9" width="2" height="8.1" fill="#e8c070"/><rect x="242" y="4.0" width="1" height="8.0" fill="#e8c070"/><rect x="243" y="10.1" width="3" height="1.9" fill="#e8c070"/><rect x="246" y="7.8" width="2" height="4.2" fill="#e8c070"/><rect x="248" y="11.0" width="3" height="1.0" fill="#e8c070"/><rect x="251" y="7.8" width="2" height="4.2" fill="#e8c070"/><rect x="253" y="11.0" width="3" height="1.0" fill="#e8c070"/><rect x="256" y="6.5" width="3" height="5.5" fill="#e8c070"/><rect x="259" y="7.2" width="2" height="4.8" fill="#e8c070"/><rect x="261" y="11.0" width="2" height="1.0" fill="#e8c070"/><rect x="263" y="11.0" width="1" height="1.0" fill="#e8c070"/><rect x="264" y="6.5" width="3" height="5.5" fill="#e8c070"/><rect x="267" y="11.0" width="1" height="1.0" fill="#e8c070"/><rect x="268" y="8.9" width="3" height="3.1" fill="#e8c070"/><rect x="271" y="10.5" width="1" height="1.5" fill="#e8c070"/><rect x="272" y="4.4" width="1" height="7.6" fill="#e8c070"/><rect x="273" y="9.5" width="3" height="2.5" fill="#e8c070"/><rect x="276" y="11.0" width="2" height="1.0" fill="#e8c070"/><rect x="278" y="8.1" width="1" height="3.9" fill="#e8c070"/><rect x="279" y="10.9" width="2" height="1.1" fill="#e8c070"/><rect x="281" y="11.0" width="2" height="1.0" fill="#e8c070"/><rect x="283" y="11.0" width="3" height="1.0" fill="#e8c070"/><rect x="286" y="4.4" width="1" height="7.6" fill="#e8c070"/><rect x="287" y="6.6" width="1" height="5.4" fill="#e8c070"/><rect x="288" y="9.7" width="2" height="2.3" fill="#e8c070"/><rect x="290" y="11.0" width="2" height="1.0" fill="#e8c070"/><rect x="292" y="11.0" width="3" height="1.0" fill="#e8c070"/><rect x="295" y="4.5" width="2" height="7.5" fill="#e8c070"/><rect x="297" y="11.0" width="1" height="1.0" fill="#e8c070"/><rect x="298" y="11.0" width="3" height="1.0" fill="#e8c070"/><rect x="301" y="9.8" width="2" height="2.2" fill="#e8c070"/><rect x="303" y="8.7" width="2" height="3.3" fill="#e8c070"/><rect x="305" y="9.8" width="1" height="2.2" fill="#e8c070"/><rect x="306" y="11.0" width="2" height="1.0" fill="#e8c070"/><rect x="308" y="11.0" width="2" height="1.0" fill="#e8c070"/><rect x="310" y="9.3" width="1" height="2.7" fill="#e8c070"/><rect x="311" y="6.7" width="2" height="5.3" fill="#e8c070"/><rect x="313" y="11.0" width="3" height="1.0" fill="#e8c070"/><rect x="316" y="11.0" width="1" height="1.0" fill="#e8c070"/><rect x="317" y="5.7" width="1" height="6.3" fill="#e8c070"/><rect x="318" y="9.4" width="2" height="2.6" fill="#e8c070"/><rect x="320" y="11.0" width="3" height="1.0" fill="#e8c070"/><rect x="323" y="10.9" width="3" height="1.1" fill="#e8c070"/><rect x="326" y="3.7" width="1" height="8.3" fill="#e8c070"/><rect x="327" y="11.0" width="3" height="1.0" fill="#e8c070"/><rect x="330" y="11.0" width="1" height="1.0" fill="#e8c070"/><rect x="331" y="11.0" width="3" height="1.0" fill="#e8c070"/><rect x="334" y="8.4" width="1" height="3.6" fill="#e8c070"/><rect x="335" y="7.8" width="1" height="4.2" fill="#e8c070"/><rect x="336" y="9.1" width="2" height="2.9" fill="#e8c070"/><rect x="338" y="7.8" width="2" height="4.2" fill="#e8c070"/><rect x="340" y="7.7" width="2" height="4.3" fill="#e8c070"/><rect x="342" y="8.5" width="1" height="3.5" fill="#e8c070"/><rect x="343" y="9.2" width="3" height="2.8" fill="#e8c070"/><rect x="346" y="4.0" width="3" height="8.0" fill="#e8c070"/><rect x="349" y="11.0" width="3" height="1.0" fill="#e8c070"/><rect x="352" y="11.0" width="1" height="1.0" fill="#e8c070"/><rect x="353" y="9.1" width="1" height="2.9" fill="#e8c070"/><rect x="354" y="10.0" width="2" height="2.0" fill="#e8c070"/><rect x="356" y="6.1" width="2" height="5.9" fill="#e8c070"/><rect x="358" y="5.4" width="2" height="6.6" fill="#e8c070"/><rect x="360" y="9.9" width="2" height="2.1" fill="#e8c070"/><rect x="362" y="9.9" width="2" height="2.1" fill="#e8c070"/><rect x="364" y="11.0" width="1" height="1.0" fill="#e8c070"/><rect x="365" y="10.5" width="2" height="1.5" fill="#e8c070"/><rect x="367" y="11.0" width="1" height="1.0" fill="#e8c070"/><rect x="368" y="8.3" width="3" height="3.7" fill="#e8c070"/><rect x="371" y="6.6" width="1" height="5.4" fill="#e8c070"/><rect x="372" y="10.1" width="2" height="1.9" fill="#e8c070"/><rect x="374" y="10.5" width="2" height="1.5" fill="#e8c070"/><rect x="376" y="10.0" width="3" height="2.0" fill="#e8c070"/><rect x="379" y="4.5" width="2" height="7.5" fill="#e8c070"/><rect x="381" y="6.2" width="1" height="5.8" fill="#e8c070"/><rect x="382" y="11.0" width="1" height="1.0" fill="#e8c070"/><rect x="383" y="11.0" width="1" height="1.0" fill="#e8c070"/><rect x="384" y="11.0" width="1" height="1.0" fill="#e8c070"/><rect x="385" y="10.5" width="1" height="1.5" fill="#e8c070"/><rect x="386" y="9.5" width="2" height="2.5" fill="#e8c070"/><rect x="388" y="9.1" width="2" height="2.9" fill="#e8c070"/><rect x="390" y="11.0" width="1" height="1.0" fill="#e8c070"/><rect x="391" y="11.0" width="1" height="1.0" fill="#e8c070"/><rect x="392" y="7.3" width="2" height="4.7" fill="#e8c070"/><rect x="394" y="4.9" width="1" height="7.1" fill="#e8c070"/><rect x="395" y="7.2" width="3" height="4.8" fill="#e8c070"/><rect y="11.5" width="397" height="1.6" fill="#d8c898"/><rect y="13.1" width="397" height="1" fill="#4a3a18" opacity=".6"/><rect y="14.1" width="397" height="3.9" fill="#e8c070"/></svg>
</div>
<div class="clipv" style="left:1798px;top:747px;width:77px;height:89px;border-radius:5px 0 0 5px">
<div class="cliph" style="top:21px;left:1px;right:2px"></div>
<svg style="left:1px;top:23px" width="75" height="27" viewBox="0 0 75 27"><defs><clipPath id="sc1798"><rect width="75" height="27"/></clipPath></defs><g clip-path="url(#sc1798)"><g filter="url(#sb)"><rect width="75" height="27" fill="url(#pt_church)"/></g></g></svg>
<svg style="left:5px;top:5px" width="17" height="11" viewBox="0 0 17 11" fill="none" stroke="#f2eee0" stroke-width="1.3"><rect x="0.7" y="0.7" width="10" height="9.6" rx="1"/><path d="M10.7 4 L16 1 V10 L10.7 7Z"/></svg>
<div class="t" style="left:29px;top:6px;font-size:12.5px;color:#f6f2e6;width:46px;overflow:hidden">20231125_141</div>
<div class="ib" style="left:0px;top:28px;width:21px"></div>
<svg style="left:3px;top:66px" width="71" height="20" viewBox="0 0 71 20"><rect x="0" y="7.6" width="1" height="4.4" fill="#e8c070"/><rect x="1" y="10.5" width="3" height="1.5" fill="#e8c070"/><rect x="4" y="11.0" width="1" height="1.0" fill="#e8c070"/><rect x="5" y="7.3" width="2" height="4.7" fill="#e8c070"/><rect x="7" y="11.0" width="2" height="1.0" fill="#e8c070"/><rect x="9" y="11.0" width="2" height="1.0" fill="#e8c070"/><rect x="11" y="11.0" width="1" height="1.0" fill="#e8c070"/><rect x="12" y="9.5" width="3" height="2.5" fill="#e8c070"/><rect x="15" y="7.3" width="1" height="4.7" fill="#e8c070"/><rect x="16" y="11.0" width="2" height="1.0" fill="#e8c070"/><rect x="18" y="9.3" width="1" height="2.7" fill="#e8c070"/><rect x="19" y="6.9" width="2" height="5.1" fill="#e8c070"/><rect x="21" y="11.0" width="1" height="1.0" fill="#e8c070"/><rect x="22" y="9.3" width="1" height="2.7" fill="#e8c070"/><rect x="23" y="8.3" width="2" height="3.7" fill="#e8c070"/><rect x="25" y="11.0" width="2" height="1.0" fill="#e8c070"/><rect x="27" y="11.0" width="1" height="1.0" fill="#e8c070"/><rect x="28" y="11.0" width="1" height="1.0" fill="#e8c070"/><rect x="29" y="11.0" width="3" height="1.0" fill="#e8c070"/><rect x="32" y="11.0" width="1" height="1.0" fill="#e8c070"/><rect x="33" y="11.0" width="2" height="1.0" fill="#e8c070"/><rect x="35" y="8.5" width="1" height="3.5" fill="#e8c070"/><rect x="36" y="11.0" width="2" height="1.0" fill="#e8c070"/><rect x="38" y="8.2" width="3" height="3.8" fill="#e8c070"/><rect x="41" y="11.0" width="3" height="1.0" fill="#e8c070"/><rect x="44" y="7.7" width="1" height="4.3" fill="#e8c070"/><rect x="45" y="11.0" width="2" height="1.0" fill="#e8c070"/><rect x="47" y="8.9" width="1" height="3.1" fill="#e8c070"/><rect x="48" y="8.2" width="2" height="3.8" fill="#e8c070"/><rect x="50" y="11.0" width="1" height="1.0" fill="#e8c070"/><rect x="51" y="8.7" width="3" height="3.3" fill="#e8c070"/><rect x="54" y="11.0" width="1" height="1.0" fill="#e8c070"/><rect x="55" y="11.0" width="2" height="1.0" fill="#e8c070"/><rect x="57" y="6.9" width="3" height="5.1" fill="#e8c070"/><rect x="60" y="6.8" width="2" height="5.2" fill="#e8c070"/><rect x="62" y="11.0" width="2" height="1.0" fill="#e8c070"/><rect x="64" y="11.0" width="1" height="1.0" fill="#e8c070"/><rect x="65" y="11.0" width="2" height="1.0" fill="#e8c070"/><rect x="67" y="11.0" width="1" height="1.0" fill="#e8c070"/><rect x="68" y="11.0" width="2" height="1.0" fill="#e8c070"/><rect x="70" y="10.0" width="3" height="2.0" fill="#e8c070"/><rect y="11.5" width="71" height="1.6" fill="#d8c898"/><rect y="13.1" width="71" height="1" fill="#4a3a18" opacity=".6"/><rect y="14.1" width="71" height="3.9" fill="#e8c070"/></svg>
</div>
<div class="a" style="left:890px;top:821px;width:8px;height:8px;border-radius:50%;background:#f0f0f0"></div>
<div class="a" style="left:225px;top:766px;width:7px;height:35px;border-radius:4px;background:linear-gradient(90deg,#909088,#e0e0c8 50%,#a0a090);border:1px solid #888"></div>
<div class="a" style="left:242px;top:766px;width:7px;height:35px;border-radius:4px;background:linear-gradient(90deg,#909088,#e0e0c8 50%,#a0a090);border:1px solid #888"></div>
<div class="clipv" style="left:1251px;top:843px;width:34px;height:54px;border-radius:4px">
<svg style="left:7px;top:5px" width="15" height="13" viewBox="0 0 15 13" fill="none" stroke="#ece8dc" stroke-width="1.2"><rect x="0.6" y="0.6" width="13.8" height="11.8" rx="1"/><path d="M1 10 L5.5 5.5 L9 8.5 L14 4"/><circle cx="5" cy="3.8" r="1" fill="#ece8dc"/></svg>
<div class="t" style="left:29px;top:6px;font-size:12px;color:#f6f2e6">2</div>
<div class="cliph" style="top:21px;left:3px;right:3px"></div>
<svg style="left:0px;top:23px" width="34" height="26" viewBox="0 0 34 26"><rect width="34" height="26" fill="#b0a8a8"/><g filter="url(#sb)"><ellipse cx="26" cy="12" rx="6" ry="10" fill="#605050" opacity="1"/><ellipse cx="8" cy="8" rx="6" ry="6" fill="#e8e0e0" opacity="1"/><ellipse cx="30" cy="4" rx="4" ry="4" fill="#403838" opacity="1"/></g></svg>
<div class="ib" style="left:1px;top:28.5px"></div>
</div>
<div class="clipv" style="left:1287px;top:843px;width:34px;height:54px;border-radius:4px">
<svg style="left:7px;top:5px" width="15" height="13" viewBox="0 0 15 13" fill="none" stroke="#ece8dc" stroke-width="1.2"><rect x="0.6" y="0.6" width="13.8" height="11.8" rx="1"/><path d="M1 10 L5.5 5.5 L9 8.5 L14 4"/><circle cx="5" cy="3.8" r="1" fill="#ece8dc"/></svg>
<div class="t" style="left:29px;top:6px;font-size:12px;color:#f6f2e6">2</div>
<div class="cliph" style="top:21px;left:3px;right:3px"></div>
<svg style="left:0px;top:23px" width="34" height="26" viewBox="0 0 34 26"><rect width="34" height="26" fill="#b8b8b4"/><g filter="url(#sb)"><ellipse cx="6" cy="4" rx="5" ry="5" fill="#404040" opacity="1"/><ellipse cx="26" cy="12" rx="4" ry="12" fill="#505050" opacity="1"/><ellipse cx="16" cy="20" rx="5" ry="6" fill="#909090" opacity="1"/></g></svg>
<div class="ib" style="left:1px;top:28.5px"></div>
</div>
<div class="clipv" style="left:1324px;top:843px;width:34px;height:54px;border-radius:4px">
<svg style="left:7px;top:5px" width="15" height="13" viewBox="0 0 15 13" fill="none" stroke="#ece8dc" stroke-width="1.2"><rect x="0.6" y="0.6" width="13.8" height="11.8" rx="1"/><path d="M1 10 L5.5 5.5 L9 8.5 L14 4"/><circle cx="5" cy="3.8" r="1" fill="#ece8dc"/></svg>
<div class="t" style="left:29px;top:6px;font-size:12px;color:#f6f2e6">2</div>
<div class="cliph" style="top:21px;left:3px;right:3px"></div>
<svg style="left:0px;top:23px" width="34" height="26" viewBox="0 0 34 26"><rect width="34" height="26" fill="#a8a8a0"/><g filter="url(#sb)"><ellipse cx="10" cy="8" rx="6" ry="6" fill="#d8d8d0" opacity="1"/><ellipse cx="24" cy="10" rx="6" ry="10" fill="#404040" opacity="1"/><ellipse cx="30" cy="18" rx="4" ry="8" fill="#e0e0d8" opacity="1"/></g></svg>
<div class="ib" style="left:1px;top:28.5px"></div>
</div>
<div class="clipv" style="left:1360px;top:843px;width:34px;height:54px;border-radius:4px">
<svg style="left:7px;top:5px" width="15" height="13" viewBox="0 0 15 13" fill="none" stroke="#ece8dc" stroke-width="1.2"><rect x="0.6" y="0.6" width="13.8" height="11.8" rx="1"/><path d="M1 10 L5.5 5.5 L9 8.5 L14 4"/><circle cx="5" cy="3.8" r="1" fill="#ece8dc"/></svg>
<div class="t" style="left:29px;top:6px;font-size:12px;color:#f6f2e6">2</div>
<div class="cliph" style="top:21px;left:3px;right:3px"></div>
<svg style="left:0px;top:23px" width="34" height="26" viewBox="0 0 34 26"><rect width="34" height="26" fill="#a0a0a0"/><g filter="url(#sb)"><ellipse cx="6" cy="6" rx="6" ry="6" fill="#505050" opacity="1"/><ellipse cx="20" cy="14" rx="4" ry="12" fill="#e0e0e0" opacity="1"/><ellipse cx="30" cy="12" rx="3" ry="12" fill="#404040" opacity="1"/></g></svg>
<div class="ib" style="left:1px;top:28.5px"></div>
</div>
<div class="clipv" style="left:1397px;top:843px;width:34px;height:54px;border-radius:4px">
<svg style="left:7px;top:5px" width="15" height="13" viewBox="0 0 15 13" fill="none" stroke="#ece8dc" stroke-width="1.2"><rect x="0.6" y="0.6" width="13.8" height="11.8" rx="1"/><path d="M1 10 L5.5 5.5 L9 8.5 L14 4"/><circle cx="5" cy="3.8" r="1" fill="#ece8dc"/></svg>
<div class="t" style="left:29px;top:6px;font-size:12px;color:#f6f2e6">2</div>
<div class="cliph" style="top:21px;left:3px;right:3px"></div>
<svg style="left:0px;top:23px" width="34" height="26" viewBox="0 0 34 26"><rect width="34" height="26" fill="#b4b4b0"/><g filter="url(#sb)"><ellipse cx="18" cy="6" rx="8" ry="6" fill="#606060" opacity="1"/><ellipse cx="26" cy="20" rx="6" ry="8" fill="#e0e0e0" opacity="1"/><ellipse cx="8" cy="16" rx="4" ry="8" fill="#707070" opacity="1"/></g></svg>
<div class="ib" style="left:1px;top:28.5px"></div>
</div>
<div class="clipv" style="left:1433px;top:843px;width:34px;height:54px;border-radius:4px">
<svg style="left:7px;top:5px" width="15" height="13" viewBox="0 0 15 13" fill="none" stroke="#ece8dc" stroke-width="1.2"><rect x="0.6" y="0.6" width="13.8" height="11.8" rx="1"/><path d="M1 10 L5.5 5.5 L9 8.5 L14 4"/><circle cx="5" cy="3.8" r="1" fill="#ece8dc"/></svg>
<div class="t" style="left:29px;top:6px;font-size:12px;color:#f6f2e6">2</div>
<div class="cliph" style="top:21px;left:3px;right:3px"></div>
<svg style="left:0px;top:23px" width="34" height="26" viewBox="0 0 34 26"><rect width="34" height="26" fill="#304828"/><g filter="url(#sb)"><ellipse cx="26" cy="14" rx="6" ry="6" fill="#c04040" opacity="1"/><ellipse cx="10" cy="6" rx="8" ry="6" fill="#507040" opacity="1"/><ellipse cx="30" cy="22" rx="4" ry="4" fill="#e06060" opacity="1"/></g></svg>
<div class="ib" style="left:1px;top:28.5px"></div>
</div>
<div class="clipv" style="left:1470px;top:843px;width:34px;height:54px;border-radius:4px">
<svg style="left:7px;top:5px" width="15" height="13" viewBox="0 0 15 13" fill="none" stroke="#ece8dc" stroke-width="1.2"><rect x="0.6" y="0.6" width="13.8" height="11.8" rx="1"/><path d="M1 10 L5.5 5.5 L9 8.5 L14 4"/><circle cx="5" cy="3.8" r="1" fill="#ece8dc"/></svg>
<div class="t" style="left:29px;top:6px;font-size:12px;color:#f6f2e6">2</div>
<div class="cliph" style="top:21px;left:3px;right:3px"></div>
<svg style="left:0px;top:23px" width="34" height="26" viewBox="0 0 34 26"><rect width="34" height="26" fill="#507838"/><g filter="url(#sb)"><ellipse cx="24" cy="8" rx="8" ry="6" fill="#90b060" opacity="1"/><ellipse cx="28" cy="20" rx="5" ry="6" fill="#d02020" opacity="1"/><ellipse cx="10" cy="20" rx="6" ry="4" fill="#80a050" opacity="1"/></g></svg>
<div class="ib" style="left:1px;top:28.5px"></div>
</div>
<div class="clipv" style="left:1506px;top:843px;width:34px;height:54px;border-radius:4px">
<svg style="left:7px;top:5px" width="15" height="13" viewBox="0 0 15 13" fill="none" stroke="#ece8dc" stroke-width="1.2"><rect x="0.6" y="0.6" width="13.8" height="11.8" rx="1"/><path d="M1 10 L5.5 5.5 L9 8.5 L14 4"/><circle cx="5" cy="3.8" r="1" fill="#ece8dc"/></svg>
<div class="t" style="left:29px;top:6px;font-size:12px;color:#f6f2e6">2</div>
<div class="cliph" style="top:21px;left:3px;right:3px"></div>
<svg style="left:0px;top:23px" width="34" height="26" viewBox="0 0 34 26"><rect width="34" height="26" fill="#a0a8a0"/><g filter="url(#sb)"><ellipse cx="26" cy="12" rx="4" ry="10" fill="#e8e8f0" opacity="1"/><ellipse cx="10" cy="6" rx="8" ry="4" fill="#507040" opacity="1"/><ellipse cx="20" cy="20" rx="6" ry="6" fill="#808080" opacity="1"/></g></svg>
<div class="ib" style="left:1px;top:28.5px"></div>
</div>
<div class="clipv" style="left:1543px;top:843px;width:34px;height:54px;border-radius:4px">
<svg style="left:7px;top:5px" width="15" height="13" viewBox="0 0 15 13" fill="none" stroke="#ece8dc" stroke-width="1.2"><rect x="0.6" y="0.6" width="13.8" height="11.8" rx="1"/><path d="M1 10 L5.5 5.5 L9 8.5 L14 4"/><circle cx="5" cy="3.8" r="1" fill="#ece8dc"/></svg>
<div class="t" style="left:29px;top:6px;font-size:12px;color:#f6f2e6">2</div>
<div class="cliph" style="top:21px;left:3px;right:3px"></div>
<svg style="left:0px;top:23px" width="34" height="26" viewBox="0 0 34 26"><rect width="34" height="26" fill="#70905a"/><g filter="url(#sb)"><ellipse cx="26" cy="12" rx="5" ry="10" fill="#a08070" opacity="1"/><ellipse cx="10" cy="4" rx="8" ry="5" fill="#f0f0f0" opacity="1"/><ellipse cx="18" cy="20" rx="8" ry="4" fill="#508040" opacity="1"/></g></svg>
<div class="ib" style="left:1px;top:28.5px"></div>
</div>
<div class="clipv" style="left:1579px;top:843px;width:34px;height:54px;border-radius:4px">
<svg style="left:7px;top:5px" width="15" height="13" viewBox="0 0 15 13" fill="none" stroke="#ece8dc" stroke-width="1.2"><rect x="0.6" y="0.6" width="13.8" height="11.8" rx="1"/><path d="M1 10 L5.5 5.5 L9 8.5 L14 4"/><circle cx="5" cy="3.8" r="1" fill="#ece8dc"/></svg>
<div class="t" style="left:29px;top:6px;font-size:12px;color:#f6f2e6">2</div>
<div class="cliph" style="top:21px;left:3px;right:3px"></div>
<svg style="left:0px;top:23px" width="34" height="26" viewBox="0 0 34 26"><rect width="34" height="26" fill="#9a9a90"/><g filter="url(#sb)"><ellipse cx="24" cy="14" rx="6" ry="10" fill="#806050" opacity="1"/><ellipse cx="10" cy="6" rx="8" ry="4" fill="#507040" opacity="1"/><ellipse cx="28" cy="22" rx="4" ry="4" fill="#e0e0e0" opacity="1"/></g></svg>
<div class="ib" style="left:1px;top:28.5px"></div>
</div>
<div class="clipv" style="left:1616px;top:843px;width:34px;height:54px;border-radius:4px">
<svg style="left:7px;top:5px" width="15" height="13" viewBox="0 0 15 13" fill="none" stroke="#ece8dc" stroke-width="1.2"><rect x="0.6" y="0.6" width="13.8" height="11.8" rx="1"/><path d="M1 10 L5.5 5.5 L9 8.5 L14 4"/><circle cx="5" cy="3.8" r="1" fill="#ece8dc"/></svg>
<div class="t" style="left:29px;top:6px;font-size:12px;color:#f6f2e6">2</div>
<div class="cliph" style="top:21px;left:3px;right:3px"></div>
<svg style="left:0px;top:23px" width="34" height="26" viewBox="0 0 34 26"><rect width="34" height="26" fill="#304050"/><g filter="url(#sb)"><ellipse cx="24" cy="10" rx="6" ry="8" fill="#c0c8d0" opacity="1"/><ellipse cx="10" cy="4" rx="8" ry="4" fill="#f0f0f0" opacity="1"/><ellipse cx="28" cy="20" rx="5" ry="6" fill="#203040" opacity="1"/></g></svg>
<div class="ib" style="left:1px;top:28.5px"></div>
</div>
<div class="clipv" style="left:1652px;top:843px;width:34px;height:54px;border-radius:4px">
<svg style="left:7px;top:5px" width="15" height="13" viewBox="0 0 15 13" fill="none" stroke="#ece8dc" stroke-width="1.2"><rect x="0.6" y="0.6" width="13.8" height="11.8" rx="1"/><path d="M1 10 L5.5 5.5 L9 8.5 L14 4"/><circle cx="5" cy="3.8" r="1" fill="#ece8dc"/></svg>
<div class="t" style="left:29px;top:6px;font-size:12px;color:#f6f2e6">2</div>
<div class="cliph" style="top:21px;left:3px;right:3px"></div>
<svg style="left:0px;top:23px" width="34" height="26" viewBox="0 0 34 26"><rect width="34" height="26" fill="#6a6a30"/><g filter="url(#sb)"><ellipse cx="24" cy="10" rx="6" ry="6" fill="#e0b020" opacity="1"/><ellipse cx="28" cy="20" rx="5" ry="5" fill="#c02020" opacity="1"/><ellipse cx="10" cy="18" rx="6" ry="6" fill="#508030" opacity="1"/></g></svg>
<div class="ib" style="left:1px;top:28.5px"></div>
</div>
<div class="clipv" style="left:1688px;top:843px;width:34px;height:54px;border-radius:4px">
<svg style="left:7px;top:5px" width="15" height="13" viewBox="0 0 15 13" fill="none" stroke="#ece8dc" stroke-width="1.2"><rect x="0.6" y="0.6" width="13.8" height="11.8" rx="1"/><path d="M1 10 L5.5 5.5 L9 8.5 L14 4"/><circle cx="5" cy="3.8" r="1" fill="#ece8dc"/></svg>
<div class="t" style="left:29px;top:6px;font-size:12px;color:#f6f2e6">2</div>
<div class="cliph" style="top:21px;left:3px;right:3px"></div>
<svg style="left:0px;top:23px" width="34" height="26" viewBox="0 0 34 26"><rect width="34" height="26" fill="#a09898"/><g filter="url(#sb)"><ellipse cx="24" cy="12" rx="5" ry="10" fill="#e0d0d0" opacity="1"/><ellipse cx="10" cy="6" rx="6" ry="6" fill="#403838" opacity="1"/><ellipse cx="30" cy="22" rx="4" ry="4" fill="#c08080" opacity="1"/></g></svg>
<div class="ib" style="left:1px;top:28.5px"></div>
</div>
<div class="clipv" style="left:1725px;top:843px;width:34px;height:54px;border-radius:4px">
<svg style="left:7px;top:5px" width="15" height="13" viewBox="0 0 15 13" fill="none" stroke="#ece8dc" stroke-width="1.2"><rect x="0.6" y="0.6" width="13.8" height="11.8" rx="1"/><path d="M1 10 L5.5 5.5 L9 8.5 L14 4"/><circle cx="5" cy="3.8" r="1" fill="#ece8dc"/></svg>
<div class="t" style="left:29px;top:6px;font-size:12px;color:#f6f2e6">2</div>
<div class="cliph" style="top:21px;left:3px;right:3px"></div>
<svg style="left:0px;top:23px" width="34" height="26" viewBox="0 0 34 26"><rect width="34" height="26" fill="#b86860"/><g filter="url(#sb)"><ellipse cx="24" cy="12" rx="6" ry="10" fill="#f0c0c0" opacity="1"/><ellipse cx="10" cy="8" rx="6" ry="8" fill="#e0a0a0" opacity="1"/><ellipse cx="30" cy="20" rx="4" ry="6" fill="#803030" opacity="1"/></g></svg>
<div class="ib" style="left:1px;top:28.5px"></div>
</div>
<div class="clipv" style="left:1761px;top:843px;width:34px;height:54px;border-radius:4px">
<svg style="left:7px;top:5px" width="15" height="13" viewBox="0 0 15 13" fill="none" stroke="#ece8dc" stroke-width="1.2"><rect x="0.6" y="0.6" width="13.8" height="11.8" rx="1"/><path d="M1 10 L5.5 5.5 L9 8.5 L14 4"/><circle cx="5" cy="3.8" r="1" fill="#ece8dc"/></svg>
<div class="t" style="left:29px;top:6px;font-size:12px;color:#f6f2e6">2</div>
<div class="cliph" style="top:21px;left:3px;right:3px"></div>
<svg style="left:0px;top:23px" width="34" height="26" viewBox="0 0 34 26"><rect width="34" height="26" fill="#5080b8"/><g filter="url(#sb)"><ellipse cx="24" cy="14" rx="6" ry="10" fill="#203040" opacity="1"/><ellipse cx="10" cy="4" rx="10" ry="5" fill="#a0c0e0" opacity="1"/><ellipse cx="30" cy="22" rx="4" ry="4" fill="#406080" opacity="1"/></g></svg>
<div class="ib" style="left:1px;top:28.5px"></div>
</div>
<div class="a" style="left:140px;top:623px;width:1px;height:417px;background:#d42020;"></div>
<svg style="left:140px;top:621px" width="8" height="16" viewBox="0 0 8 16"><path d="M0 0 H5 Q7.5 0 7.5 2.5 V8 L0 15Z" fill="#c82020"/></svg>
<svg style="left:140px;top:628px" width="18" height="13" viewBox="0 0 18 13"><path d="M7 0.7 H16.8 V11.8 H0.8Z" fill="#6e5a38" stroke="#e8b860" stroke-width="1.2"/></svg>
<div class="a" style="left:143px;top:34px;width:270px;height:188px;background:#f9f9f9;border-radius:7px;box-shadow:0 1px 3px rgba(0,0,0,.3)"></div>
<div class="t" style="left:188px;top:43px;font-size:15px;color:#111;">MultiCam Designer</div>
<div class="t" style="left:188px;top:69px;font-size:15px;color:#111;">Theme Designer</div>
<div class="t" style="left:188px;top:95px;font-size:15px;color:#111;">Screen Recorder</div>
<div class="t" style="left:188px;top:121px;font-size:15px;color:#111;">Slideshow Creator</div>
<div class="t" style="left:188px;top:147px;font-size:15px;color:#111;">Paint Designer</div>
<div class="t" style="left:188px;top:173px;font-size:15px;color:#111;">Video Collage Designer</div>
<div class="t" style="left:188px;top:199px;font-size:15px;color:#a0a0a0;">Chapter Markers</div>
</body></html>
